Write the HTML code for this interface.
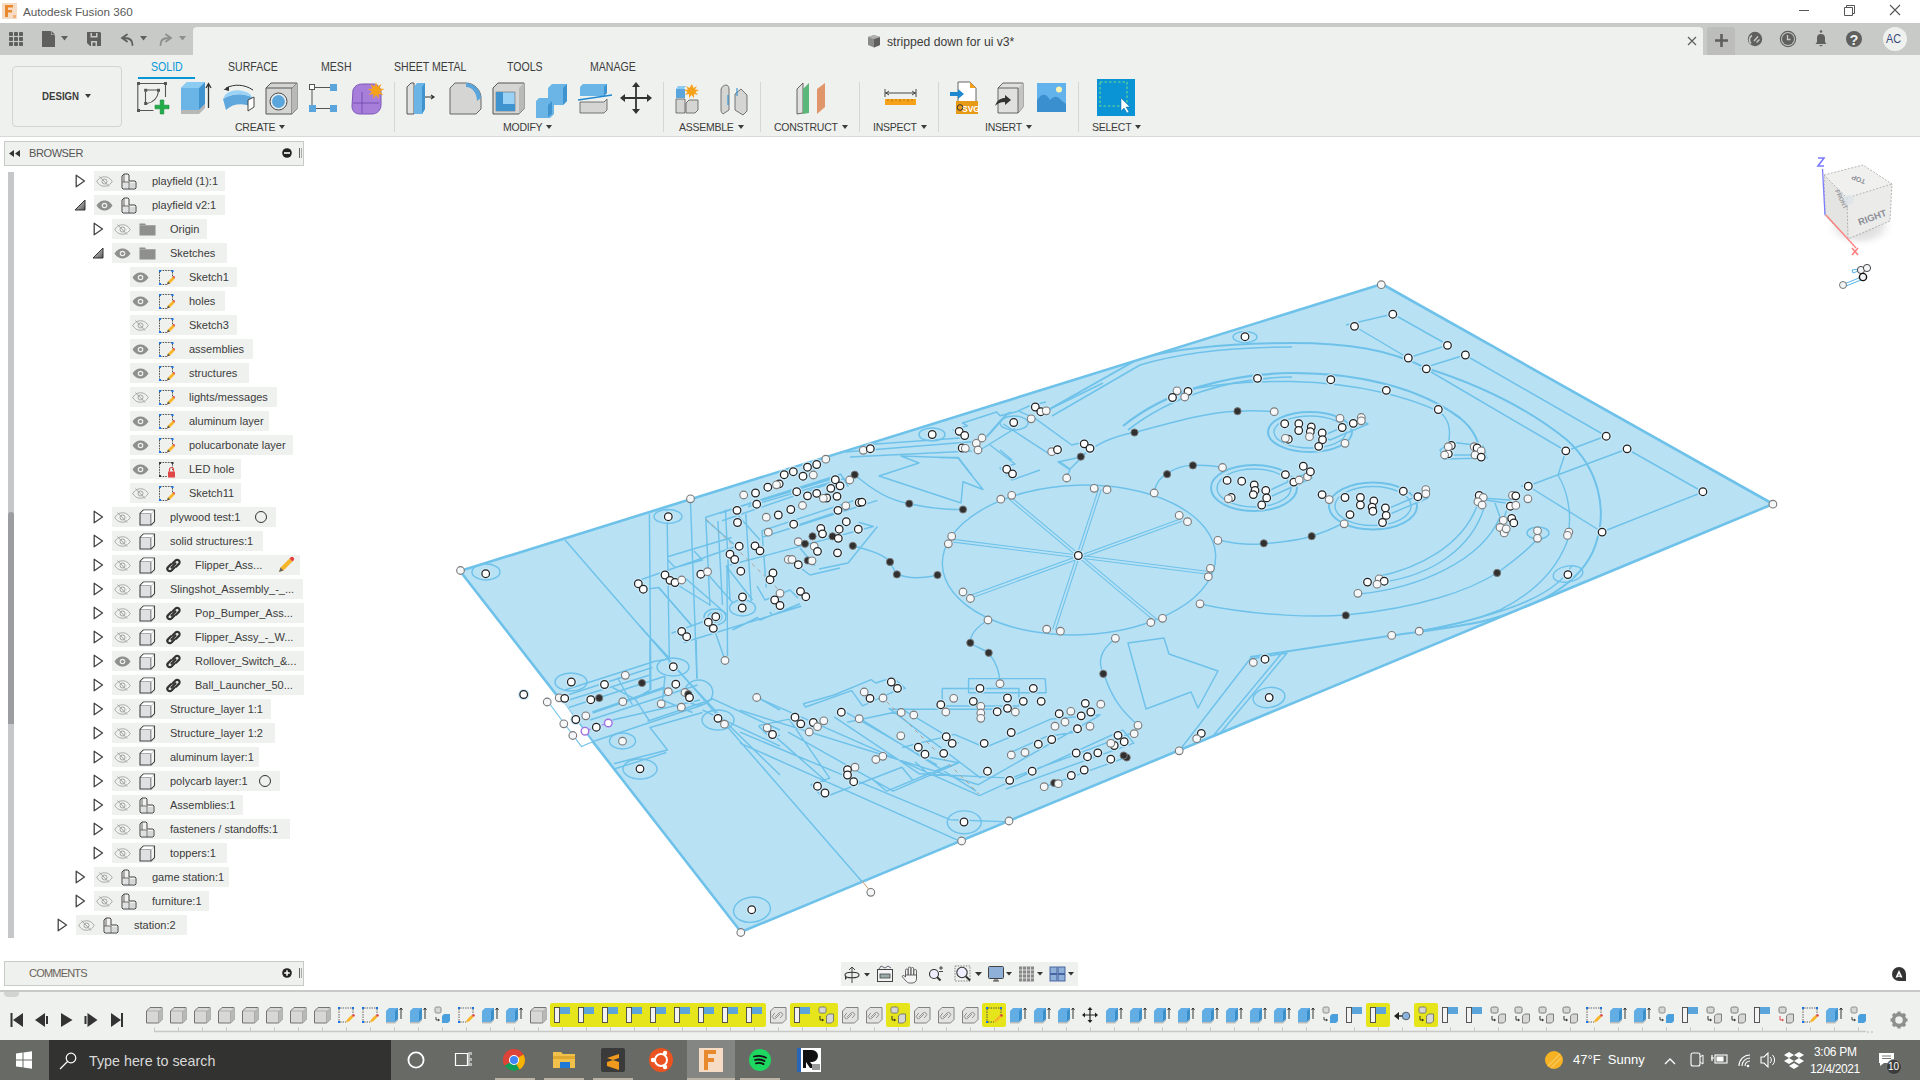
<!DOCTYPE html><html><head><meta charset="utf-8"><style>
*{box-sizing:border-box;margin:0;padding:0}
html,body{width:1920px;height:1080px;overflow:hidden;background:#fff;font-family:"Liberation Sans", sans-serif;}
.a{position:absolute}
.t{position:absolute;white-space:nowrap;line-height:1}
svg{position:absolute;overflow:visible}
</style></head><body>

<div class="a" style="left:0;top:0;width:1920px;height:23px;background:#fff"></div>
<svg style="left:2px;top:3px" width="15" height="16" viewBox="0 0 15 16">
<rect x="0" y="0" width="15" height="16" fill="#f6dcc4"/>
<path d="M3 2h8v2.5H6V7h4v2.5H6V14H3z" fill="#e8892d"/>
<path d="M11 12h3v3h-3z" fill="#f0b27a"/></svg>
<div class="t" style="left:23px;top:6px;font-size:11.7px;color:#5a5a5a">Autodesk Fusion 360</div>
<div class="a" style="left:1799px;top:10px;width:10px;height:1px;background:#555"></div>
<svg style="left:1844px;top:5px" width="11" height="11" viewBox="0 0 11 11"><path d="M0.5 2.5h8v8h-8z M2.5 2.5v-2h8v8h-2" fill="none" stroke="#555" stroke-width="1"/></svg>
<svg style="left:1890px;top:5px" width="11" height="11" viewBox="0 0 11 11"><path d="M0 0L10 10M10 0L0 10" stroke="#555" stroke-width="1.1"/></svg>
<div class="a" style="left:0;top:23px;width:1920px;height:32px;background:#c8cac7"></div>
<div class="a" style="left:193px;top:27px;width:1510px;height:28px;background:#eff1ee;border-top-left-radius:4px;border-top-right-radius:4px"></div>
<div class="a" style="left:1707px;top:27px;width:28px;height:28px;background:#bdbebc;border-top-left-radius:3px;border-top-right-radius:3px"></div>
<svg style="left:0;top:0" width="1" height="1"><rect x="9" y="32" width="4" height="4" rx="0.8" fill="#5f605e"/><rect x="14" y="32" width="4" height="4" rx="0.8" fill="#5f605e"/><rect x="19" y="32" width="4" height="4" rx="0.8" fill="#5f605e"/><rect x="9" y="37" width="4" height="4" rx="0.8" fill="#5f605e"/><rect x="14" y="37" width="4" height="4" rx="0.8" fill="#5f605e"/><rect x="19" y="37" width="4" height="4" rx="0.8" fill="#5f605e"/><rect x="9" y="42" width="4" height="4" rx="0.8" fill="#5f605e"/><rect x="14" y="42" width="4" height="4" rx="0.8" fill="#5f605e"/><rect x="19" y="42" width="4" height="4" rx="0.8" fill="#5f605e"/></svg>
<svg style="left:0;top:0" width="1" height="1"><path d="M42 31h8.5l4.5 4.5V47H42z" fill="#5f605e"/><path d="M51 31v4h4z" fill="#c8cac7"/><path d="M51.5 31l3.5 3.5h-3.5z" fill="#5f605e"/>
<path d="M61 36h7l-3.5 4.5z" fill="#5f605e"/>
<path d="M87 32h13l1 1v13H90l-3-3z" fill="#5f605e"/><rect x="90.5" y="33" width="7" height="4.5" fill="#c8cac7"/><rect x="92" y="33" width="4" height="3" fill="#5f605e"/><rect x="91" y="41" width="6" height="5" fill="#c8cac7"/><rect x="92.5" y="42.5" width="3" height="3.5" fill="#5f605e"/>
<path d="M132.5 45 C132.5 40 130 38 125 38 M127 34.5 L122 38 L127 41.5" fill="none" stroke="#5f605e" stroke-width="1.8" stroke-linecap="round"/>
<path d="M140 36h7l-3.5 4.5z" fill="#5f605e"/>
<path d="M160.5 45 C160.5 40 163 38 168 38 M166 34.5 L171 38 L166 41.5" fill="none" stroke="#8e8f8d" stroke-width="1.8" stroke-linecap="round"/>
<path d="M179 36h7l-3.5 4.5z" fill="#8e8f8d"/>
</svg>
<svg style="left:867px;top:34px" width="14" height="14" viewBox="0 0 14 14"><path d="M1 3l6-2 6 2v8l-6 2.5-6-2.5z" fill="#8a8b89"/><path d="M7 5l6-2v8l-6 2.5z" fill="#5f605e"/><path d="M1 3l6-2 6 2-6 2z" fill="#b0b1af"/></svg>
<div class="t" style="left:887px;top:36px;font-size:12.2px;color:#3c3c3c">stripped down for ui v3*</div>
<svg style="left:1688px;top:37px" width="9" height="9"><path d="M0 0L8 8M8 0L0 8" stroke="#5f605e" stroke-width="1.2"/></svg>
<svg style="left:1715px;top:34px" width="13" height="13"><path d="M6.5 0v13M0 6.5h13" stroke="#5f605e" stroke-width="2.6"/></svg>
<svg style="left:0;top:0" width="1" height="1">
<circle cx="1755" cy="39" r="7.2" fill="#5f605e"/><path d="M1751 43.5a5 5 0 0 1 1-8" stroke="#c8cac7" stroke-width="1.6" fill="none"/><path d="M1754 41l4-4.5M1756.5 42.5l3-3" stroke="#c8cac7" stroke-width="1.4"/>
<circle cx="1788" cy="39" r="7.6" fill="none" stroke="#5f605e" stroke-width="1.2"/><circle cx="1788" cy="39" r="6" fill="#5f605e"/><path d="M1787.5 35v4.5h3" stroke="#c8cac7" stroke-width="1.3" fill="none"/>
<path d="M1815.5 44 h11 l-1.5 -2 v-4 a4 4 0 0 0 -8 0 v4z" fill="#5f605e"/><circle cx="1821" cy="31.5" r="1.2" fill="#5f605e"/><path d="M1819 45h4l-2 1.5z" fill="#5f605e"/>
<circle cx="1854" cy="39" r="8" fill="#5f605e"/>
<circle cx="1895" cy="39" r="12" fill="#eff1ee"/>
</svg>
<svg style="left:0;top:0" width="1" height="1"><text x="1854" y="44.5" font-size="14.5" font-weight="bold" fill="#eff1ee" text-anchor="middle" font-family="Liberation Sans">?</text></svg>
<svg style="left:0;top:0" width="1" height="1"><text x="1893.5" y="43.5" font-size="12" fill="#3b4a7a" text-anchor="middle" font-family="Liberation Sans" transform="translate(1893.5 0) scale(0.9 1) translate(-1893.5 0)">AC</text></svg>
<div class="a" style="left:0;top:55px;width:1920px;height:82px;background:#eff1ee"></div>
<div class="a" style="left:0;top:136px;width:1920px;height:1px;background:#d8d9d7"></div>
<div class="a" style="left:12px;top:66px;width:110px;height:61px;border:1px solid #d3d4d2;border-radius:4px;background:#eff1ee"></div>
<div class="t" style="left:42px;top:91px;font-size:11px;font-weight:bold;color:#3c3c3c;transform:scaleX(0.88);transform-origin:0 0">DESIGN</div>
<svg style="left:85px;top:94px" width="7" height="4"><path d="M0 0h6l-3 4z" fill="#3c3c3c"/></svg>
<div class="t" style="left:151px;top:61px;font-size:12px;color:#0696d7;transform:scaleX(0.88);transform-origin:0 0">SOLID</div>
<div class="t" style="left:228px;top:61px;font-size:12px;color:#3c3c3c;transform:scaleX(0.88);transform-origin:0 0">SURFACE</div>
<div class="t" style="left:321px;top:61px;font-size:12px;color:#3c3c3c;transform:scaleX(0.88);transform-origin:0 0">MESH</div>
<div class="t" style="left:394px;top:61px;font-size:12px;color:#3c3c3c;transform:scaleX(0.88);transform-origin:0 0">SHEET METAL</div>
<div class="t" style="left:507px;top:61px;font-size:12px;color:#3c3c3c;transform:scaleX(0.88);transform-origin:0 0">TOOLS</div>
<div class="t" style="left:590px;top:61px;font-size:12px;color:#3c3c3c;transform:scaleX(0.88);transform-origin:0 0">MANAGE</div>
<div class="a" style="left:138px;top:77px;width:57px;height:2px;background:#0696d7"></div>
<div class="a" style="left:394px;top:82px;width:1px;height:50px;background:#d6d7d5"></div>
<div class="a" style="left:663px;top:82px;width:1px;height:50px;background:#d6d7d5"></div>
<div class="a" style="left:760px;top:82px;width:1px;height:50px;background:#d6d7d5"></div>
<div class="a" style="left:859px;top:82px;width:1px;height:50px;background:#d6d7d5"></div>
<div class="a" style="left:938px;top:82px;width:1px;height:50px;background:#d6d7d5"></div>
<div class="a" style="left:1078px;top:82px;width:1px;height:50px;background:#d6d7d5"></div>
<div class="t lab" style="left:235px;top:122px;font-size:10.5px;color:#3c3c3c;letter-spacing:-0.25px">CREATE<span style="display:inline-block;width:0;height:0;border-left:3.5px solid transparent;border-right:3.5px solid transparent;border-top:4px solid #3c3c3c;margin-left:4px;vertical-align:2px"></span></div>
<div class="t lab" style="left:503px;top:122px;font-size:10.5px;color:#3c3c3c;letter-spacing:-0.25px">MODIFY<span style="display:inline-block;width:0;height:0;border-left:3.5px solid transparent;border-right:3.5px solid transparent;border-top:4px solid #3c3c3c;margin-left:4px;vertical-align:2px"></span></div>
<div class="t lab" style="left:679px;top:122px;font-size:10.5px;color:#3c3c3c;letter-spacing:-0.25px">ASSEMBLE<span style="display:inline-block;width:0;height:0;border-left:3.5px solid transparent;border-right:3.5px solid transparent;border-top:4px solid #3c3c3c;margin-left:4px;vertical-align:2px"></span></div>
<div class="t lab" style="left:774px;top:122px;font-size:10.5px;color:#3c3c3c;letter-spacing:-0.25px">CONSTRUCT<span style="display:inline-block;width:0;height:0;border-left:3.5px solid transparent;border-right:3.5px solid transparent;border-top:4px solid #3c3c3c;margin-left:4px;vertical-align:2px"></span></div>
<div class="t lab" style="left:873px;top:122px;font-size:10.5px;color:#3c3c3c;letter-spacing:-0.25px">INSPECT<span style="display:inline-block;width:0;height:0;border-left:3.5px solid transparent;border-right:3.5px solid transparent;border-top:4px solid #3c3c3c;margin-left:4px;vertical-align:2px"></span></div>
<div class="t lab" style="left:985px;top:122px;font-size:10.5px;color:#3c3c3c;letter-spacing:-0.25px">INSERT<span style="display:inline-block;width:0;height:0;border-left:3.5px solid transparent;border-right:3.5px solid transparent;border-top:4px solid #3c3c3c;margin-left:4px;vertical-align:2px"></span></div>
<div class="t lab" style="left:1092px;top:122px;font-size:10.5px;color:#3c3c3c;letter-spacing:-0.25px">SELECT<span style="display:inline-block;width:0;height:0;border-left:3.5px solid transparent;border-right:3.5px solid transparent;border-top:4px solid #3c3c3c;margin-left:4px;vertical-align:2px"></span></div>
<svg style="left:0;top:0" width="1" height="1">
<!-- sketch -->
<g fill="none" stroke="#555" stroke-width="1.1"><path d="M139.5 83.5h25M137.8 85v24M139.5 110.5h14M165.5 85v12"/>
<path d="M147 90h10M145.5 92v11M147 103.5 q10-2 11.5-12"/></g>
<g fill="#555"><rect x="137" y="82" width="3" height="3"/><rect x="164" y="82" width="3" height="3"/><rect x="137" y="109" width="3" height="3"/>
<rect x="144.2" y="88.8" width="3" height="3"/><rect x="157" y="88.8" width="3" height="3"/><rect x="144.2" y="102" width="3" height="3"/></g>
<path d="M155 105.2h5.2v-5.2h3.6v5.2h5.2v3.6h-5.2v5.2h-3.6v-5.2h-5.2z" fill="#1fae48" stroke="#138a36" stroke-width="0.6"/>
<!-- extrude -->
<path d="M181 88l6-6h18v22l-6 6h-18z" fill="#6ab4e6"/><path d="M199 88l6-6v22l-6 6z" fill="#3f93cf"/><path d="M181 88l6-6h18l-6 6z" fill="#8ccbf2"/>
<path d="M181 110h18l6-6v4l-6 6h-18z" fill="#b7b8b6"/>
<path d="M208.5 108v-24M206 88l2.5-4.5 2.5 4.5" stroke="#333" stroke-width="1.3" fill="none"/>
<!-- revolve -->
<path d="M223 99c9-6 22-6 30-1l-1 9c-8-4-19-4-26 3z" fill="#5ea8dd"/><path d="M223 99c9-6 22-6 30-1l-3-4c-8-5-19-5-25 1z" fill="#9bd2f5"/>
<path d="M248 100l6-3v10l-6 4z" fill="#fff" stroke="#333" stroke-width="0.9"/>
<path d="M226 88c8-4 18-4 27 2" fill="none" stroke="#333" stroke-width="1"/><path d="M223.5 89.5l5.5-3v4.5z" fill="#333"/>
<!-- hole -->
<path d="M266 88l5-5h26v26l-5 5h-26z" fill="#d5d6d4" stroke="#555" stroke-width="1"/><path d="M266 88h26v26M292 88l5-5" fill="none" stroke="#555" stroke-width="1"/>
<path d="M292 88l5-5v26l-5 5z" fill="#b9bab8"/>
<circle cx="278.5" cy="101.5" r="8.5" fill="#eee" stroke="#444" stroke-width="1"/><circle cx="278.5" cy="101.5" r="6.5" fill="#5aa6dc"/><path d="M280 95 a6 6 0 0 1 4 8 a7 7 0 0 0 -4 -8z" fill="#e9eaea"/>
<!-- pattern -->
<rect x="309.5" y="84.5" width="5" height="5" fill="#fff" stroke="#555" stroke-width="1"/>
<rect x="330" y="84" width="7" height="7" fill="#5aa6dc"/><rect x="309" y="105" width="7" height="7" fill="#5aa6dc"/><rect x="330" y="105" width="7" height="7" fill="#5aa6dc"/>
<path d="M315 87.5h15M312 90v15M316 108.5h14" stroke="#555" stroke-width="1"/>
<!-- form -->
<path d="M353 90c2-5 6-6 10-6h10c5 0 8 4 8 9v12c0 5-4 9-9 9h-12c-5 0-8-3-8-8z" fill="#a77fdb" stroke="#7d55b8" stroke-width="1"/>
<path d="M362 92v21M353 103h26" stroke="#6b46a8" stroke-width="0.8"/>
<path d="M376 82l1.5 4.5 4-2.5-2 4.5 5 .5-4.5 2.5 3.5 3.5-5-1 .5 5-3-4-3 4 .5-5-5 1 3.5-3.5-4.5-2.5 5-.5-2-4.5 4 2.5z" fill="#f7a21b"/>
<!-- press pull -->
<path d="M407 87l4-4h3v31h-7z" fill="#e0e1df" stroke="#555" stroke-width="1"/>
<path d="M414 87l3-4h8v26l-3 5h-8z" fill="#6ab4e6"/><path d="M422 87l3-4v26l-3 5z" fill="#3f93cf"/>
<path d="M425 97h8M431 95l3 2-3 2" stroke="#333" stroke-width="1.2" fill="none"/>
<!-- fillet -->
<path d="M450 88l5-5h11c8 0 15 7 15 15v11l-5 5h-26z" fill="#d5d6d4" stroke="#666" stroke-width="1"/>
<path d="M466 83c8 0 15 7 15 15l-4 3c0-8-5-14-11-14z" fill="#5aa6dc"/>
<!-- shell -->
<path d="M493 88l5-5h26v26l-5 5h-26z" fill="#d5d6d4" stroke="#555" stroke-width="1"/><path d="M519 88l5-5v26l-5 5z" fill="#b9bab8"/>
<rect x="496" y="92" width="19" height="19" fill="#9ad2f5" stroke="#666" stroke-width="0.6"/><path d="M496 92h7v12h12v7h-19z" fill="#3f93cf"/>
<!-- combine -->
<path d="M536 101l3-3h9v-10l4-4h15v17l-4 4h-9v9l-4 4h-14z" fill="#6ab4e6"/><path d="M563 88l4-4v17l-4 4z M548 105l4-4v13l-4 3z" fill="#3f93cf"/>
<!-- split -->
<path d="M580 87l3-3h24v9l-3 3h-24z" fill="#6ab4e6"/><path d="M604 87l3-3v9l-3 3z" fill="#3f93cf"/>
<path d="M578 100l34-5" stroke="#1e88d0" stroke-width="1.3"/>
<path d="M580 102h24l3-3v11l-3 3h-24z" fill="#d5d6d4" stroke="#666" stroke-width="0.9"/>
<!-- move -->
<path d="M636 84v28M622 98h28" stroke="#333" stroke-width="1.8"/>
<path d="M636 82l-4 5h8z M636 114l-4-5h8z M620 98l5-4v8z M652 98l-5-4v8z" fill="#333"/>
<!-- new component -->
<path d="M676 89l2-3h8l-2 3z" fill="#8ccbf2"/><rect x="676" y="89" width="9" height="9" fill="#5aa6dc"/>
<path d="M676 99h9v14h-9z M686 103l3-3h9v10l-3 3h-9z" fill="#d5d6d4" stroke="#666" stroke-width="0.9"/>
<path d="M692 84l1.5 4 3.5-2-2 3.5 4 .5-3.5 2 2.5 3-4-1 0 4-2.5-3-2.5 3 0-4-4 1 2.5-3-3.5-2 4-.5-2-3.5 3.5 2z" fill="#f7a21b"/>
<!-- joint -->
<path d="M721 90c0-3 3-5 5-5s3 2 3 4v21l-6 4c-1-1-2-2-2-4z" fill="#d5d6d4" stroke="#666" stroke-width="0.9"/>
<path d="M735 94l6-5 6 6v16l-4 4-8-5z" fill="#d5d6d4" stroke="#666" stroke-width="0.9"/>
<path d="M728 95v10M737 88v8" stroke="#1e88d0" stroke-width="1"/>
<!-- offset plane -->
<path d="M797 89l6-6v30l-6 1z" fill="#e0e1df" stroke="#555" stroke-width="0.9"/><path d="M803 89l6-6v30l-6 1z" fill="#5cb87a"/>
<path d="M817 89l8-6v24l-8 7z" fill="#e0956a"/>
<g transform="translate(4 0)"><!-- measure -->
<path d="M881 93h31M881 89v8M912 89v8M885 91l-3 2 3 2M908 91l3 2-3 2" stroke="#333" stroke-width="0.9" fill="none"/>
<rect x="881" y="99" width="31" height="6" fill="#f7a21b"/><path d="M884 99v2M888 99v3M892 99v2M896 99v3M900 99v2M904 99v3M908 99v2" stroke="#a86a00" stroke-width="0.7"/>
</g>
<!-- insert svg -->
<path d="M958 82h12l6 6v25h-18z" fill="#fff" stroke="#555" stroke-width="0.9"/><path d="M970 82l6 6h-6z" fill="#f7a21b"/>
<path d="M950 92h8v-3l6 5-6 5v-3h-8z" fill="#1e88d0"/>
<rect x="956" y="101" width="22" height="13" fill="#e79a16"/><text x="962" y="111.5" font-size="8.5" font-weight="bold" fill="#fff" font-family="Liberation Sans">SVG</text><circle cx="960" cy="107.5" r="2.8" fill="none" stroke="#333" stroke-width="1"/>
<!-- insert mesh -->
<path d="M998 88l5-5h20v24l-5 6h-20z" fill="#e0e1df" stroke="#555" stroke-width="0.9"/><path d="M1018 88l5-5v24l-5 6z" fill="#c4c5c3"/><path d="M998 88h20v25" fill="none" stroke="#555" stroke-width="0.9"/>
<path d="M995 106c2-6 6-8 10-8v-3l6 5-6 5v-3c-5 0-8 2-10 4z" fill="#333"/>
<!-- image -->
<rect x="1037" y="83" width="29" height="29" fill="#62b3ec"/><path d="M1037 112v-12c5-7 9-7 13 0 4-4 7-4 10-1 3 3 5 4 6 5v8z" fill="#3a8fcf"/><circle cx="1059" cy="89.5" r="3" fill="#fff3b0"/>
<!-- select -->
<rect x="1097" y="79" width="38" height="37" fill="#0a94d6"/>
<rect x="1100" y="82" width="27" height="24" fill="none" stroke="#6fdc88" stroke-width="1.1" stroke-dasharray="2.5 2"/>
<path d="M1121 98l0 13 3-3 3 5 2-1-3-5h4z" fill="#fff" stroke="#0a6aa0" stroke-width="0.5"/>
</svg>
<div class="a" style="left:4px;top:141px;width:300px;height:25px;border:1px solid #c8cac7;background:#eff1ee"></div>
<svg style="left:9px;top:150px" width="12" height="7"><path d="M5 0v7L0 3.5z M11 0v7L6 3.5z" fill="#333"/></svg>
<div class="t" style="left:29px;top:148px;font-size:11px;color:#555;letter-spacing:-0.4px">BROWSER</div>
<svg style="left:282px;top:148px" width="11" height="11"><circle cx="5" cy="5" r="4.8" fill="#222"/><rect x="2" y="4.2" width="6" height="1.6" fill="#fff"/></svg>
<div class="a" style="left:299px;top:148px;width:1px;height:10px;background:#666"></div><div class="a" style="left:301px;top:148px;width:1px;height:10px;background:#aaa"></div>
<div class="a" style="left:8px;top:172px;width:6px;height:766px;background:#c5c7c9"></div>
<div class="a" style="left:8px;top:512px;width:6px;height:212px;background:#9c9da0;border-radius:3px 3px 0 0"></div>
<div class="a" style="left:94px;top:171px;width:131px;height:20px;background:#eff1ee"></div>
<svg style="left:74.5px;top:174.0px" width="11" height="14" viewBox="0 0 11 14"><path d="M1.2 1.2L9.5 7L1.2 12.8z" fill="#fff" stroke="#444" stroke-width="1.3" stroke-linejoin="round"/></svg>
<svg style="left:95.5px;top:175.5px" width="17" height="11" viewBox="0 0 17 11"><path d="M0.8 5.5C3 1.8 6 0.8 8.5 0.8S14 1.8 16.2 5.5C14 9.2 11 10.2 8.5 10.2S3 9.2 0.8 5.5z" fill="none" stroke="#a3a4a2" stroke-width="1"/><circle cx="8.5" cy="5.5" r="2.5" fill="none" stroke="#a3a4a2" stroke-width="1"/><path d="M3.5 0.5L13 10.5" stroke="#a3a4a2" stroke-width="1"/></svg>
<svg style="left:120.5px;top:172.5px" width="17" height="17" viewBox="0 0 17 17"><path d="M1 3l2-2h4l1 1v6h6l1 1v6l-1 1H2l-1-1z" fill="#f2f3f1" stroke="#444" stroke-width="1"/><path d="M1.5 9h6.5v7M3 1v8" stroke="#444" stroke-width="0.8" fill="none"/><rect x="9" y="10" width="5" height="5" fill="#d6d7d8"/><rect x="2" y="10" width="5" height="5" fill="#dfe0e1"/></svg>
<div class="t" style="left:152px;top:176px;font-size:11px;color:#3c3c3c">playfield (1):1</div>
<div class="a" style="left:94px;top:195px;width:131px;height:20px;background:#eff1ee"></div>
<svg style="left:74.0px;top:199.0px" width="12" height="12" viewBox="0 0 12 12"><defs><linearGradient id="gd" x1="0" y1="0" x2="1" y2="1"><stop offset="0" stop-color="#e8e8e8"/><stop offset="1" stop-color="#555"/></linearGradient></defs><path d="M11 1V11H1z" fill="url(#gd)" stroke="#333" stroke-width="1" stroke-linejoin="round"/></svg>
<svg style="left:95.5px;top:199.5px" width="17" height="11" viewBox="0 0 17 11"><path d="M0.5 5.5C3 1.5 6 0.5 8.5 0.5S14 1.5 16.5 5.5C14 9.5 11 10.5 8.5 10.5S3 9.5 0.5 5.5z" fill="#8f908e"/><circle cx="8.5" cy="5.5" r="2.8" fill="#eff1ee"/><circle cx="8.5" cy="5.5" r="1.6" fill="#8f908e"/></svg>
<svg style="left:120.5px;top:196.5px" width="17" height="17" viewBox="0 0 17 17"><path d="M1 3l2-2h4l1 1v6h6l1 1v6l-1 1H2l-1-1z" fill="#f2f3f1" stroke="#444" stroke-width="1"/><path d="M1.5 9h6.5v7M3 1v8" stroke="#444" stroke-width="0.8" fill="none"/><rect x="9" y="10" width="5" height="5" fill="#d6d7d8"/><rect x="2" y="10" width="5" height="5" fill="#dfe0e1"/></svg>
<div class="t" style="left:152px;top:200px;font-size:11px;color:#3c3c3c">playfield v2:1</div>
<div class="a" style="left:112px;top:219px;width:95px;height:20px;background:#eff1ee"></div>
<svg style="left:92.5px;top:222.0px" width="11" height="14" viewBox="0 0 11 14"><path d="M1.2 1.2L9.5 7L1.2 12.8z" fill="#fff" stroke="#444" stroke-width="1.3" stroke-linejoin="round"/></svg>
<svg style="left:113.5px;top:223.5px" width="17" height="11" viewBox="0 0 17 11"><path d="M0.8 5.5C3 1.8 6 0.8 8.5 0.8S14 1.8 16.2 5.5C14 9.2 11 10.2 8.5 10.2S3 9.2 0.8 5.5z" fill="none" stroke="#a3a4a2" stroke-width="1"/><circle cx="8.5" cy="5.5" r="2.5" fill="none" stroke="#a3a4a2" stroke-width="1"/><path d="M3.5 0.5L13 10.5" stroke="#a3a4a2" stroke-width="1"/></svg>
<svg style="left:138.5px;top:222.0px" width="17" height="14" viewBox="0 0 17 14"><path d="M0.5 1.5H6L7 3H16.5V13.5H0.5z" fill="#8f908e"/><path d="M0.5 3.5H16.5" stroke="#b5b6b4" stroke-width="0.6"/></svg>
<div class="t" style="left:170px;top:224px;font-size:11px;color:#3c3c3c">Origin</div>
<div class="a" style="left:112px;top:243px;width:115px;height:20px;background:#eff1ee"></div>
<svg style="left:92.0px;top:247.0px" width="12" height="12" viewBox="0 0 12 12"><defs><linearGradient id="gd" x1="0" y1="0" x2="1" y2="1"><stop offset="0" stop-color="#e8e8e8"/><stop offset="1" stop-color="#555"/></linearGradient></defs><path d="M11 1V11H1z" fill="url(#gd)" stroke="#333" stroke-width="1" stroke-linejoin="round"/></svg>
<svg style="left:113.5px;top:247.5px" width="17" height="11" viewBox="0 0 17 11"><path d="M0.5 5.5C3 1.5 6 0.5 8.5 0.5S14 1.5 16.5 5.5C14 9.5 11 10.5 8.5 10.5S3 9.5 0.5 5.5z" fill="#8f908e"/><circle cx="8.5" cy="5.5" r="2.8" fill="#eff1ee"/><circle cx="8.5" cy="5.5" r="1.6" fill="#8f908e"/></svg>
<svg style="left:138.5px;top:246.0px" width="17" height="14" viewBox="0 0 17 14"><path d="M0.5 1.5H6L7 3H16.5V13.5H0.5z" fill="#8f908e"/><path d="M0.5 3.5H16.5" stroke="#b5b6b4" stroke-width="0.6"/></svg>
<div class="t" style="left:170px;top:248px;font-size:11px;color:#3c3c3c">Sketches</div>
<div class="a" style="left:130px;top:267px;width:107px;height:20px;background:#eff1ee"></div>
<svg style="left:131.5px;top:271.5px" width="17" height="11" viewBox="0 0 17 11"><path d="M0.5 5.5C3 1.5 6 0.5 8.5 0.5S14 1.5 16.5 5.5C14 9.5 11 10.5 8.5 10.5S3 9.5 0.5 5.5z" fill="#8f908e"/><circle cx="8.5" cy="5.5" r="2.8" fill="#eff1ee"/><circle cx="8.5" cy="5.5" r="1.6" fill="#8f908e"/></svg>
<svg style="left:157.5px;top:268.5px" width="17" height="17" viewBox="0 0 17 17"><path d="M2 1.5h12M1.5 3v11M2 15.5h7M14.5 3v6" stroke="#444" stroke-width="0.9" stroke-dasharray="1.6 1" fill="none"/><rect x="1" y="1" width="2" height="2" fill="#1a73e8"/><rect x="13.5" y="1" width="2" height="2" fill="#1a73e8"/><rect x="1" y="14" width="2" height="2" fill="#1a73e8"/><path d="M9 15.5l1-3 5-5 2 2-5 5z" fill="#f7b52b"/><path d="M14.5 7.5l2 2 .5-1.5-1-1z" fill="#e23c3c"/><path d="M9 15.5l1-3 2 2z" fill="#555"/></svg>
<div class="t" style="left:189px;top:272px;font-size:11px;color:#3c3c3c">Sketch1</div>
<div class="a" style="left:130px;top:291px;width:95px;height:20px;background:#eff1ee"></div>
<svg style="left:131.5px;top:295.5px" width="17" height="11" viewBox="0 0 17 11"><path d="M0.5 5.5C3 1.5 6 0.5 8.5 0.5S14 1.5 16.5 5.5C14 9.5 11 10.5 8.5 10.5S3 9.5 0.5 5.5z" fill="#8f908e"/><circle cx="8.5" cy="5.5" r="2.8" fill="#eff1ee"/><circle cx="8.5" cy="5.5" r="1.6" fill="#8f908e"/></svg>
<svg style="left:157.5px;top:292.5px" width="17" height="17" viewBox="0 0 17 17"><path d="M2 1.5h12M1.5 3v11M2 15.5h7M14.5 3v6" stroke="#444" stroke-width="0.9" stroke-dasharray="1.6 1" fill="none"/><rect x="1" y="1" width="2" height="2" fill="#1a73e8"/><rect x="13.5" y="1" width="2" height="2" fill="#1a73e8"/><rect x="1" y="14" width="2" height="2" fill="#1a73e8"/><path d="M9 15.5l1-3 5-5 2 2-5 5z" fill="#f7b52b"/><path d="M14.5 7.5l2 2 .5-1.5-1-1z" fill="#e23c3c"/><path d="M9 15.5l1-3 2 2z" fill="#555"/></svg>
<div class="t" style="left:189px;top:296px;font-size:11px;color:#3c3c3c">holes</div>
<div class="a" style="left:130px;top:315px;width:107px;height:20px;background:#eff1ee"></div>
<svg style="left:131.5px;top:319.5px" width="17" height="11" viewBox="0 0 17 11"><path d="M0.8 5.5C3 1.8 6 0.8 8.5 0.8S14 1.8 16.2 5.5C14 9.2 11 10.2 8.5 10.2S3 9.2 0.8 5.5z" fill="none" stroke="#a3a4a2" stroke-width="1"/><circle cx="8.5" cy="5.5" r="2.5" fill="none" stroke="#a3a4a2" stroke-width="1"/><path d="M3.5 0.5L13 10.5" stroke="#a3a4a2" stroke-width="1"/></svg>
<svg style="left:157.5px;top:316.5px" width="17" height="17" viewBox="0 0 17 17"><path d="M2 1.5h12M1.5 3v11M2 15.5h7M14.5 3v6" stroke="#444" stroke-width="0.9" stroke-dasharray="1.6 1" fill="none"/><rect x="1" y="1" width="2" height="2" fill="#1a73e8"/><rect x="13.5" y="1" width="2" height="2" fill="#1a73e8"/><rect x="1" y="14" width="2" height="2" fill="#1a73e8"/><path d="M9 15.5l1-3 5-5 2 2-5 5z" fill="#f7b52b"/><path d="M14.5 7.5l2 2 .5-1.5-1-1z" fill="#e23c3c"/><path d="M9 15.5l1-3 2 2z" fill="#555"/></svg>
<div class="t" style="left:189px;top:320px;font-size:11px;color:#3c3c3c">Sketch3</div>
<div class="a" style="left:130px;top:339px;width:123px;height:20px;background:#eff1ee"></div>
<svg style="left:131.5px;top:343.5px" width="17" height="11" viewBox="0 0 17 11"><path d="M0.5 5.5C3 1.5 6 0.5 8.5 0.5S14 1.5 16.5 5.5C14 9.5 11 10.5 8.5 10.5S3 9.5 0.5 5.5z" fill="#8f908e"/><circle cx="8.5" cy="5.5" r="2.8" fill="#eff1ee"/><circle cx="8.5" cy="5.5" r="1.6" fill="#8f908e"/></svg>
<svg style="left:157.5px;top:340.5px" width="17" height="17" viewBox="0 0 17 17"><path d="M2 1.5h12M1.5 3v11M2 15.5h7M14.5 3v6" stroke="#444" stroke-width="0.9" stroke-dasharray="1.6 1" fill="none"/><rect x="1" y="1" width="2" height="2" fill="#1a73e8"/><rect x="13.5" y="1" width="2" height="2" fill="#1a73e8"/><rect x="1" y="14" width="2" height="2" fill="#1a73e8"/><path d="M9 15.5l1-3 5-5 2 2-5 5z" fill="#f7b52b"/><path d="M14.5 7.5l2 2 .5-1.5-1-1z" fill="#e23c3c"/><path d="M9 15.5l1-3 2 2z" fill="#555"/></svg>
<div class="t" style="left:189px;top:344px;font-size:11px;color:#3c3c3c">assemblies</div>
<div class="a" style="left:130px;top:363px;width:119px;height:20px;background:#eff1ee"></div>
<svg style="left:131.5px;top:367.5px" width="17" height="11" viewBox="0 0 17 11"><path d="M0.5 5.5C3 1.5 6 0.5 8.5 0.5S14 1.5 16.5 5.5C14 9.5 11 10.5 8.5 10.5S3 9.5 0.5 5.5z" fill="#8f908e"/><circle cx="8.5" cy="5.5" r="2.8" fill="#eff1ee"/><circle cx="8.5" cy="5.5" r="1.6" fill="#8f908e"/></svg>
<svg style="left:157.5px;top:364.5px" width="17" height="17" viewBox="0 0 17 17"><path d="M2 1.5h12M1.5 3v11M2 15.5h7M14.5 3v6" stroke="#444" stroke-width="0.9" stroke-dasharray="1.6 1" fill="none"/><rect x="1" y="1" width="2" height="2" fill="#1a73e8"/><rect x="13.5" y="1" width="2" height="2" fill="#1a73e8"/><rect x="1" y="14" width="2" height="2" fill="#1a73e8"/><path d="M9 15.5l1-3 5-5 2 2-5 5z" fill="#f7b52b"/><path d="M14.5 7.5l2 2 .5-1.5-1-1z" fill="#e23c3c"/><path d="M9 15.5l1-3 2 2z" fill="#555"/></svg>
<div class="t" style="left:189px;top:368px;font-size:11px;color:#3c3c3c">structures</div>
<div class="a" style="left:130px;top:387px;width:147px;height:20px;background:#eff1ee"></div>
<svg style="left:131.5px;top:391.5px" width="17" height="11" viewBox="0 0 17 11"><path d="M0.8 5.5C3 1.8 6 0.8 8.5 0.8S14 1.8 16.2 5.5C14 9.2 11 10.2 8.5 10.2S3 9.2 0.8 5.5z" fill="none" stroke="#a3a4a2" stroke-width="1"/><circle cx="8.5" cy="5.5" r="2.5" fill="none" stroke="#a3a4a2" stroke-width="1"/><path d="M3.5 0.5L13 10.5" stroke="#a3a4a2" stroke-width="1"/></svg>
<svg style="left:157.5px;top:388.5px" width="17" height="17" viewBox="0 0 17 17"><path d="M2 1.5h12M1.5 3v11M2 15.5h7M14.5 3v6" stroke="#444" stroke-width="0.9" stroke-dasharray="1.6 1" fill="none"/><rect x="1" y="1" width="2" height="2" fill="#1a73e8"/><rect x="13.5" y="1" width="2" height="2" fill="#1a73e8"/><rect x="1" y="14" width="2" height="2" fill="#1a73e8"/><path d="M9 15.5l1-3 5-5 2 2-5 5z" fill="#f7b52b"/><path d="M14.5 7.5l2 2 .5-1.5-1-1z" fill="#e23c3c"/><path d="M9 15.5l1-3 2 2z" fill="#555"/></svg>
<div class="t" style="left:189px;top:392px;font-size:11px;color:#3c3c3c">lights/messages</div>
<div class="a" style="left:130px;top:411px;width:139px;height:20px;background:#eff1ee"></div>
<svg style="left:131.5px;top:415.5px" width="17" height="11" viewBox="0 0 17 11"><path d="M0.5 5.5C3 1.5 6 0.5 8.5 0.5S14 1.5 16.5 5.5C14 9.5 11 10.5 8.5 10.5S3 9.5 0.5 5.5z" fill="#8f908e"/><circle cx="8.5" cy="5.5" r="2.8" fill="#eff1ee"/><circle cx="8.5" cy="5.5" r="1.6" fill="#8f908e"/></svg>
<svg style="left:157.5px;top:412.5px" width="17" height="17" viewBox="0 0 17 17"><path d="M2 1.5h12M1.5 3v11M2 15.5h7M14.5 3v6" stroke="#444" stroke-width="0.9" stroke-dasharray="1.6 1" fill="none"/><rect x="1" y="1" width="2" height="2" fill="#1a73e8"/><rect x="13.5" y="1" width="2" height="2" fill="#1a73e8"/><rect x="1" y="14" width="2" height="2" fill="#1a73e8"/><path d="M9 15.5l1-3 5-5 2 2-5 5z" fill="#f7b52b"/><path d="M14.5 7.5l2 2 .5-1.5-1-1z" fill="#e23c3c"/><path d="M9 15.5l1-3 2 2z" fill="#555"/></svg>
<div class="t" style="left:189px;top:416px;font-size:11px;color:#3c3c3c">aluminum layer</div>
<div class="a" style="left:130px;top:435px;width:163px;height:20px;background:#eff1ee"></div>
<svg style="left:131.5px;top:439.5px" width="17" height="11" viewBox="0 0 17 11"><path d="M0.5 5.5C3 1.5 6 0.5 8.5 0.5S14 1.5 16.5 5.5C14 9.5 11 10.5 8.5 10.5S3 9.5 0.5 5.5z" fill="#8f908e"/><circle cx="8.5" cy="5.5" r="2.8" fill="#eff1ee"/><circle cx="8.5" cy="5.5" r="1.6" fill="#8f908e"/></svg>
<svg style="left:157.5px;top:436.5px" width="17" height="17" viewBox="0 0 17 17"><path d="M2 1.5h12M1.5 3v11M2 15.5h7M14.5 3v6" stroke="#444" stroke-width="0.9" stroke-dasharray="1.6 1" fill="none"/><rect x="1" y="1" width="2" height="2" fill="#1a73e8"/><rect x="13.5" y="1" width="2" height="2" fill="#1a73e8"/><rect x="1" y="14" width="2" height="2" fill="#1a73e8"/><path d="M9 15.5l1-3 5-5 2 2-5 5z" fill="#f7b52b"/><path d="M14.5 7.5l2 2 .5-1.5-1-1z" fill="#e23c3c"/><path d="M9 15.5l1-3 2 2z" fill="#555"/></svg>
<div class="t" style="left:189px;top:440px;font-size:11px;color:#3c3c3c">polucarbonate layer</div>
<div class="a" style="left:130px;top:459px;width:111px;height:20px;background:#eff1ee"></div>
<svg style="left:131.5px;top:463.5px" width="17" height="11" viewBox="0 0 17 11"><path d="M0.5 5.5C3 1.5 6 0.5 8.5 0.5S14 1.5 16.5 5.5C14 9.5 11 10.5 8.5 10.5S3 9.5 0.5 5.5z" fill="#8f908e"/><circle cx="8.5" cy="5.5" r="2.8" fill="#eff1ee"/><circle cx="8.5" cy="5.5" r="1.6" fill="#8f908e"/></svg>
<svg style="left:157.5px;top:460.5px" width="17" height="17" viewBox="0 0 17 17"><path d="M2 1.5h12M1.5 3v11M2 15.5h7M14.5 3v6" stroke="#444" stroke-width="0.9" stroke-dasharray="1.6 1" fill="none"/><rect x="1" y="1" width="2" height="2" fill="#333"/><rect x="13.5" y="1" width="2" height="2" fill="#333"/><rect x="1" y="14" width="2" height="2" fill="#333"/><rect x="10" y="10.5" width="7" height="6" fill="#e04848"/><path d="M11.5 10.5v-2a2 2 0 0 1 4 0v2" stroke="#e04848" stroke-width="1.2" fill="none"/></svg>
<div class="t" style="left:189px;top:464px;font-size:11px;color:#3c3c3c">LED hole</div>
<div class="a" style="left:130px;top:483px;width:111px;height:20px;background:#eff1ee"></div>
<svg style="left:131.5px;top:487.5px" width="17" height="11" viewBox="0 0 17 11"><path d="M0.8 5.5C3 1.8 6 0.8 8.5 0.8S14 1.8 16.2 5.5C14 9.2 11 10.2 8.5 10.2S3 9.2 0.8 5.5z" fill="none" stroke="#a3a4a2" stroke-width="1"/><circle cx="8.5" cy="5.5" r="2.5" fill="none" stroke="#a3a4a2" stroke-width="1"/><path d="M3.5 0.5L13 10.5" stroke="#a3a4a2" stroke-width="1"/></svg>
<svg style="left:157.5px;top:484.5px" width="17" height="17" viewBox="0 0 17 17"><path d="M2 1.5h12M1.5 3v11M2 15.5h7M14.5 3v6" stroke="#444" stroke-width="0.9" stroke-dasharray="1.6 1" fill="none"/><rect x="1" y="1" width="2" height="2" fill="#1a73e8"/><rect x="13.5" y="1" width="2" height="2" fill="#1a73e8"/><rect x="1" y="14" width="2" height="2" fill="#1a73e8"/><path d="M9 15.5l1-3 5-5 2 2-5 5z" fill="#f7b52b"/><path d="M14.5 7.5l2 2 .5-1.5-1-1z" fill="#e23c3c"/><path d="M9 15.5l1-3 2 2z" fill="#555"/></svg>
<div class="t" style="left:189px;top:488px;font-size:11px;color:#3c3c3c">Sketch11</div>
<div class="a" style="left:112px;top:507px;width:164px;height:20px;background:#eff1ee"></div>
<svg style="left:92.5px;top:510.0px" width="11" height="14" viewBox="0 0 11 14"><path d="M1.2 1.2L9.5 7L1.2 12.8z" fill="#fff" stroke="#444" stroke-width="1.3" stroke-linejoin="round"/></svg>
<svg style="left:113.5px;top:511.5px" width="17" height="11" viewBox="0 0 17 11"><path d="M0.8 5.5C3 1.8 6 0.8 8.5 0.8S14 1.8 16.2 5.5C14 9.2 11 10.2 8.5 10.2S3 9.2 0.8 5.5z" fill="none" stroke="#a3a4a2" stroke-width="1"/><circle cx="8.5" cy="5.5" r="2.5" fill="none" stroke="#a3a4a2" stroke-width="1"/><path d="M3.5 0.5L13 10.5" stroke="#a3a4a2" stroke-width="1"/></svg>
<svg style="left:138.5px;top:508.5px" width="17" height="17" viewBox="0 0 17 17"><path d="M1 4.5L4.5 1H15.5V12.5L12 16H1z" fill="#dfe0e2" stroke="#444" stroke-width="1.1" stroke-linejoin="round"/><path d="M1 4.5H12V16M12 4.5L15.5 1" fill="none" stroke="#444" stroke-width="0.9"/><path d="M1.5 4.5L4.5 1.5H15L12 4.5z" fill="#fff"/><path d="M12.5 4.5L15 2V12L12.5 15z" fill="#f5f5f5"/></svg>
<div class="t" style="left:170px;top:512px;font-size:11px;color:#3c3c3c">plywood test:1</div>
<svg style="left:255px;top:511px" width="12" height="12"><circle cx="6" cy="6" r="5.5" fill="none" stroke="#333" stroke-width="1"/></svg>
<div class="a" style="left:112px;top:531px;width:151px;height:20px;background:#eff1ee"></div>
<svg style="left:92.5px;top:534.0px" width="11" height="14" viewBox="0 0 11 14"><path d="M1.2 1.2L9.5 7L1.2 12.8z" fill="#fff" stroke="#444" stroke-width="1.3" stroke-linejoin="round"/></svg>
<svg style="left:113.5px;top:535.5px" width="17" height="11" viewBox="0 0 17 11"><path d="M0.8 5.5C3 1.8 6 0.8 8.5 0.8S14 1.8 16.2 5.5C14 9.2 11 10.2 8.5 10.2S3 9.2 0.8 5.5z" fill="none" stroke="#a3a4a2" stroke-width="1"/><circle cx="8.5" cy="5.5" r="2.5" fill="none" stroke="#a3a4a2" stroke-width="1"/><path d="M3.5 0.5L13 10.5" stroke="#a3a4a2" stroke-width="1"/></svg>
<svg style="left:138.5px;top:532.5px" width="17" height="17" viewBox="0 0 17 17"><path d="M1 4.5L4.5 1H15.5V12.5L12 16H1z" fill="#dfe0e2" stroke="#444" stroke-width="1.1" stroke-linejoin="round"/><path d="M1 4.5H12V16M12 4.5L15.5 1" fill="none" stroke="#444" stroke-width="0.9"/><path d="M1.5 4.5L4.5 1.5H15L12 4.5z" fill="#fff"/><path d="M12.5 4.5L15 2V12L12.5 15z" fill="#f5f5f5"/></svg>
<div class="t" style="left:170px;top:536px;font-size:11px;color:#3c3c3c">solid structures:1</div>
<div class="a" style="left:112px;top:555px;width:188px;height:20px;background:#eff1ee"></div>
<svg style="left:92.5px;top:558.0px" width="11" height="14" viewBox="0 0 11 14"><path d="M1.2 1.2L9.5 7L1.2 12.8z" fill="#fff" stroke="#444" stroke-width="1.3" stroke-linejoin="round"/></svg>
<svg style="left:113.5px;top:559.5px" width="17" height="11" viewBox="0 0 17 11"><path d="M0.8 5.5C3 1.8 6 0.8 8.5 0.8S14 1.8 16.2 5.5C14 9.2 11 10.2 8.5 10.2S3 9.2 0.8 5.5z" fill="none" stroke="#a3a4a2" stroke-width="1"/><circle cx="8.5" cy="5.5" r="2.5" fill="none" stroke="#a3a4a2" stroke-width="1"/><path d="M3.5 0.5L13 10.5" stroke="#a3a4a2" stroke-width="1"/></svg>
<svg style="left:138.5px;top:556.5px" width="17" height="17" viewBox="0 0 17 17"><path d="M1 4.5L4.5 1H15.5V12.5L12 16H1z" fill="#dfe0e2" stroke="#444" stroke-width="1.1" stroke-linejoin="round"/><path d="M1 4.5H12V16M12 4.5L15.5 1" fill="none" stroke="#444" stroke-width="0.9"/><path d="M1.5 4.5L4.5 1.5H15L12 4.5z" fill="#fff"/><path d="M12.5 4.5L15 2V12L12.5 15z" fill="#f5f5f5"/></svg>
<svg style="left:164.5px;top:556.5px" width="17" height="17" viewBox="0 0 17 17"><g fill="none" stroke="#333" stroke-width="2.2" stroke-linecap="round"><path d="M7.5 6.5L10.5 3.5a2.4 2.4 0 0 1 3.4 3.4L11 9.8"/><path d="M9.5 10.5L6.5 13.5a2.4 2.4 0 0 1 -3.4 -3.4L6 7.2"/><path d="M6.5 10.5L10.5 6.5"/></g></svg>
<div class="t" style="left:195px;top:560px;font-size:11px;color:#3c3c3c">Flipper_Ass...</div>
<svg style="left:278px;top:557px" width="16" height="16" viewBox="0 0 16 16"><path d="M1 15l1.5-4.5 9-9 3 3-9 9z" fill="#f7b52b"/><path d="M11.5 1.5l3 3 1-1a1.5 1.5 0 0 0 -3 -3z" fill="#e23c3c"/><path d="M1 15l1.5-4.5 3 3z" fill="#666"/></svg>
<div class="a" style="left:112px;top:579px;width:191px;height:20px;background:#eff1ee"></div>
<svg style="left:92.5px;top:582.0px" width="11" height="14" viewBox="0 0 11 14"><path d="M1.2 1.2L9.5 7L1.2 12.8z" fill="#fff" stroke="#444" stroke-width="1.3" stroke-linejoin="round"/></svg>
<svg style="left:113.5px;top:583.5px" width="17" height="11" viewBox="0 0 17 11"><path d="M0.8 5.5C3 1.8 6 0.8 8.5 0.8S14 1.8 16.2 5.5C14 9.2 11 10.2 8.5 10.2S3 9.2 0.8 5.5z" fill="none" stroke="#a3a4a2" stroke-width="1"/><circle cx="8.5" cy="5.5" r="2.5" fill="none" stroke="#a3a4a2" stroke-width="1"/><path d="M3.5 0.5L13 10.5" stroke="#a3a4a2" stroke-width="1"/></svg>
<svg style="left:138.5px;top:580.5px" width="17" height="17" viewBox="0 0 17 17"><path d="M1 4.5L4.5 1H15.5V12.5L12 16H1z" fill="#dfe0e2" stroke="#444" stroke-width="1.1" stroke-linejoin="round"/><path d="M1 4.5H12V16M12 4.5L15.5 1" fill="none" stroke="#444" stroke-width="0.9"/><path d="M1.5 4.5L4.5 1.5H15L12 4.5z" fill="#fff"/><path d="M12.5 4.5L15 2V12L12.5 15z" fill="#f5f5f5"/></svg>
<div class="t" style="left:170px;top:584px;font-size:11px;color:#3c3c3c">Slingshot_Assembly_-_...</div>
<div class="a" style="left:112px;top:603px;width:192px;height:20px;background:#eff1ee"></div>
<svg style="left:92.5px;top:606.0px" width="11" height="14" viewBox="0 0 11 14"><path d="M1.2 1.2L9.5 7L1.2 12.8z" fill="#fff" stroke="#444" stroke-width="1.3" stroke-linejoin="round"/></svg>
<svg style="left:113.5px;top:607.5px" width="17" height="11" viewBox="0 0 17 11"><path d="M0.8 5.5C3 1.8 6 0.8 8.5 0.8S14 1.8 16.2 5.5C14 9.2 11 10.2 8.5 10.2S3 9.2 0.8 5.5z" fill="none" stroke="#a3a4a2" stroke-width="1"/><circle cx="8.5" cy="5.5" r="2.5" fill="none" stroke="#a3a4a2" stroke-width="1"/><path d="M3.5 0.5L13 10.5" stroke="#a3a4a2" stroke-width="1"/></svg>
<svg style="left:138.5px;top:604.5px" width="17" height="17" viewBox="0 0 17 17"><path d="M1 4.5L4.5 1H15.5V12.5L12 16H1z" fill="#dfe0e2" stroke="#444" stroke-width="1.1" stroke-linejoin="round"/><path d="M1 4.5H12V16M12 4.5L15.5 1" fill="none" stroke="#444" stroke-width="0.9"/><path d="M1.5 4.5L4.5 1.5H15L12 4.5z" fill="#fff"/><path d="M12.5 4.5L15 2V12L12.5 15z" fill="#f5f5f5"/></svg>
<svg style="left:164.5px;top:604.5px" width="17" height="17" viewBox="0 0 17 17"><g fill="none" stroke="#333" stroke-width="2.2" stroke-linecap="round"><path d="M7.5 6.5L10.5 3.5a2.4 2.4 0 0 1 3.4 3.4L11 9.8"/><path d="M9.5 10.5L6.5 13.5a2.4 2.4 0 0 1 -3.4 -3.4L6 7.2"/><path d="M6.5 10.5L10.5 6.5"/></g></svg>
<div class="t" style="left:195px;top:608px;font-size:11px;color:#3c3c3c">Pop_Bumper_Ass...</div>
<div class="a" style="left:112px;top:627px;width:192px;height:20px;background:#eff1ee"></div>
<svg style="left:92.5px;top:630.0px" width="11" height="14" viewBox="0 0 11 14"><path d="M1.2 1.2L9.5 7L1.2 12.8z" fill="#fff" stroke="#444" stroke-width="1.3" stroke-linejoin="round"/></svg>
<svg style="left:113.5px;top:631.5px" width="17" height="11" viewBox="0 0 17 11"><path d="M0.8 5.5C3 1.8 6 0.8 8.5 0.8S14 1.8 16.2 5.5C14 9.2 11 10.2 8.5 10.2S3 9.2 0.8 5.5z" fill="none" stroke="#a3a4a2" stroke-width="1"/><circle cx="8.5" cy="5.5" r="2.5" fill="none" stroke="#a3a4a2" stroke-width="1"/><path d="M3.5 0.5L13 10.5" stroke="#a3a4a2" stroke-width="1"/></svg>
<svg style="left:138.5px;top:628.5px" width="17" height="17" viewBox="0 0 17 17"><path d="M1 4.5L4.5 1H15.5V12.5L12 16H1z" fill="#dfe0e2" stroke="#444" stroke-width="1.1" stroke-linejoin="round"/><path d="M1 4.5H12V16M12 4.5L15.5 1" fill="none" stroke="#444" stroke-width="0.9"/><path d="M1.5 4.5L4.5 1.5H15L12 4.5z" fill="#fff"/><path d="M12.5 4.5L15 2V12L12.5 15z" fill="#f5f5f5"/></svg>
<svg style="left:164.5px;top:628.5px" width="17" height="17" viewBox="0 0 17 17"><g fill="none" stroke="#333" stroke-width="2.2" stroke-linecap="round"><path d="M7.5 6.5L10.5 3.5a2.4 2.4 0 0 1 3.4 3.4L11 9.8"/><path d="M9.5 10.5L6.5 13.5a2.4 2.4 0 0 1 -3.4 -3.4L6 7.2"/><path d="M6.5 10.5L10.5 6.5"/></g></svg>
<div class="t" style="left:195px;top:632px;font-size:11px;color:#3c3c3c">Flipper_Assy_-_W...</div>
<div class="a" style="left:112px;top:651px;width:192px;height:20px;background:#eff1ee"></div>
<svg style="left:92.5px;top:654.0px" width="11" height="14" viewBox="0 0 11 14"><path d="M1.2 1.2L9.5 7L1.2 12.8z" fill="#fff" stroke="#444" stroke-width="1.3" stroke-linejoin="round"/></svg>
<svg style="left:113.5px;top:655.5px" width="17" height="11" viewBox="0 0 17 11"><path d="M0.5 5.5C3 1.5 6 0.5 8.5 0.5S14 1.5 16.5 5.5C14 9.5 11 10.5 8.5 10.5S3 9.5 0.5 5.5z" fill="#8f908e"/><circle cx="8.5" cy="5.5" r="2.8" fill="#eff1ee"/><circle cx="8.5" cy="5.5" r="1.6" fill="#8f908e"/></svg>
<svg style="left:138.5px;top:652.5px" width="17" height="17" viewBox="0 0 17 17"><path d="M1 4.5L4.5 1H15.5V12.5L12 16H1z" fill="#dfe0e2" stroke="#444" stroke-width="1.1" stroke-linejoin="round"/><path d="M1 4.5H12V16M12 4.5L15.5 1" fill="none" stroke="#444" stroke-width="0.9"/><path d="M1.5 4.5L4.5 1.5H15L12 4.5z" fill="#fff"/><path d="M12.5 4.5L15 2V12L12.5 15z" fill="#f5f5f5"/></svg>
<svg style="left:164.5px;top:652.5px" width="17" height="17" viewBox="0 0 17 17"><g fill="none" stroke="#333" stroke-width="2.2" stroke-linecap="round"><path d="M7.5 6.5L10.5 3.5a2.4 2.4 0 0 1 3.4 3.4L11 9.8"/><path d="M9.5 10.5L6.5 13.5a2.4 2.4 0 0 1 -3.4 -3.4L6 7.2"/><path d="M6.5 10.5L10.5 6.5"/></g></svg>
<div class="t" style="left:195px;top:656px;font-size:11px;color:#3c3c3c">Rollover_Switch_&...</div>
<div class="a" style="left:112px;top:675px;width:192px;height:20px;background:#eff1ee"></div>
<svg style="left:92.5px;top:678.0px" width="11" height="14" viewBox="0 0 11 14"><path d="M1.2 1.2L9.5 7L1.2 12.8z" fill="#fff" stroke="#444" stroke-width="1.3" stroke-linejoin="round"/></svg>
<svg style="left:113.5px;top:679.5px" width="17" height="11" viewBox="0 0 17 11"><path d="M0.8 5.5C3 1.8 6 0.8 8.5 0.8S14 1.8 16.2 5.5C14 9.2 11 10.2 8.5 10.2S3 9.2 0.8 5.5z" fill="none" stroke="#a3a4a2" stroke-width="1"/><circle cx="8.5" cy="5.5" r="2.5" fill="none" stroke="#a3a4a2" stroke-width="1"/><path d="M3.5 0.5L13 10.5" stroke="#a3a4a2" stroke-width="1"/></svg>
<svg style="left:138.5px;top:676.5px" width="17" height="17" viewBox="0 0 17 17"><path d="M1 4.5L4.5 1H15.5V12.5L12 16H1z" fill="#dfe0e2" stroke="#444" stroke-width="1.1" stroke-linejoin="round"/><path d="M1 4.5H12V16M12 4.5L15.5 1" fill="none" stroke="#444" stroke-width="0.9"/><path d="M1.5 4.5L4.5 1.5H15L12 4.5z" fill="#fff"/><path d="M12.5 4.5L15 2V12L12.5 15z" fill="#f5f5f5"/></svg>
<svg style="left:164.5px;top:676.5px" width="17" height="17" viewBox="0 0 17 17"><g fill="none" stroke="#333" stroke-width="2.2" stroke-linecap="round"><path d="M7.5 6.5L10.5 3.5a2.4 2.4 0 0 1 3.4 3.4L11 9.8"/><path d="M9.5 10.5L6.5 13.5a2.4 2.4 0 0 1 -3.4 -3.4L6 7.2"/><path d="M6.5 10.5L10.5 6.5"/></g></svg>
<div class="t" style="left:195px;top:680px;font-size:11px;color:#3c3c3c">Ball_Launcher_50...</div>
<div class="a" style="left:112px;top:699px;width:159px;height:20px;background:#eff1ee"></div>
<svg style="left:92.5px;top:702.0px" width="11" height="14" viewBox="0 0 11 14"><path d="M1.2 1.2L9.5 7L1.2 12.8z" fill="#fff" stroke="#444" stroke-width="1.3" stroke-linejoin="round"/></svg>
<svg style="left:113.5px;top:703.5px" width="17" height="11" viewBox="0 0 17 11"><path d="M0.8 5.5C3 1.8 6 0.8 8.5 0.8S14 1.8 16.2 5.5C14 9.2 11 10.2 8.5 10.2S3 9.2 0.8 5.5z" fill="none" stroke="#a3a4a2" stroke-width="1"/><circle cx="8.5" cy="5.5" r="2.5" fill="none" stroke="#a3a4a2" stroke-width="1"/><path d="M3.5 0.5L13 10.5" stroke="#a3a4a2" stroke-width="1"/></svg>
<svg style="left:138.5px;top:700.5px" width="17" height="17" viewBox="0 0 17 17"><path d="M1 4.5L4.5 1H15.5V12.5L12 16H1z" fill="#dfe0e2" stroke="#444" stroke-width="1.1" stroke-linejoin="round"/><path d="M1 4.5H12V16M12 4.5L15.5 1" fill="none" stroke="#444" stroke-width="0.9"/><path d="M1.5 4.5L4.5 1.5H15L12 4.5z" fill="#fff"/><path d="M12.5 4.5L15 2V12L12.5 15z" fill="#f5f5f5"/></svg>
<div class="t" style="left:170px;top:704px;font-size:11px;color:#3c3c3c">Structure_layer 1:1</div>
<div class="a" style="left:112px;top:723px;width:163px;height:20px;background:#eff1ee"></div>
<svg style="left:92.5px;top:726.0px" width="11" height="14" viewBox="0 0 11 14"><path d="M1.2 1.2L9.5 7L1.2 12.8z" fill="#fff" stroke="#444" stroke-width="1.3" stroke-linejoin="round"/></svg>
<svg style="left:113.5px;top:727.5px" width="17" height="11" viewBox="0 0 17 11"><path d="M0.8 5.5C3 1.8 6 0.8 8.5 0.8S14 1.8 16.2 5.5C14 9.2 11 10.2 8.5 10.2S3 9.2 0.8 5.5z" fill="none" stroke="#a3a4a2" stroke-width="1"/><circle cx="8.5" cy="5.5" r="2.5" fill="none" stroke="#a3a4a2" stroke-width="1"/><path d="M3.5 0.5L13 10.5" stroke="#a3a4a2" stroke-width="1"/></svg>
<svg style="left:138.5px;top:724.5px" width="17" height="17" viewBox="0 0 17 17"><path d="M1 4.5L4.5 1H15.5V12.5L12 16H1z" fill="#dfe0e2" stroke="#444" stroke-width="1.1" stroke-linejoin="round"/><path d="M1 4.5H12V16M12 4.5L15.5 1" fill="none" stroke="#444" stroke-width="0.9"/><path d="M1.5 4.5L4.5 1.5H15L12 4.5z" fill="#fff"/><path d="M12.5 4.5L15 2V12L12.5 15z" fill="#f5f5f5"/></svg>
<div class="t" style="left:170px;top:728px;font-size:11px;color:#3c3c3c">Structure_layer 1:2</div>
<div class="a" style="left:112px;top:747px;width:147px;height:20px;background:#eff1ee"></div>
<svg style="left:92.5px;top:750.0px" width="11" height="14" viewBox="0 0 11 14"><path d="M1.2 1.2L9.5 7L1.2 12.8z" fill="#fff" stroke="#444" stroke-width="1.3" stroke-linejoin="round"/></svg>
<svg style="left:113.5px;top:751.5px" width="17" height="11" viewBox="0 0 17 11"><path d="M0.8 5.5C3 1.8 6 0.8 8.5 0.8S14 1.8 16.2 5.5C14 9.2 11 10.2 8.5 10.2S3 9.2 0.8 5.5z" fill="none" stroke="#a3a4a2" stroke-width="1"/><circle cx="8.5" cy="5.5" r="2.5" fill="none" stroke="#a3a4a2" stroke-width="1"/><path d="M3.5 0.5L13 10.5" stroke="#a3a4a2" stroke-width="1"/></svg>
<svg style="left:138.5px;top:748.5px" width="17" height="17" viewBox="0 0 17 17"><path d="M1 4.5L4.5 1H15.5V12.5L12 16H1z" fill="#dfe0e2" stroke="#444" stroke-width="1.1" stroke-linejoin="round"/><path d="M1 4.5H12V16M12 4.5L15.5 1" fill="none" stroke="#444" stroke-width="0.9"/><path d="M1.5 4.5L4.5 1.5H15L12 4.5z" fill="#fff"/><path d="M12.5 4.5L15 2V12L12.5 15z" fill="#f5f5f5"/></svg>
<div class="t" style="left:170px;top:752px;font-size:11px;color:#3c3c3c">aluminum layer:1</div>
<div class="a" style="left:112px;top:771px;width:168px;height:20px;background:#eff1ee"></div>
<svg style="left:92.5px;top:774.0px" width="11" height="14" viewBox="0 0 11 14"><path d="M1.2 1.2L9.5 7L1.2 12.8z" fill="#fff" stroke="#444" stroke-width="1.3" stroke-linejoin="round"/></svg>
<svg style="left:113.5px;top:775.5px" width="17" height="11" viewBox="0 0 17 11"><path d="M0.8 5.5C3 1.8 6 0.8 8.5 0.8S14 1.8 16.2 5.5C14 9.2 11 10.2 8.5 10.2S3 9.2 0.8 5.5z" fill="none" stroke="#a3a4a2" stroke-width="1"/><circle cx="8.5" cy="5.5" r="2.5" fill="none" stroke="#a3a4a2" stroke-width="1"/><path d="M3.5 0.5L13 10.5" stroke="#a3a4a2" stroke-width="1"/></svg>
<svg style="left:138.5px;top:772.5px" width="17" height="17" viewBox="0 0 17 17"><path d="M1 4.5L4.5 1H15.5V12.5L12 16H1z" fill="#dfe0e2" stroke="#444" stroke-width="1.1" stroke-linejoin="round"/><path d="M1 4.5H12V16M12 4.5L15.5 1" fill="none" stroke="#444" stroke-width="0.9"/><path d="M1.5 4.5L4.5 1.5H15L12 4.5z" fill="#fff"/><path d="M12.5 4.5L15 2V12L12.5 15z" fill="#f5f5f5"/></svg>
<div class="t" style="left:170px;top:776px;font-size:11px;color:#3c3c3c">polycarb layer:1</div>
<svg style="left:259px;top:775px" width="12" height="12"><circle cx="6" cy="6" r="5.5" fill="none" stroke="#333" stroke-width="1"/></svg>
<div class="a" style="left:112px;top:795px;width:131px;height:20px;background:#eff1ee"></div>
<svg style="left:92.5px;top:798.0px" width="11" height="14" viewBox="0 0 11 14"><path d="M1.2 1.2L9.5 7L1.2 12.8z" fill="#fff" stroke="#444" stroke-width="1.3" stroke-linejoin="round"/></svg>
<svg style="left:113.5px;top:799.5px" width="17" height="11" viewBox="0 0 17 11"><path d="M0.8 5.5C3 1.8 6 0.8 8.5 0.8S14 1.8 16.2 5.5C14 9.2 11 10.2 8.5 10.2S3 9.2 0.8 5.5z" fill="none" stroke="#a3a4a2" stroke-width="1"/><circle cx="8.5" cy="5.5" r="2.5" fill="none" stroke="#a3a4a2" stroke-width="1"/><path d="M3.5 0.5L13 10.5" stroke="#a3a4a2" stroke-width="1"/></svg>
<svg style="left:138.5px;top:796.5px" width="17" height="17" viewBox="0 0 17 17"><path d="M1 3l2-2h4l1 1v6h6l1 1v6l-1 1H2l-1-1z" fill="#f2f3f1" stroke="#444" stroke-width="1"/><path d="M1.5 9h6.5v7M3 1v8" stroke="#444" stroke-width="0.8" fill="none"/><rect x="9" y="10" width="5" height="5" fill="#d6d7d8"/><rect x="2" y="10" width="5" height="5" fill="#dfe0e1"/></svg>
<div class="t" style="left:170px;top:800px;font-size:11px;color:#3c3c3c">Assemblies:1</div>
<div class="a" style="left:112px;top:819px;width:178px;height:20px;background:#eff1ee"></div>
<svg style="left:92.5px;top:822.0px" width="11" height="14" viewBox="0 0 11 14"><path d="M1.2 1.2L9.5 7L1.2 12.8z" fill="#fff" stroke="#444" stroke-width="1.3" stroke-linejoin="round"/></svg>
<svg style="left:113.5px;top:823.5px" width="17" height="11" viewBox="0 0 17 11"><path d="M0.8 5.5C3 1.8 6 0.8 8.5 0.8S14 1.8 16.2 5.5C14 9.2 11 10.2 8.5 10.2S3 9.2 0.8 5.5z" fill="none" stroke="#a3a4a2" stroke-width="1"/><circle cx="8.5" cy="5.5" r="2.5" fill="none" stroke="#a3a4a2" stroke-width="1"/><path d="M3.5 0.5L13 10.5" stroke="#a3a4a2" stroke-width="1"/></svg>
<svg style="left:138.5px;top:820.5px" width="17" height="17" viewBox="0 0 17 17"><path d="M1 3l2-2h4l1 1v6h6l1 1v6l-1 1H2l-1-1z" fill="#f2f3f1" stroke="#444" stroke-width="1"/><path d="M1.5 9h6.5v7M3 1v8" stroke="#444" stroke-width="0.8" fill="none"/><rect x="9" y="10" width="5" height="5" fill="#d6d7d8"/><rect x="2" y="10" width="5" height="5" fill="#dfe0e1"/></svg>
<div class="t" style="left:170px;top:824px;font-size:11px;color:#3c3c3c">fasteners / standoffs:1</div>
<div class="a" style="left:112px;top:843px;width:115px;height:20px;background:#eff1ee"></div>
<svg style="left:92.5px;top:846.0px" width="11" height="14" viewBox="0 0 11 14"><path d="M1.2 1.2L9.5 7L1.2 12.8z" fill="#fff" stroke="#444" stroke-width="1.3" stroke-linejoin="round"/></svg>
<svg style="left:113.5px;top:847.5px" width="17" height="11" viewBox="0 0 17 11"><path d="M0.8 5.5C3 1.8 6 0.8 8.5 0.8S14 1.8 16.2 5.5C14 9.2 11 10.2 8.5 10.2S3 9.2 0.8 5.5z" fill="none" stroke="#a3a4a2" stroke-width="1"/><circle cx="8.5" cy="5.5" r="2.5" fill="none" stroke="#a3a4a2" stroke-width="1"/><path d="M3.5 0.5L13 10.5" stroke="#a3a4a2" stroke-width="1"/></svg>
<svg style="left:138.5px;top:844.5px" width="17" height="17" viewBox="0 0 17 17"><path d="M1 4.5L4.5 1H15.5V12.5L12 16H1z" fill="#dfe0e2" stroke="#444" stroke-width="1.1" stroke-linejoin="round"/><path d="M1 4.5H12V16M12 4.5L15.5 1" fill="none" stroke="#444" stroke-width="0.9"/><path d="M1.5 4.5L4.5 1.5H15L12 4.5z" fill="#fff"/><path d="M12.5 4.5L15 2V12L12.5 15z" fill="#f5f5f5"/></svg>
<div class="t" style="left:170px;top:848px;font-size:11px;color:#3c3c3c">toppers:1</div>
<div class="a" style="left:94px;top:867px;width:135px;height:20px;background:#eff1ee"></div>
<svg style="left:74.5px;top:870.0px" width="11" height="14" viewBox="0 0 11 14"><path d="M1.2 1.2L9.5 7L1.2 12.8z" fill="#fff" stroke="#444" stroke-width="1.3" stroke-linejoin="round"/></svg>
<svg style="left:95.5px;top:871.5px" width="17" height="11" viewBox="0 0 17 11"><path d="M0.8 5.5C3 1.8 6 0.8 8.5 0.8S14 1.8 16.2 5.5C14 9.2 11 10.2 8.5 10.2S3 9.2 0.8 5.5z" fill="none" stroke="#a3a4a2" stroke-width="1"/><circle cx="8.5" cy="5.5" r="2.5" fill="none" stroke="#a3a4a2" stroke-width="1"/><path d="M3.5 0.5L13 10.5" stroke="#a3a4a2" stroke-width="1"/></svg>
<svg style="left:120.5px;top:868.5px" width="17" height="17" viewBox="0 0 17 17"><path d="M1 3l2-2h4l1 1v6h6l1 1v6l-1 1H2l-1-1z" fill="#f2f3f1" stroke="#444" stroke-width="1"/><path d="M1.5 9h6.5v7M3 1v8" stroke="#444" stroke-width="0.8" fill="none"/><rect x="9" y="10" width="5" height="5" fill="#d6d7d8"/><rect x="2" y="10" width="5" height="5" fill="#dfe0e1"/></svg>
<div class="t" style="left:152px;top:872px;font-size:11px;color:#3c3c3c">game station:1</div>
<div class="a" style="left:94px;top:891px;width:115px;height:20px;background:#eff1ee"></div>
<svg style="left:74.5px;top:894.0px" width="11" height="14" viewBox="0 0 11 14"><path d="M1.2 1.2L9.5 7L1.2 12.8z" fill="#fff" stroke="#444" stroke-width="1.3" stroke-linejoin="round"/></svg>
<svg style="left:95.5px;top:895.5px" width="17" height="11" viewBox="0 0 17 11"><path d="M0.8 5.5C3 1.8 6 0.8 8.5 0.8S14 1.8 16.2 5.5C14 9.2 11 10.2 8.5 10.2S3 9.2 0.8 5.5z" fill="none" stroke="#a3a4a2" stroke-width="1"/><circle cx="8.5" cy="5.5" r="2.5" fill="none" stroke="#a3a4a2" stroke-width="1"/><path d="M3.5 0.5L13 10.5" stroke="#a3a4a2" stroke-width="1"/></svg>
<svg style="left:120.5px;top:892.5px" width="17" height="17" viewBox="0 0 17 17"><path d="M1 3l2-2h4l1 1v6h6l1 1v6l-1 1H2l-1-1z" fill="#f2f3f1" stroke="#444" stroke-width="1"/><path d="M1.5 9h6.5v7M3 1v8" stroke="#444" stroke-width="0.8" fill="none"/><rect x="9" y="10" width="5" height="5" fill="#d6d7d8"/><rect x="2" y="10" width="5" height="5" fill="#dfe0e1"/></svg>
<div class="t" style="left:152px;top:896px;font-size:11px;color:#3c3c3c">furniture:1</div>
<div class="a" style="left:76px;top:915px;width:111px;height:20px;background:#eff1ee"></div>
<svg style="left:56.5px;top:918.0px" width="11" height="14" viewBox="0 0 11 14"><path d="M1.2 1.2L9.5 7L1.2 12.8z" fill="#fff" stroke="#444" stroke-width="1.3" stroke-linejoin="round"/></svg>
<svg style="left:77.5px;top:919.5px" width="17" height="11" viewBox="0 0 17 11"><path d="M0.8 5.5C3 1.8 6 0.8 8.5 0.8S14 1.8 16.2 5.5C14 9.2 11 10.2 8.5 10.2S3 9.2 0.8 5.5z" fill="none" stroke="#a3a4a2" stroke-width="1"/><circle cx="8.5" cy="5.5" r="2.5" fill="none" stroke="#a3a4a2" stroke-width="1"/><path d="M3.5 0.5L13 10.5" stroke="#a3a4a2" stroke-width="1"/></svg>
<svg style="left:102.5px;top:916.5px" width="17" height="17" viewBox="0 0 17 17"><path d="M1 3l2-2h4l1 1v6h6l1 1v6l-1 1H2l-1-1z" fill="#f2f3f1" stroke="#444" stroke-width="1"/><path d="M1.5 9h6.5v7M3 1v8" stroke="#444" stroke-width="0.8" fill="none"/><rect x="9" y="10" width="5" height="5" fill="#d6d7d8"/><rect x="2" y="10" width="5" height="5" fill="#dfe0e1"/></svg>
<div class="t" style="left:134px;top:920px;font-size:11px;color:#3c3c3c">station:2</div>
<div class="a" style="left:4px;top:961px;width:300px;height:25px;border:1px solid #c8cac7;background:#eff1ee"></div>
<div class="t" style="left:29px;top:968px;font-size:11px;color:#6b635b;letter-spacing:-0.8px">COMMENTS</div>
<svg style="left:282px;top:968px" width="11" height="11"><circle cx="5" cy="5" r="4.8" fill="#222"/><path d="M2.2 5h5.6M5 2.2v5.6" stroke="#fff" stroke-width="1.5"/></svg>
<div class="a" style="left:299px;top:968px;width:1px;height:10px;background:#666"></div><div class="a" style="left:301px;top:968px;width:1px;height:10px;background:#aaa"></div>
<div class="a" style="left:0;top:990px;width:1920px;height:2px;background:#c8cac7"></div>
<div class="a" style="left:0;top:992px;width:1920px;height:48px;background:#eff1ee"></div>
<div class="a" style="left:4px;top:992px;width:15px;height:5px;background:#d3d4d2;border-radius:0 0 4px 4px"></div>
<svg style="left:0;top:0" width="1" height="1">
<rect x="10.5" y="1013" width="2" height="14" fill="#333"/><path d="M23 1013v14l-10-7z" fill="#333"/>
<path d="M45 1013v14l-10-7z" fill="#333"/><rect x="46" y="1016" width="2" height="8" fill="#333"/>
<path d="M61 1013v14l11.5-7z" fill="#333"/>
<rect x="84.5" y="1016" width="2" height="8" fill="#333"/><path d="M87.5 1013v14l10-7z" fill="#333"/>
<path d="M111 1013v14l10-7z" fill="#333"/><rect x="121" y="1013" width="2" height="14" fill="#333"/>
</svg>
<svg style="left:0;top:0" width="1" height="1"><rect x="550" y="1003" width="216" height="24" rx="2" fill="#e6e51c"/><rect x="790" y="1003" width="48" height="24" rx="2" fill="#e6e51c"/><rect x="886" y="1003" width="24" height="24" rx="2" fill="#e6e51c"/><rect x="982" y="1003" width="24" height="24" rx="2" fill="#e6e51c"/><rect x="1366" y="1003" width="24" height="24" rx="2" fill="#e6e51c"/><rect x="1414" y="1003" width="24" height="24" rx="2" fill="#e6e51c"/><path d="M146.5 1011l3.5-3.5h12v12l-3.5 3.5h-12z" fill="#d7d8d6" stroke="#666" stroke-width="0.9"/><path d="M158.5 1011l3.5-3.5v12l-3.5 3.5z" fill="#b8b9b7"/><path d="M146.5 1011h12v12" fill="none" stroke="#999" stroke-width="0.6"/><path d="M170.5 1011l3.5-3.5h12v12l-3.5 3.5h-12z" fill="#d7d8d6" stroke="#666" stroke-width="0.9"/><path d="M182.5 1011l3.5-3.5v12l-3.5 3.5z" fill="#b8b9b7"/><path d="M170.5 1011h12v12" fill="none" stroke="#999" stroke-width="0.6"/><path d="M194.5 1011l3.5-3.5h12v12l-3.5 3.5h-12z" fill="#d7d8d6" stroke="#666" stroke-width="0.9"/><path d="M206.5 1011l3.5-3.5v12l-3.5 3.5z" fill="#b8b9b7"/><path d="M194.5 1011h12v12" fill="none" stroke="#999" stroke-width="0.6"/><path d="M218.5 1011l3.5-3.5h12v12l-3.5 3.5h-12z" fill="#d7d8d6" stroke="#666" stroke-width="0.9"/><path d="M230.5 1011l3.5-3.5v12l-3.5 3.5z" fill="#b8b9b7"/><path d="M218.5 1011h12v12" fill="none" stroke="#999" stroke-width="0.6"/><path d="M242.5 1011l3.5-3.5h12v12l-3.5 3.5h-12z" fill="#d7d8d6" stroke="#666" stroke-width="0.9"/><path d="M254.5 1011l3.5-3.5v12l-3.5 3.5z" fill="#b8b9b7"/><path d="M242.5 1011h12v12" fill="none" stroke="#999" stroke-width="0.6"/><path d="M266.5 1011l3.5-3.5h12v12l-3.5 3.5h-12z" fill="#d7d8d6" stroke="#666" stroke-width="0.9"/><path d="M278.5 1011l3.5-3.5v12l-3.5 3.5z" fill="#b8b9b7"/><path d="M266.5 1011h12v12" fill="none" stroke="#999" stroke-width="0.6"/><path d="M290.5 1011l3.5-3.5h12v12l-3.5 3.5h-12z" fill="#d7d8d6" stroke="#666" stroke-width="0.9"/><path d="M302.5 1011l3.5-3.5v12l-3.5 3.5z" fill="#b8b9b7"/><path d="M290.5 1011h12v12" fill="none" stroke="#999" stroke-width="0.6"/><path d="M314.5 1011l3.5-3.5h12v12l-3.5 3.5h-12z" fill="#d7d8d6" stroke="#666" stroke-width="0.9"/><path d="M326.5 1011l3.5-3.5v12l-3.5 3.5z" fill="#b8b9b7"/><path d="M314.5 1011h12v12" fill="none" stroke="#999" stroke-width="0.6"/><path d="M340 1008h12M339 1009v12M340 1022h6M353 1009v6" stroke="#444" stroke-width="0.8" stroke-dasharray="1.5 1" fill="none"/><rect x="338" y="1007" width="2" height="2" fill="#1a73e8"/><rect x="352" y="1007" width="2" height="2" fill="#1a73e8"/><rect x="338" y="1021" width="2" height="2" fill="#1a73e8"/><path d="M346 1022.5l1-3 4.5-4.5 2 2-4.5 4.5z" fill="#f7b52b"/><circle cx="353.5" cy="1015.5" r="1.2" fill="#e23c3c"/><path d="M364 1008h12M363 1009v12M364 1022h6M377 1009v6" stroke="#444" stroke-width="0.8" stroke-dasharray="1.5 1" fill="none"/><rect x="362" y="1007" width="2" height="2" fill="#1a73e8"/><rect x="376" y="1007" width="2" height="2" fill="#1a73e8"/><rect x="362" y="1021" width="2" height="2" fill="#1a73e8"/><path d="M370 1022.5l1-3 4.5-4.5 2 2-4.5 4.5z" fill="#f7b52b"/><circle cx="377.5" cy="1015.5" r="1.2" fill="#e23c3c"/><path d="M386 1011l3-3h9v11l-3 3h-9z" fill="#62aee4"/><path d="M395 1011l3-3v11l-3 3z" fill="#3b8fcb"/><path d="M386 1022h9l3-3v1.5l-3 3h-9z" fill="#bdbebc"/><path d="M401 1019v-11M399.5 1010l1.5-2 1.5 2" stroke="#222" stroke-width="0.9" fill="none"/><path d="M410 1011l3-3h9v11l-3 3h-9z" fill="#62aee4"/><path d="M419 1011l3-3v11l-3 3z" fill="#3b8fcb"/><path d="M410 1022h9l3-3v1.5l-3 3h-9z" fill="#bdbebc"/><path d="M425 1019v-11M423.5 1010l1.5-2 1.5 2" stroke="#222" stroke-width="0.9" fill="none"/><rect x="435" y="1007" width="6" height="6" rx="1.5" fill="#d7d8d6" stroke="#777" stroke-width="0.8"/><path d="M436 1017v3h3M438 1019l1.5 1-1.5 1" stroke="#222" stroke-width="0.8" fill="none"/><path d="M442 1016l2-2h6v7l-2 2h-6z" fill="#4aa0dc"/><path d="M460 1008h12M459 1009v12M460 1022h6M473 1009v6" stroke="#444" stroke-width="0.8" stroke-dasharray="1.5 1" fill="none"/><rect x="458" y="1007" width="2" height="2" fill="#1a73e8"/><rect x="472" y="1007" width="2" height="2" fill="#1a73e8"/><rect x="458" y="1021" width="2" height="2" fill="#1a73e8"/><path d="M466 1022.5l1-3 4.5-4.5 2 2-4.5 4.5z" fill="#f7b52b"/><circle cx="473.5" cy="1015.5" r="1.2" fill="#e23c3c"/><path d="M482 1011l3-3h9v11l-3 3h-9z" fill="#62aee4"/><path d="M491 1011l3-3v11l-3 3z" fill="#3b8fcb"/><path d="M482 1022h9l3-3v1.5l-3 3h-9z" fill="#bdbebc"/><path d="M497 1019v-11M495.5 1010l1.5-2 1.5 2" stroke="#222" stroke-width="0.9" fill="none"/><path d="M506 1011l3-3h9v11l-3 3h-9z" fill="#62aee4"/><path d="M515 1011l3-3v11l-3 3z" fill="#3b8fcb"/><path d="M506 1022h9l3-3v1.5l-3 3h-9z" fill="#bdbebc"/><path d="M521 1019v-11M519.5 1010l1.5-2 1.5 2" stroke="#222" stroke-width="0.9" fill="none"/><path d="M530.5 1011l3.5-3.5h12v12l-3.5 3.5h-12z" fill="#d7d8d6" stroke="#666" stroke-width="0.9"/><path d="M542.5 1011l3.5-3.5v12l-3.5 3.5z" fill="#b8b9b7"/><path d="M530.5 1011h12v12" fill="none" stroke="#999" stroke-width="0.6"/><rect x="554.5" y="1007.5" width="5" height="15" fill="#f4f4f4" stroke="#444" stroke-width="0.9"/><rect x="560" y="1007" width="10" height="7" fill="#5aa6dc"/><rect x="578.5" y="1007.5" width="5" height="15" fill="#f4f4f4" stroke="#444" stroke-width="0.9"/><rect x="584" y="1007" width="10" height="7" fill="#5aa6dc"/><rect x="602.5" y="1007.5" width="5" height="15" fill="#f4f4f4" stroke="#444" stroke-width="0.9"/><rect x="608" y="1007" width="10" height="7" fill="#5aa6dc"/><rect x="626.5" y="1007.5" width="5" height="15" fill="#f4f4f4" stroke="#444" stroke-width="0.9"/><rect x="632" y="1007" width="10" height="7" fill="#5aa6dc"/><rect x="650.5" y="1007.5" width="5" height="15" fill="#f4f4f4" stroke="#444" stroke-width="0.9"/><rect x="656" y="1007" width="10" height="7" fill="#5aa6dc"/><rect x="674.5" y="1007.5" width="5" height="15" fill="#f4f4f4" stroke="#444" stroke-width="0.9"/><rect x="680" y="1007" width="10" height="7" fill="#5aa6dc"/><rect x="698.5" y="1007.5" width="5" height="15" fill="#f4f4f4" stroke="#444" stroke-width="0.9"/><rect x="704" y="1007" width="10" height="7" fill="#5aa6dc"/><rect x="722.5" y="1007.5" width="5" height="15" fill="#f4f4f4" stroke="#444" stroke-width="0.9"/><rect x="728" y="1007" width="10" height="7" fill="#5aa6dc"/><rect x="746.5" y="1007.5" width="5" height="15" fill="#f4f4f4" stroke="#444" stroke-width="0.9"/><rect x="752" y="1007" width="10" height="7" fill="#5aa6dc"/><path d="M770.5 1011l3.5-3.5h12v12l-3.5 3.5h-12z" fill="#e3e4e2" stroke="#777" stroke-width="0.9"/><path d="M775 1017l4-4 a2 2 0 0 1 3 3l-2 2 M780 1014l-4 4a2 2 0 0 1 -3 -3l2-2" stroke="#888" stroke-width="0.9" fill="none"/><rect x="794.5" y="1007.5" width="5" height="15" fill="#f4f4f4" stroke="#444" stroke-width="0.9"/><rect x="800" y="1007" width="10" height="7" fill="#5aa6dc"/><rect x="819" y="1007" width="7" height="6" rx="1.5" fill="#d7d8d6" stroke="#666" stroke-width="0.8"/><path d="M820 1016v4h3M822 1019l1.5 1-1.5 1" stroke="#222" stroke-width="0.9" fill="none"/><path d="M826.5 1016l2-2h5v7l-2 2h-5z" fill="#d7d8d6" stroke="#666" stroke-width="0.8"/><path d="M842.5 1011l3.5-3.5h12v12l-3.5 3.5h-12z" fill="#e3e4e2" stroke="#777" stroke-width="0.9"/><path d="M847 1017l4-4 a2 2 0 0 1 3 3l-2 2 M852 1014l-4 4a2 2 0 0 1 -3 -3l2-2" stroke="#888" stroke-width="0.9" fill="none"/><path d="M866.5 1011l3.5-3.5h12v12l-3.5 3.5h-12z" fill="#e3e4e2" stroke="#777" stroke-width="0.9"/><path d="M871 1017l4-4 a2 2 0 0 1 3 3l-2 2 M876 1014l-4 4a2 2 0 0 1 -3 -3l2-2" stroke="#888" stroke-width="0.9" fill="none"/><rect x="891" y="1007" width="7" height="6" rx="1.5" fill="#d7d8d6" stroke="#666" stroke-width="0.8"/><path d="M892 1016v4h3M894 1019l1.5 1-1.5 1" stroke="#222" stroke-width="0.9" fill="none"/><path d="M898.5 1016l2-2h5v7l-2 2h-5z" fill="#d7d8d6" stroke="#666" stroke-width="0.8"/><path d="M914.5 1011l3.5-3.5h12v12l-3.5 3.5h-12z" fill="#e3e4e2" stroke="#777" stroke-width="0.9"/><path d="M919 1017l4-4 a2 2 0 0 1 3 3l-2 2 M924 1014l-4 4a2 2 0 0 1 -3 -3l2-2" stroke="#888" stroke-width="0.9" fill="none"/><path d="M938.5 1011l3.5-3.5h12v12l-3.5 3.5h-12z" fill="#e3e4e2" stroke="#777" stroke-width="0.9"/><path d="M943 1017l4-4 a2 2 0 0 1 3 3l-2 2 M948 1014l-4 4a2 2 0 0 1 -3 -3l2-2" stroke="#888" stroke-width="0.9" fill="none"/><path d="M962.5 1011l3.5-3.5h12v12l-3.5 3.5h-12z" fill="#e3e4e2" stroke="#777" stroke-width="0.9"/><path d="M967 1017l4-4 a2 2 0 0 1 3 3l-2 2 M972 1014l-4 4a2 2 0 0 1 -3 -3l2-2" stroke="#888" stroke-width="0.9" fill="none"/><path d="M988 1008h12M987 1009v12M988 1022h6M1001 1009v6" stroke="#444" stroke-width="0.9" stroke-dasharray="1.5 1" fill="none"/><rect x="986" y="1007" width="2" height="2" fill="#1a73e8"/><rect x="1000" y="1007" width="2" height="2" fill="#1a73e8"/><rect x="986" y="1021" width="2" height="2" fill="#1a73e8"/><path d="M994 1022.5l1-3 4.5-4.5 2 2-4.5 4.5z" fill="#f7b52b"/><circle cx="1001.5" cy="1015.5" r="1.2" fill="#e23c3c"/><path d="M1010 1011l3-3h9v11l-3 3h-9z" fill="#62aee4"/><path d="M1019 1011l3-3v11l-3 3z" fill="#3b8fcb"/><path d="M1010 1022h9l3-3v1.5l-3 3h-9z" fill="#bdbebc"/><path d="M1025 1019v-11M1023.5 1010l1.5-2 1.5 2" stroke="#222" stroke-width="0.9" fill="none"/><path d="M1034 1011l3-3h9v11l-3 3h-9z" fill="#62aee4"/><path d="M1043 1011l3-3v11l-3 3z" fill="#3b8fcb"/><path d="M1034 1022h9l3-3v1.5l-3 3h-9z" fill="#bdbebc"/><path d="M1049 1019v-11M1047.5 1010l1.5-2 1.5 2" stroke="#222" stroke-width="0.9" fill="none"/><path d="M1058 1011l3-3h9v11l-3 3h-9z" fill="#62aee4"/><path d="M1067 1011l3-3v11l-3 3z" fill="#3b8fcb"/><path d="M1058 1022h9l3-3v1.5l-3 3h-9z" fill="#bdbebc"/><path d="M1073 1019v-11M1071.5 1010l1.5-2 1.5 2" stroke="#222" stroke-width="0.9" fill="none"/><path d="M1090 1008v14M1083 1015h14" stroke="#222" stroke-width="1.2"/><path d="M1090 1007l-2.5 3h5z M1090 1023l-2.5-3h5z M1082 1015l3-2.5v5z M1098 1015l-3-2.5v5z" fill="#222"/><path d="M1106 1011l3-3h9v11l-3 3h-9z" fill="#62aee4"/><path d="M1115 1011l3-3v11l-3 3z" fill="#3b8fcb"/><path d="M1106 1022h9l3-3v1.5l-3 3h-9z" fill="#bdbebc"/><path d="M1121 1019v-11M1119.5 1010l1.5-2 1.5 2" stroke="#222" stroke-width="0.9" fill="none"/><path d="M1130 1011l3-3h9v11l-3 3h-9z" fill="#62aee4"/><path d="M1139 1011l3-3v11l-3 3z" fill="#3b8fcb"/><path d="M1130 1022h9l3-3v1.5l-3 3h-9z" fill="#bdbebc"/><path d="M1145 1019v-11M1143.5 1010l1.5-2 1.5 2" stroke="#222" stroke-width="0.9" fill="none"/><path d="M1154 1011l3-3h9v11l-3 3h-9z" fill="#62aee4"/><path d="M1163 1011l3-3v11l-3 3z" fill="#3b8fcb"/><path d="M1154 1022h9l3-3v1.5l-3 3h-9z" fill="#bdbebc"/><path d="M1169 1019v-11M1167.5 1010l1.5-2 1.5 2" stroke="#222" stroke-width="0.9" fill="none"/><path d="M1178 1011l3-3h9v11l-3 3h-9z" fill="#62aee4"/><path d="M1187 1011l3-3v11l-3 3z" fill="#3b8fcb"/><path d="M1178 1022h9l3-3v1.5l-3 3h-9z" fill="#bdbebc"/><path d="M1193 1019v-11M1191.5 1010l1.5-2 1.5 2" stroke="#222" stroke-width="0.9" fill="none"/><path d="M1202 1011l3-3h9v11l-3 3h-9z" fill="#62aee4"/><path d="M1211 1011l3-3v11l-3 3z" fill="#3b8fcb"/><path d="M1202 1022h9l3-3v1.5l-3 3h-9z" fill="#bdbebc"/><path d="M1217 1019v-11M1215.5 1010l1.5-2 1.5 2" stroke="#222" stroke-width="0.9" fill="none"/><path d="M1226 1011l3-3h9v11l-3 3h-9z" fill="#62aee4"/><path d="M1235 1011l3-3v11l-3 3z" fill="#3b8fcb"/><path d="M1226 1022h9l3-3v1.5l-3 3h-9z" fill="#bdbebc"/><path d="M1241 1019v-11M1239.5 1010l1.5-2 1.5 2" stroke="#222" stroke-width="0.9" fill="none"/><path d="M1250 1011l3-3h9v11l-3 3h-9z" fill="#62aee4"/><path d="M1259 1011l3-3v11l-3 3z" fill="#3b8fcb"/><path d="M1250 1022h9l3-3v1.5l-3 3h-9z" fill="#bdbebc"/><path d="M1265 1019v-11M1263.5 1010l1.5-2 1.5 2" stroke="#222" stroke-width="0.9" fill="none"/><path d="M1274 1011l3-3h9v11l-3 3h-9z" fill="#62aee4"/><path d="M1283 1011l3-3v11l-3 3z" fill="#3b8fcb"/><path d="M1274 1022h9l3-3v1.5l-3 3h-9z" fill="#bdbebc"/><path d="M1289 1019v-11M1287.5 1010l1.5-2 1.5 2" stroke="#222" stroke-width="0.9" fill="none"/><path d="M1298 1011l3-3h9v11l-3 3h-9z" fill="#62aee4"/><path d="M1307 1011l3-3v11l-3 3z" fill="#3b8fcb"/><path d="M1298 1022h9l3-3v1.5l-3 3h-9z" fill="#bdbebc"/><path d="M1313 1019v-11M1311.5 1010l1.5-2 1.5 2" stroke="#222" stroke-width="0.9" fill="none"/><rect x="1323" y="1007" width="6" height="6" rx="1.5" fill="#d7d8d6" stroke="#777" stroke-width="0.8"/><path d="M1324 1017v3h3M1326 1019l1.5 1-1.5 1" stroke="#222" stroke-width="0.8" fill="none"/><path d="M1330 1016l2-2h6v7l-2 2h-6z" fill="#4aa0dc"/><rect x="1346.5" y="1007.5" width="5" height="15" fill="#f4f4f4" stroke="#444" stroke-width="0.9"/><rect x="1352" y="1007" width="10" height="7" fill="#5aa6dc"/><rect x="1370.5" y="1007.5" width="5" height="15" fill="#f4f4f4" stroke="#444" stroke-width="0.9"/><rect x="1376" y="1007" width="10" height="7" fill="#5aa6dc"/><path d="M1394 1016l5-4v8z" fill="#222"/><path d="M1398 1016h6" stroke="#222" stroke-width="1.4"/><circle cx="1406" cy="1016" r="3.8" fill="#8ab4e0" stroke="#444" stroke-width="0.8"/><rect x="1419" y="1007" width="7" height="6" rx="1.5" fill="#d7d8d6" stroke="#666" stroke-width="0.8"/><path d="M1420 1016v4h3M1422 1019l1.5 1-1.5 1" stroke="#222" stroke-width="0.9" fill="none"/><path d="M1426.5 1016l2-2h5v7l-2 2h-5z" fill="#d7d8d6" stroke="#666" stroke-width="0.8"/><rect x="1442.5" y="1007.5" width="5" height="15" fill="#f4f4f4" stroke="#444" stroke-width="0.9"/><rect x="1448" y="1007" width="10" height="7" fill="#5aa6dc"/><rect x="1466.5" y="1007.5" width="5" height="15" fill="#f4f4f4" stroke="#444" stroke-width="0.9"/><rect x="1472" y="1007" width="10" height="7" fill="#5aa6dc"/><rect x="1491" y="1007" width="7" height="6" rx="1.5" fill="#d7d8d6" stroke="#666" stroke-width="0.8"/><path d="M1492 1016v4h3M1494 1019l1.5 1-1.5 1" stroke="#222" stroke-width="0.9" fill="none"/><path d="M1498.5 1016l2-2h5v7l-2 2h-5z" fill="#d7d8d6" stroke="#666" stroke-width="0.8"/><rect x="1515" y="1007" width="7" height="6" rx="1.5" fill="#d7d8d6" stroke="#666" stroke-width="0.8"/><path d="M1516 1016v4h3M1518 1019l1.5 1-1.5 1" stroke="#222" stroke-width="0.9" fill="none"/><path d="M1522.5 1016l2-2h5v7l-2 2h-5z" fill="#d7d8d6" stroke="#666" stroke-width="0.8"/><rect x="1539" y="1007" width="7" height="6" rx="1.5" fill="#d7d8d6" stroke="#666" stroke-width="0.8"/><path d="M1540 1016v4h3M1542 1019l1.5 1-1.5 1" stroke="#222" stroke-width="0.9" fill="none"/><path d="M1546.5 1016l2-2h5v7l-2 2h-5z" fill="#d7d8d6" stroke="#666" stroke-width="0.8"/><rect x="1563" y="1007" width="7" height="6" rx="1.5" fill="#d7d8d6" stroke="#666" stroke-width="0.8"/><path d="M1564 1016v4h3M1566 1019l1.5 1-1.5 1" stroke="#222" stroke-width="0.9" fill="none"/><path d="M1570.5 1016l2-2h5v7l-2 2h-5z" fill="#d7d8d6" stroke="#666" stroke-width="0.8"/><path d="M1588 1008h12M1587 1009v12M1588 1022h6M1601 1009v6" stroke="#444" stroke-width="0.8" stroke-dasharray="1.5 1" fill="none"/><rect x="1586" y="1007" width="2" height="2" fill="#1a73e8"/><rect x="1600" y="1007" width="2" height="2" fill="#1a73e8"/><rect x="1586" y="1021" width="2" height="2" fill="#1a73e8"/><path d="M1594 1022.5l1-3 4.5-4.5 2 2-4.5 4.5z" fill="#f7b52b"/><circle cx="1601.5" cy="1015.5" r="1.2" fill="#e23c3c"/><path d="M1610 1011l3-3h9v11l-3 3h-9z" fill="#62aee4"/><path d="M1619 1011l3-3v11l-3 3z" fill="#3b8fcb"/><path d="M1610 1022h9l3-3v1.5l-3 3h-9z" fill="#bdbebc"/><path d="M1625 1019v-11M1623.5 1010l1.5-2 1.5 2" stroke="#222" stroke-width="0.9" fill="none"/><path d="M1634 1011l3-3h9v11l-3 3h-9z" fill="#62aee4"/><path d="M1643 1011l3-3v11l-3 3z" fill="#3b8fcb"/><path d="M1634 1022h9l3-3v1.5l-3 3h-9z" fill="#bdbebc"/><path d="M1649 1019v-11M1647.5 1010l1.5-2 1.5 2" stroke="#222" stroke-width="0.9" fill="none"/><rect x="1659" y="1007" width="6" height="6" rx="1.5" fill="#d7d8d6" stroke="#777" stroke-width="0.8"/><path d="M1660 1017v3h3M1662 1019l1.5 1-1.5 1" stroke="#222" stroke-width="0.8" fill="none"/><path d="M1666 1016l2-2h6v7l-2 2h-6z" fill="#4aa0dc"/><rect x="1682.5" y="1007.5" width="5" height="15" fill="#f4f4f4" stroke="#444" stroke-width="0.9"/><rect x="1688" y="1007" width="10" height="7" fill="#5aa6dc"/><rect x="1707" y="1007" width="7" height="6" rx="1.5" fill="#d7d8d6" stroke="#666" stroke-width="0.8"/><path d="M1708 1016v4h3M1710 1019l1.5 1-1.5 1" stroke="#222" stroke-width="0.9" fill="none"/><path d="M1714.5 1016l2-2h5v7l-2 2h-5z" fill="#d7d8d6" stroke="#666" stroke-width="0.8"/><rect x="1731" y="1007" width="7" height="6" rx="1.5" fill="#d7d8d6" stroke="#666" stroke-width="0.8"/><path d="M1732 1016v4h3M1734 1019l1.5 1-1.5 1" stroke="#222" stroke-width="0.9" fill="none"/><path d="M1738.5 1016l2-2h5v7l-2 2h-5z" fill="#d7d8d6" stroke="#666" stroke-width="0.8"/><rect x="1754.5" y="1007.5" width="5" height="15" fill="#f4f4f4" stroke="#444" stroke-width="0.9"/><rect x="1760" y="1007" width="10" height="7" fill="#5aa6dc"/><rect x="1779" y="1007" width="7" height="6" rx="1.5" fill="#d7d8d6" stroke="#666" stroke-width="0.8"/><path d="M1780 1016v4h3M1782 1019l1.5 1-1.5 1" stroke="#e04040" stroke-width="0.9" fill="none"/><path d="M1786.5 1016l2-2h5v7l-2 2h-5z" fill="#d7d8d6" stroke="#666" stroke-width="0.8"/><path d="M1804 1008h12M1803 1009v12M1804 1022h6M1817 1009v6" stroke="#444" stroke-width="0.8" stroke-dasharray="1.5 1" fill="none"/><rect x="1802" y="1007" width="2" height="2" fill="#1a73e8"/><rect x="1816" y="1007" width="2" height="2" fill="#1a73e8"/><rect x="1802" y="1021" width="2" height="2" fill="#1a73e8"/><path d="M1810 1022.5l1-3 4.5-4.5 2 2-4.5 4.5z" fill="#f7b52b"/><circle cx="1817.5" cy="1015.5" r="1.2" fill="#e23c3c"/><path d="M1826 1011l3-3h9v11l-3 3h-9z" fill="#62aee4"/><path d="M1835 1011l3-3v11l-3 3z" fill="#3b8fcb"/><path d="M1826 1022h9l3-3v1.5l-3 3h-9z" fill="#bdbebc"/><path d="M1841 1019v-11M1839.5 1010l1.5-2 1.5 2" stroke="#222" stroke-width="0.9" fill="none"/><rect x="1851" y="1007" width="6" height="6" rx="1.5" fill="#d7d8d6" stroke="#777" stroke-width="0.8"/><path d="M1852 1017v3h3M1854 1019l1.5 1-1.5 1" stroke="#222" stroke-width="0.8" fill="none"/><path d="M1858 1016l2-2h6v7l-2 2h-6z" fill="#4aa0dc"/><path d="M154 1031.5H1866" stroke="#c8c9c7" stroke-width="1.3"/><path d="M154.5 1027.5v4" stroke="#c8c9c7" stroke-width="1"/><path d="M178.5 1027.5v4" stroke="#c8c9c7" stroke-width="1"/><path d="M202.5 1027.5v4" stroke="#c8c9c7" stroke-width="1"/><path d="M226.5 1027.5v4" stroke="#c8c9c7" stroke-width="1"/><path d="M250.5 1027.5v4" stroke="#c8c9c7" stroke-width="1"/><path d="M274.5 1027.5v4" stroke="#c8c9c7" stroke-width="1"/><path d="M298.5 1027.5v4" stroke="#c8c9c7" stroke-width="1"/><path d="M322.5 1027.5v4" stroke="#c8c9c7" stroke-width="1"/><path d="M346.5 1027.5v4" stroke="#c8c9c7" stroke-width="1"/><path d="M370.5 1027.5v4" stroke="#c8c9c7" stroke-width="1"/><path d="M394.5 1027.5v4" stroke="#c8c9c7" stroke-width="1"/><path d="M418.5 1027.5v4" stroke="#c8c9c7" stroke-width="1"/><path d="M442.5 1027.5v4" stroke="#c8c9c7" stroke-width="1"/><path d="M466.5 1027.5v4" stroke="#c8c9c7" stroke-width="1"/><path d="M490.5 1027.5v4" stroke="#c8c9c7" stroke-width="1"/><path d="M514.5 1027.5v4" stroke="#c8c9c7" stroke-width="1"/><path d="M538.5 1027.5v4" stroke="#c8c9c7" stroke-width="1"/><path d="M562.5 1027.5v4" stroke="#c8c9c7" stroke-width="1"/><path d="M586.5 1027.5v4" stroke="#c8c9c7" stroke-width="1"/><path d="M610.5 1027.5v4" stroke="#c8c9c7" stroke-width="1"/><path d="M634.5 1027.5v4" stroke="#c8c9c7" stroke-width="1"/><path d="M658.5 1027.5v4" stroke="#c8c9c7" stroke-width="1"/><path d="M682.5 1027.5v4" stroke="#c8c9c7" stroke-width="1"/><path d="M706.5 1027.5v4" stroke="#c8c9c7" stroke-width="1"/><path d="M730.5 1027.5v4" stroke="#c8c9c7" stroke-width="1"/><path d="M754.5 1027.5v4" stroke="#c8c9c7" stroke-width="1"/><path d="M778.5 1027.5v4" stroke="#c8c9c7" stroke-width="1"/><path d="M802.5 1027.5v4" stroke="#c8c9c7" stroke-width="1"/><path d="M826.5 1027.5v4" stroke="#c8c9c7" stroke-width="1"/><path d="M850.5 1027.5v4" stroke="#c8c9c7" stroke-width="1"/><path d="M874.5 1027.5v4" stroke="#c8c9c7" stroke-width="1"/><path d="M898.5 1027.5v4" stroke="#c8c9c7" stroke-width="1"/><path d="M922.5 1027.5v4" stroke="#c8c9c7" stroke-width="1"/><path d="M946.5 1027.5v4" stroke="#c8c9c7" stroke-width="1"/><path d="M970.5 1027.5v4" stroke="#c8c9c7" stroke-width="1"/><path d="M994.5 1027.5v4" stroke="#c8c9c7" stroke-width="1"/><path d="M1018.5 1027.5v4" stroke="#c8c9c7" stroke-width="1"/><path d="M1042.5 1027.5v4" stroke="#c8c9c7" stroke-width="1"/><path d="M1066.5 1027.5v4" stroke="#c8c9c7" stroke-width="1"/><path d="M1090.5 1027.5v4" stroke="#c8c9c7" stroke-width="1"/><path d="M1114.5 1027.5v4" stroke="#c8c9c7" stroke-width="1"/><path d="M1138.5 1027.5v4" stroke="#c8c9c7" stroke-width="1"/><path d="M1162.5 1027.5v4" stroke="#c8c9c7" stroke-width="1"/><path d="M1186.5 1027.5v4" stroke="#c8c9c7" stroke-width="1"/><path d="M1210.5 1027.5v4" stroke="#c8c9c7" stroke-width="1"/><path d="M1234.5 1027.5v4" stroke="#c8c9c7" stroke-width="1"/><path d="M1258.5 1027.5v4" stroke="#c8c9c7" stroke-width="1"/><path d="M1282.5 1027.5v4" stroke="#c8c9c7" stroke-width="1"/><path d="M1306.5 1027.5v4" stroke="#c8c9c7" stroke-width="1"/><path d="M1330.5 1027.5v4" stroke="#c8c9c7" stroke-width="1"/><path d="M1354.5 1027.5v4" stroke="#c8c9c7" stroke-width="1"/><path d="M1378.5 1027.5v4" stroke="#c8c9c7" stroke-width="1"/><path d="M1402.5 1027.5v4" stroke="#c8c9c7" stroke-width="1"/><path d="M1426.5 1027.5v4" stroke="#c8c9c7" stroke-width="1"/><path d="M1450.5 1027.5v4" stroke="#c8c9c7" stroke-width="1"/><path d="M1474.5 1027.5v4" stroke="#c8c9c7" stroke-width="1"/><path d="M1498.5 1027.5v4" stroke="#c8c9c7" stroke-width="1"/><path d="M1522.5 1027.5v4" stroke="#c8c9c7" stroke-width="1"/><path d="M1546.5 1027.5v4" stroke="#c8c9c7" stroke-width="1"/><path d="M1570.5 1027.5v4" stroke="#c8c9c7" stroke-width="1"/><path d="M1594.5 1027.5v4" stroke="#c8c9c7" stroke-width="1"/><path d="M1618.5 1027.5v4" stroke="#c8c9c7" stroke-width="1"/><path d="M1642.5 1027.5v4" stroke="#c8c9c7" stroke-width="1"/><path d="M1666.5 1027.5v4" stroke="#c8c9c7" stroke-width="1"/><path d="M1690.5 1027.5v4" stroke="#c8c9c7" stroke-width="1"/><path d="M1714.5 1027.5v4" stroke="#c8c9c7" stroke-width="1"/><path d="M1738.5 1027.5v4" stroke="#c8c9c7" stroke-width="1"/><path d="M1762.5 1027.5v4" stroke="#c8c9c7" stroke-width="1"/><path d="M1786.5 1027.5v4" stroke="#c8c9c7" stroke-width="1"/><path d="M1810.5 1027.5v4" stroke="#c8c9c7" stroke-width="1"/><path d="M1834.5 1027.5v4" stroke="#c8c9c7" stroke-width="1"/><path d="M1858.5 1027.5v4" stroke="#c8c9c7" stroke-width="1"/><path d="M1867 1032h8" stroke="#c8c9c7" stroke-width="1.3" stroke-dasharray="2 2"/><g transform="translate(1899 1020)"><circle r="5.5" fill="none" stroke="#8f908e" stroke-width="3.5"/><rect x="-1.6" y="-8.5" width="3.2" height="4" fill="#8f908e" transform="rotate(0)"/><rect x="-1.6" y="-8.5" width="3.2" height="4" fill="#8f908e" transform="rotate(45)"/><rect x="-1.6" y="-8.5" width="3.2" height="4" fill="#8f908e" transform="rotate(90)"/><rect x="-1.6" y="-8.5" width="3.2" height="4" fill="#8f908e" transform="rotate(135)"/><rect x="-1.6" y="-8.5" width="3.2" height="4" fill="#8f908e" transform="rotate(180)"/><rect x="-1.6" y="-8.5" width="3.2" height="4" fill="#8f908e" transform="rotate(225)"/><rect x="-1.6" y="-8.5" width="3.2" height="4" fill="#8f908e" transform="rotate(270)"/><rect x="-1.6" y="-8.5" width="3.2" height="4" fill="#8f908e" transform="rotate(315)"/></g></svg>
<div class="a" style="left:0;top:1040px;width:1920px;height:40px;background:#676a65"></div>
<div class="a" style="left:49px;top:1040px;width:342px;height:40px;background:#323230"></div>
<div class="a" style="left:687px;top:1040px;width:48px;height:40px;background:#838682"></div>
<svg style="left:0;top:0" width="1" height="1">
<path d="M16 1053.5l6.5-.9v6.8H16z M23.5 1052.4l8.5-1.2v8.2h-8.5z M16 1060.5h6.5v6.8L16 1066.5z M23.5 1060.5H32v8.2l-8.5-1.2z" fill="#fff"/>
<circle cx="71" cy="1058" r="4.8" fill="none" stroke="#fff" stroke-width="1.2"/><path d="M67.5 1061.5l-7.5 7.5" stroke="#fff" stroke-width="1.3"/>
<circle cx="416" cy="1060" r="7.6" fill="none" stroke="#fff" stroke-width="1.8"/>
<path d="M455.5 1053.5h12v12h-12z" fill="none" stroke="#fff" stroke-width="1.2"/><path d="M469 1052v14M471 1052v3M471 1058v3M471 1063v3" stroke="#fff" stroke-width="1"/>
<!-- chrome -->
<circle cx="514" cy="1060" r="11" fill="#db4437"/><path d="M514 1060 L504.5 1065.5 A11 11 0 0 0 519.5 1069.5z" fill="#0f9d58"/><path d="M514 1060 L519.5 1069.5 A11 11 0 0 0 523.5 1054.5z" fill="#f4b400"/><path d="M514 1049 A11 11 0 0 0 504.5 1065.5 L514 1060z" fill="#db4437"/><circle cx="514" cy="1060" r="5" fill="#fff"/><circle cx="514" cy="1060" r="4" fill="#4285f4"/>
<!-- explorer -->
<path d="M553 1052h8l2 2h12v14h-22z" fill="#f2c14b"/><path d="M553 1056h22v3h-22z" fill="#e0a92f"/><rect x="560" y="1062" width="10" height="6" fill="#1e7ad6"/>
<!-- sublime -->
<rect x="601" y="1048" width="24" height="24" rx="2" fill="#3a3a3a"/><path d="M607 1058l12-4v4l-12 4z M607 1062l12 4v-4l-12-4z M607 1062l12 4v4l-12-4z" fill="#f29a1d"/>
<!-- ubuntu -->
<circle cx="661" cy="1060" r="12" fill="#e95420"/><circle cx="661" cy="1060" r="6" fill="none" stroke="#fff" stroke-width="2"/><circle cx="653" cy="1060" r="2.2" fill="#fff"/><circle cx="665" cy="1053" r="2.2" fill="#fff"/><circle cx="665" cy="1067" r="2.2" fill="#fff"/>
<!-- fusion -->
<rect x="699" y="1048" width="24" height="24" fill="#f6dcc4"/><path d="M704 1050h12v4h-8v4h6v4h-6v8h-4z" fill="#e8892d"/>
<!-- spotify -->
<circle cx="760" cy="1060" r="11" fill="#1ed760"/><path d="M754 1056.5c4-1.2 8-.8 12 1.2M755 1060c3.5-1 6.5-.6 9.5 1M756 1063.3c2.5-.7 5-.5 7.5.8" stroke="#111" stroke-width="1.8" fill="none" stroke-linecap="round"/>
<!-- R app -->
<rect x="797" y="1048" width="24" height="24" fill="#fff"/><rect x="797" y="1048" width="4" height="24" fill="#2966b8"/><path d="M803 1050h9a6 6 0 0 1 0 12h-2l5 6h-5l-4-6v6h-3z" fill="#111"/><rect x="812" y="1064" width="8" height="6" fill="#999"/>
<!-- underlines -->
<rect x="495" y="1078" width="40" height="2" fill="#bab3a6"/><rect x="544" y="1078" width="40" height="2" fill="#bab3a6"/><rect x="593" y="1078" width="40" height="2" fill="#bab3a6"/>
<rect x="687" y="1078" width="48" height="2" fill="#bab3a6"/><rect x="740" y="1078" width="40" height="2" fill="#bab3a6"/>
<!-- tray -->
<circle cx="1554" cy="1060" r="9" fill="#f6b223"/><path d="M1548 1066l12-12M1551 1068l10-10" stroke="#f8c860" stroke-width="1.3"/>
<path d="M1665 1064l5-5 5 5" stroke="#fff" stroke-width="1.3" fill="none"/>
<rect x="1691" y="1053" width="9" height="13" rx="2" fill="none" stroke="#fff" stroke-width="1.1"/><path d="M1700 1057l3-2v9l-3-2" fill="none" stroke="#fff" stroke-width="1"/>
<path d="M1712 1055v6M1711 1058h3" stroke="#fff" stroke-width="1.2"/><rect x="1715" y="1055" width="12" height="8" fill="none" stroke="#fff" stroke-width="1.1"/><rect x="1716.5" y="1056.5" width="7" height="5" fill="#fff"/>
<path d="M1739 1066a11 11 0 0 1 11 -11 M1742 1066a8 8 0 0 1 8 -8 M1745 1066a5 5 0 0 1 5 -5" stroke="#fff" stroke-width="1.1" fill="none"/><circle cx="1748" cy="1066" r="1.3" fill="#fff"/>
<path d="M1761 1057h3l4-4v14l-4-4h-3z" fill="none" stroke="#fff" stroke-width="1.1"/><path d="M1770 1057a4 4 0 0 1 0 6M1772.5 1055a7 7 0 0 1 0 10" stroke="#fff" stroke-width="1" fill="none"/>
<path d="M1785 1055l5-3 5 3-5 3z M1795 1055l5-3 5 3-5 3z M1785 1061l5-3 5 3-5 3z M1795 1061l5-3 5 3-5 3z M1790 1066l5-3 5 3-5 3z" fill="#fff" transform="translate(-1 0)"/>
<path d="M1879 1053h15v10h-10l-4 3v-3h-1z" fill="#fff"/><path d="M1882 1056h9M1882 1058.5h9" stroke="#676a65" stroke-width="0.9"/>
<circle cx="1894" cy="1067" r="7.5" fill="#3c3d3b" stroke="#777" stroke-width="0.8"/>
</svg>
<div class="t" style="left:89px;top:1054px;font-size:14.3px;color:#d9d9d9">Type here to search</div>
<div class="t" style="left:1573px;top:1053px;font-size:13px;color:#fff">47°F&nbsp; Sunny</div>
<div class="t" style="left:1814px;top:1046px;font-size:12px;color:#fff;letter-spacing:-0.3px">3:06 PM</div>
<div class="t" style="left:1810px;top:1063px;font-size:12px;color:#fff;letter-spacing:-0.4px">12/4/2021</div>
<div class="t" style="left:1888px;top:1062px;font-size:10px;color:#fff">10</div>
<div class="a" style="left:1915px;top:1040px;width:5px;height:40px;background:#676a65"></div>
<svg style="left:0;top:0" width="1920" height="1080" viewBox="0 0 1920 1080"><path d="M460 571L1382 284L1773 504L741 932z" fill="#b9e1f4"/>
<defs><clipPath id="pfc"><path d="M460 571L1382 284L1773 504L741 932z"/></clipPath></defs>
<g fill="none" stroke="#6ec2ea" stroke-width="1.45" stroke-linejoin="round" clip-path="url(#pfc)"><!-- outer arcs -->
<path stroke-width="2" d="M1046 411 L1140 358 C1180 348 1230 343 1292 343 C1350 343 1390 350 1426 368 C1480 385 1530 410 1567 440 C1600 470 1606 510 1597 540 C1588 575 1550 605 1480 622 C1450 628 1425 631 1392 635.5 L1250 657"/>
<path d="M1052 416 L1140 365 C1180 353 1230 347 1292 347"/>
<path d="M1566 451 L1558 475 C1570 495 1572 520 1567 542 C1558 565 1540 590 1500 610 C1470 622 1440 628 1420 631"/>
<path d="M1572 565 C1560 590 1520 612 1420 631"/>
<!-- orbit -->
<path stroke-width="2.2" d="M1123 426 C1165 392 1225 374 1292 373 C1360 373 1420 388 1460 418 C1475 430 1480 445 1481 457"/>
<path stroke-width="1.6" d="M1128 430 C1170 397 1228 378 1292 377"/>
<path d="M1175 393 C1215 383 1255 381 1292 381.5 C1360 383 1410 398 1440 412 C1452 422 1450 435 1448 447"/>
<!-- flipper lane bits -->
<path d="M1440 450 L1450 442 L1483 446 L1487 458 L1444 459z M1452 455 L1478 455"/>
<!-- inner ramp arcs -->
<path stroke-width="1.5" d="M1376 577 C1420 568 1462 545 1476.7 506.7"/>
<path d="M1384 582 C1430 575 1472 550 1485 505"/>
<path d="M1359 594 C1420 588 1482 560 1500 517 L1495 503"/>
<path d="M1346 615 C1420 608 1470 590 1497 573 C1515 560 1530 548 1538 538"/>
<path d="M1200 604 C1260 617 1320 617 1346 615"/>
<path d="M1480 498 L1510 500 L1500 530 M1485 500 L1520 505"/>
<!-- dot curves -->
<path d="M1066 478 L1070 470 L1058 462 L1081 457 C1100 440 1120 435 1134.5 432.5 C1180 420 1210 412 1237.5 411.2 C1255 410 1265 411 1274 411.7"/>
<path d="M1154 492.5 C1156 482 1160 477 1167 473.8 C1175 468 1185 465.5 1192.5 465.4 C1205 465 1215 466 1223 467.5"/>
<path d="M1218 540 C1235 544 1250 545 1264 543.7 C1285 542 1300 540 1311.7 536.3 C1325 532 1336 527 1344 523"/>
<path d="M853 546 C870 550 885 555 890 562 C893 568 895 572 897 574 C910 580 925 578 938 575"/>
<path d="M855 475 C875 492 890 500 909 503.7 C930 508 945 510 963 509.5"/>
<path d="M988 620 C975 628 970 636 970 643 C978 648 985 650 988.7 653 C996 662 1000 672 1000 684"/>
<path d="M1115 639 C1100 650 1097 663 1104 674 C1112 700 1125 714 1138 725"/>

<!-- bumpers -->
<ellipse cx="1310" cy="432" rx="42" ry="20" stroke-width="2"/><ellipse cx="1310" cy="432" rx="36" ry="16"/>
<ellipse cx="1254" cy="488" rx="43" ry="23" stroke-width="2"/><ellipse cx="1254" cy="488" rx="37" ry="19"/>
<ellipse cx="1373" cy="506" rx="44" ry="23.5" stroke-width="2"/><ellipse cx="1373" cy="506" rx="38" ry="19.5"/>
<path d="M1322 436 L1360 420 L1368 424 L1330 440z M1266 492 L1305 474 L1312 478 L1272 496z M1385 510 L1422 494 L1428 498 L1390 514z"/>
<!-- spoke ellipse -->
<ellipse cx="1079" cy="560" rx="136.7" ry="74.8" transform="rotate(-2 1079 560)"/>
<path stroke-width="1.1" d="M953.2 542.1 L1206.5 574.0 M953.5 539.4 L1206.8 571.2 M1008.7 498.9 L1155.4 621.8 M1010.5 496.7 L1157.2 619.7 M1098.7 488.5 L1052.7 629.2 M1101.3 489.3 L1055.4 630.1 M1181.0 518.7 L969.2 595.7 M1182.0 521.3 L970.1 598.4"/>
<!-- arrows -->
<path d="M901 456 L958 458 L983 489.5 L963 481.7 L961 503 L879 476 L919 463z"/>
<path d="M1128 643 L1164 638 L1169 654 L1218 671 L1198 708 L1191 692 L1146 709z"/>
<!-- slingshot lane -->
<path d="M1179 751 L1250 659 L1287 653 L1218 736 M1213 736 L1281 654"/>
<ellipse cx="1269" cy="697.5" rx="16" ry="10" transform="rotate(-8 1269 697.5)"/>
<ellipse cx="1568" cy="574" rx="15" ry="8" transform="rotate(-10 1568 574)"/>
<ellipse cx="1538" cy="533" rx="11" ry="6"/>
<!-- right structure -->
<path d="M1346 325 L1393 314 L1448 345 L1408 358 L1354 326 M1420 369 L1465 355 M1426 369 L1566 451 M1465 355 L1606 436 L1566 451 M1528 486 L1627 449 L1703 492 L1602 532 L1528 486 M1521 486 L1528 486"/>
<ellipse cx="1245" cy="337" rx="12" ry="5.5"/>
<!-- top-left edge lines -->
<path d="M845 452 L971.7 441.7 M848 446 L960 438 M850 457 L971.7 451 M940 457.5 L958.3 457.5 L971.7 475"/>
<ellipse cx="932" cy="434.5" rx="13" ry="6.5"/>
<ellipse cx="1014" cy="423" rx="14" ry="7"/>
<path d="M952.5 430.4 L967.5 425.8 L962.5 423 L996.7 412 L1000 415.8 L1016.7 411.7 L1029 406 L1046 402"/>
<path stroke-width="2.2" d="M986.7 436.7 L1006.7 414.2 L1010.8 412.5"/>
<path d="M981.7 449 L1015 428.3 M1003.3 424 L1048.3 453.3 M1018.3 410.8 L1035 418.3 L1071.7 445 L1081.7 442.5 M1050 409 L1103 383 M990 445 L1015 464 L1000 468.3 L1012 480 L1040 470 M1059 461 L1070 469 L1081.7 457.5 M1000 450 L1012 460"/>
<!-- left cluster -->
<ellipse cx="486" cy="572" rx="14" ry="8"/>
<path d="M565 540 L871 892"/>
<ellipse cx="668" cy="516.5" rx="14" ry="7"/>
<path d="M649.4 514 L650.8 690 M667 510 L669.4 665 M690.4 500 L696.9 678 M705.8 518 L710 606 M717.9 521 L722.5 605 M725.4 509.6 L730 600 M727 565 L727.5 656 M745.8 514 L751.25 601 M762 531 L766.25 587.5"/>
<path d="M640 626 L668.75 658.75 M658.75 587.5 L691.25 625 M677.5 585 L710 605 M686 578.75 L727.5 615 M705 571 L732.5 602.5 M710 617.5 L725 660 M726 566 L752.5 600 M706 520 L735 545 M735 512 L760 540"/>
<path d="M640 580 L740 545 M667.5 556.7 L731.7 537.5 M668 560 L675 567.5 L702.5 560 L694 551 M640 590 L658.75 587.5 L691.25 625 M683.75 642.5 L801.25 606.25 M732.5 630 L757.5 617.5 L760 620 L800 603.75 M770 612 L772 615 L801 606 M757 586 L765 600 L790 590 L798 598 M683 629 L672 633 L716 617"/>
<path d="M705 517.5 L840.8 474.2 L848.3 486.7 M720 513.3 L840.8 474.2 M722 520.8 L845 478.3 M748 506.7 L835.8 480.6 M761.7 530.8 L853.3 500.8 M763 537 L877.5 500.4 M729.6 565 L769 554.6 L873.3 526.5 L858.75 522.3 M819 569 L848 563 L877.5 526.5"/>
<path stroke-width="2.2" d="M749 504 L834 478 M790 528 L850 508"/>
<ellipse cx="742.5" cy="608" rx="13" ry="8"/><ellipse cx="715" cy="617" rx="11" ry="8"/><ellipse cx="715" cy="617" rx="7" ry="5"/>
<path d="M790 560 L810 575 L840 568 M800 548 L815 566"/>
<!-- bottom-left cluster -->
<ellipse cx="571" cy="682" rx="16" ry="9"/>
<ellipse cx="622.5" cy="741" rx="13" ry="8"/>
<ellipse cx="640" cy="769" rx="17" ry="10"/>
<ellipse cx="673" cy="667" rx="16" ry="9"/>
<ellipse cx="698.75" cy="692.5" rx="14" ry="12.5"/>
<ellipse cx="718" cy="720" rx="16" ry="10"/>
<ellipse cx="752" cy="909.7" rx="18.5" ry="12.5" transform="rotate(-8 752 909.7)"/>
<ellipse cx="964.2" cy="822.3" rx="17" ry="11.4"/>
<path d="M565.0 690.0 L655.0 661.2 L670.0 658.8 M567.5 695.0 L652.5 667.5 M568.8 700.0 L650.0 675.0 M568.8 707.5 L665.0 676.2 M590.0 720.0 L697.5 685.0 M612.5 720.0 L700.0 700.0 M590.0 742.5 L702.5 705.0 M647.5 721.2 L713.8 698.8 M613.8 763.8 L667.5 750.0 L650.0 727.5 L702.5 712.5 M615.0 768.8 L666.2 752.5 M650.0 640.0 L650.0 690.0 M696.2 640.0 L696.9 678.8 M652.5 640.0 L670.0 658.8 M677.5 670.0 L731.2 727.5 L780.0 775.0 M702.5 710.0 L780.0 746.2 M712.5 698.8 L780.0 730.0 M665.0 676.2 L662.5 700.0 L692.5 712.5 M758.8 726.2 L771.2 738.8 L780.0 735.0 M757.5 697.5 L780.0 710.0 M612.5 687.5 L635.0 698.8 L650.0 690.0 M635.0 698.8 L648.8 720.0 M617.5 677.5 L632.5 705.0"/>
<path stroke-width="2.6" d="M592.5 712.5 L665.0 687.5"/>
<path d="M756.4 697.2 L979.5 795.6 L1122.8 730.0 M1122.8 730.0 L1133.8 743.1 L1005.8 789.1 M740.0 710.3 L978.4 784.7 L1098.8 715.8 M740.0 732.2 L950.0 819.7 L1009.1 821.9 M740.0 743.1 L960.9 841.6 M803.4 703.8 L834.1 695.0 L871.2 679.7 L875.6 683.0 L893.1 677.5 L905.2 688.4 L890.9 692.8 L862.5 705.9 L851.6 690.6 L805.6 707.0z M758.6 725.6 L789.2 719.1 L829.7 778.1 L811.1 784.7 L823.1 797.8 L901.9 767.2 L912.8 780.3 L928.1 773.8 M847.2 722.3 L904.1 710.3 L958.8 743.1 M888.8 709.2 L1011.2 709.2 M901.9 747.5 L954.4 734.4 L985.0 747.5 L1011.2 736.6 L1050.6 719.1 L1100.9 714.7 M915.0 761.7 L928.1 773.8 L958.8 762.8 L923.8 756.2 M871.2 778.1 L886.6 791.2 L950.0 765.0 M1006.9 754.1 L1046.2 736.6 L1074.7 732.2 M1011.2 778.1 L1076.9 754.1 L1133.8 732.2 M1044.1 786.9 L1129.4 756.2 M942.3 688.4 L1018.9 688.4 L1018.9 705.9 L942.3 705.9z M968.6 678.6 L1045.2 678.6 L1046.2 692.8 L968.6 692.8z M788.1 732.2 L893.1 791.2 L958.8 762.8 M772.8 734.4 L827.5 782.5 M834.1 716.9 L919.4 773.8 L1011.2 778.1 M842.8 710.3 L936.9 765.0 M859.2 718.0 L976.2 791.2 M888.8 708.1 L980.6 778.1"/>
</g>
<path d="M460 571L1382 284L1773 504L741 932z" fill="none" stroke="#6ec2ea" stroke-width="2.6" stroke-linejoin="round"/>
<path d="M549 703L581.5 746.5L592 742L561 699z" fill="#fff"/><path d="M549 703L581.5 746.5L592 742" fill="none" stroke="#6ec2ea" stroke-width="1.1"/>
<path d="M706 519L781 592M886.7 701.7L979 794" stroke="#b09c88" stroke-width="0.9" stroke-dasharray="4 4" fill="none"/>
<path d="M585 731L608 723" stroke="#b080e8" stroke-width="1.2"/><path d="M862 881L871 892" stroke="#d9a070" stroke-width="1"/>
<g fill="#c8e9f9"><circle cx="668.3" cy="516.7" r="5.6"/><circle cx="755.5" cy="493.0" r="5.6"/><circle cx="756.7" cy="504.2" r="5.6"/><circle cx="737.0" cy="510.3" r="5.6"/><circle cx="737.5" cy="522.5" r="5.6"/><circle cx="767.8" cy="487.2" r="5.6"/><circle cx="779.2" cy="483.8" r="5.6"/><circle cx="784.2" cy="474.7" r="5.6"/><circle cx="793.3" cy="471.7" r="5.6"/><circle cx="803.0" cy="476.2" r="5.6"/><circle cx="807.5" cy="467.2" r="5.6"/><circle cx="816.7" cy="464.5" r="5.6"/><circle cx="796.7" cy="491.7" r="5.6"/><circle cx="807.5" cy="495.8" r="5.6"/><circle cx="816.7" cy="493.3" r="5.6"/><circle cx="826.7" cy="498.0" r="5.6"/><circle cx="830.8" cy="488.3" r="5.6"/><circle cx="835.3" cy="479.7" r="5.6"/><circle cx="840.0" cy="485.8" r="5.6"/><circle cx="837.0" cy="496.3" r="5.6"/><circle cx="778.3" cy="515.0" r="5.6"/><circle cx="790.8" cy="509.5" r="5.6"/><circle cx="838.0" cy="510.3" r="5.6"/><circle cx="793.7" cy="524.2" r="5.6"/><circle cx="846.3" cy="521.7" r="5.6"/><circle cx="839.2" cy="529.2" r="5.6"/><circle cx="820.8" cy="528.3" r="5.6"/><circle cx="822.5" cy="533.8" r="5.6"/><circle cx="838.3" cy="538.3" r="5.6"/><circle cx="817.5" cy="551.3" r="5.6"/><circle cx="837.5" cy="552.8" r="5.6"/><circle cx="739.2" cy="546.2" r="5.6"/><circle cx="755.0" cy="545.8" r="5.6"/><circle cx="760.0" cy="550.8" r="5.6"/><circle cx="730.0" cy="554.2" r="5.6"/><circle cx="734.7" cy="559.5" r="5.6"/><circle cx="740.8" cy="571.2" r="5.6"/><circle cx="798.3" cy="564.7" r="5.6"/><circle cx="773.0" cy="573.0" r="5.6"/><circle cx="770.0" cy="579.7" r="5.6"/><circle cx="800.5" cy="591.3" r="5.6"/><circle cx="805.8" cy="596.7" r="5.6"/><circle cx="774.7" cy="600.0" r="5.6"/><circle cx="780.0" cy="605.5" r="5.6"/><circle cx="742.5" cy="597.0" r="5.6"/><circle cx="742.2" cy="608.0" r="5.6"/><circle cx="665.0" cy="575.0" r="5.6"/><circle cx="670.0" cy="580.3" r="5.6"/><circle cx="675.0" cy="582.5" r="5.6"/><circle cx="700.8" cy="574.2" r="5.6"/><circle cx="638.3" cy="583.7" r="5.6"/><circle cx="643.3" cy="589.2" r="5.6"/><circle cx="715.8" cy="616.7" r="5.6"/><circle cx="708.3" cy="622.2" r="5.6"/><circle cx="713.3" cy="628.3" r="5.6"/><circle cx="681.7" cy="631.3" r="5.6"/><circle cx="686.7" cy="636.7" r="5.6"/><circle cx="858.3" cy="529.2" r="5.6"/><circle cx="859.2" cy="502.5" r="5.6"/><circle cx="485.7" cy="573.7" r="5.6"/><circle cx="751.7" cy="909.7" r="5.6"/><circle cx="870.3" cy="448.7" r="5.6"/><circle cx="932.2" cy="434.5" r="5.6"/><circle cx="959.2" cy="431.3" r="5.6"/><circle cx="964.7" cy="435.5" r="5.6"/><circle cx="962.2" cy="448.0" r="5.6"/><circle cx="1013.7" cy="422.5" r="5.6"/><circle cx="1035.3" cy="407.0" r="5.6"/><circle cx="1040.8" cy="411.7" r="5.6"/><circle cx="1057.5" cy="449.7" r="5.6"/><circle cx="1084.2" cy="443.8" r="5.6"/><circle cx="1090.0" cy="448.3" r="5.6"/><circle cx="1006.7" cy="469.2" r="5.6"/><circle cx="1012.5" cy="473.8" r="5.6"/><circle cx="1078.3" cy="555.5" r="5.6"/><circle cx="1245.0" cy="336.7" r="5.6"/><circle cx="1392.8" cy="314.2" r="5.6"/><circle cx="1354.5" cy="326.3" r="5.6"/><circle cx="1447.5" cy="345.3" r="5.6"/><circle cx="1408.3" cy="358.0" r="5.6"/><circle cx="1426.3" cy="368.8" r="5.6"/><circle cx="1257.5" cy="378.3" r="5.6"/><circle cx="1330.8" cy="379.7" r="5.6"/><circle cx="1386.3" cy="390.3" r="5.6"/><circle cx="1438.3" cy="409.5" r="5.6"/><circle cx="1188.0" cy="391.3" r="5.6"/><circle cx="1172.5" cy="397.5" r="5.6"/><circle cx="1284.7" cy="423.7" r="5.6"/><circle cx="1298.8" cy="423.7" r="5.6"/><circle cx="1298.7" cy="430.5" r="5.6"/><circle cx="1311.3" cy="427.0" r="5.6"/><circle cx="1310.3" cy="431.7" r="5.6"/><circle cx="1322.2" cy="433.0" r="5.6"/><circle cx="1322.5" cy="439.7" r="5.6"/><circle cx="1288.3" cy="439.2" r="5.6"/><circle cx="1318.7" cy="446.3" r="5.6"/><circle cx="1342.2" cy="427.5" r="5.6"/><circle cx="1353.3" cy="423.3" r="5.6"/><circle cx="1451.3" cy="445.5" r="5.6"/><circle cx="1448.3" cy="453.8" r="5.6"/><circle cx="1465.4" cy="355.0" r="5.6"/><circle cx="1606.2" cy="436.2" r="5.6"/><circle cx="1565.8" cy="450.8" r="5.6"/><circle cx="1627.1" cy="448.8" r="5.6"/><circle cx="1702.9" cy="491.7" r="5.6"/><circle cx="1602.1" cy="532.1" r="5.6"/><circle cx="1528.3" cy="486.2" r="5.6"/><circle cx="1567.9" cy="574.6" r="5.6"/><circle cx="1479.2" cy="495.4" r="5.6"/><circle cx="1515.8" cy="495.8" r="5.6"/><circle cx="1510.4" cy="506.2" r="5.6"/><circle cx="1511.7" cy="518.3" r="5.6"/><circle cx="1513.8" cy="522.9" r="5.6"/><circle cx="1477.1" cy="447.9" r="5.6"/><circle cx="1481.2" cy="457.1" r="5.6"/><circle cx="1367.5" cy="582.1" r="5.6"/><circle cx="1384.2" cy="581.2" r="5.6"/><circle cx="1403.3" cy="491.2" r="5.6"/><circle cx="1417.9" cy="496.7" r="5.6"/><circle cx="1345.0" cy="497.5" r="5.6"/><circle cx="1360.4" cy="497.5" r="5.6"/><circle cx="1360.4" cy="505.0" r="5.6"/><circle cx="1373.8" cy="500.8" r="5.6"/><circle cx="1372.1" cy="507.1" r="5.6"/><circle cx="1372.9" cy="511.2" r="5.6"/><circle cx="1385.4" cy="507.9" r="5.6"/><circle cx="1386.2" cy="515.4" r="5.6"/><circle cx="1382.5" cy="522.5" r="5.6"/><circle cx="1350.0" cy="514.6" r="5.6"/><circle cx="1322.1" cy="494.6" r="5.6"/><circle cx="1285.4" cy="474.6" r="5.6"/><circle cx="1293.8" cy="482.1" r="5.6"/><circle cx="1303.3" cy="466.2" r="5.6"/><circle cx="1310.4" cy="471.7" r="5.6"/><circle cx="1227.1" cy="480.4" r="5.6"/><circle cx="1241.7" cy="481.2" r="5.6"/><circle cx="1254.2" cy="485.0" r="5.6"/><circle cx="1255.0" cy="490.4" r="5.6"/><circle cx="1253.3" cy="494.6" r="5.6"/><circle cx="1265.8" cy="490.4" r="5.6"/><circle cx="1266.7" cy="497.9" r="5.6"/><circle cx="1231.2" cy="497.5" r="5.6"/><circle cx="1261.7" cy="505.0" r="5.6"/><circle cx="1265.0" cy="659.2" r="5.6"/><circle cx="1269.2" cy="697.5" r="5.6"/><circle cx="523.7" cy="694.5" r="5.6"/><circle cx="564.7" cy="698.3" r="5.6"/><circle cx="571.3" cy="682.0" r="5.6"/><circle cx="604.5" cy="684.5" r="5.6"/><circle cx="590.8" cy="699.7" r="5.6"/><circle cx="575.8" cy="719.5" r="5.6"/><circle cx="596.3" cy="727.2" r="5.6"/><circle cx="640.0" cy="768.8" r="5.6"/><circle cx="673.3" cy="666.7" r="5.6"/><circle cx="675.8" cy="684.2" r="5.6"/><circle cx="689.5" cy="697.5" r="5.6"/><circle cx="718.0" cy="718.3" r="5.6"/><circle cx="795.0" cy="717.2" r="5.6"/><circle cx="800.8" cy="723.8" r="5.6"/><circle cx="813.3" cy="722.5" r="5.6"/><circle cx="772.5" cy="734.5" r="5.6"/><circle cx="817.5" cy="786.2" r="5.6"/><circle cx="980.0" cy="688.3" r="5.6"/><circle cx="1033.3" cy="688.3" r="5.6"/><circle cx="891.3" cy="682.0" r="5.6"/><circle cx="897.5" cy="688.3" r="5.6"/><circle cx="870.0" cy="698.3" r="5.6"/><circle cx="841.3" cy="712.2" r="5.6"/><circle cx="940.8" cy="704.7" r="5.6"/><circle cx="973.3" cy="701.3" r="5.6"/><circle cx="1007.5" cy="698.0" r="5.6"/><circle cx="1007.5" cy="708.3" r="5.6"/><circle cx="997.2" cy="711.7" r="5.6"/><circle cx="1023.3" cy="701.3" r="5.6"/><circle cx="1041.2" cy="701.3" r="5.6"/><circle cx="1085.3" cy="703.3" r="5.6"/><circle cx="1059.2" cy="713.7" r="5.6"/><circle cx="1081.2" cy="715.8" r="5.6"/><circle cx="1090.8" cy="712.0" r="5.6"/><circle cx="1077.5" cy="728.7" r="5.6"/><circle cx="1118.0" cy="735.3" r="5.6"/><circle cx="1011.2" cy="732.5" r="5.6"/><circle cx="946.2" cy="736.7" r="5.6"/><circle cx="952.2" cy="743.3" r="5.6"/><circle cx="984.2" cy="743.3" r="5.6"/><circle cx="1051.7" cy="739.5" r="5.6"/><circle cx="1038.3" cy="744.2" r="5.6"/><circle cx="918.3" cy="747.2" r="5.6"/><circle cx="925.0" cy="754.2" r="5.6"/><circle cx="943.7" cy="753.3" r="5.6"/><circle cx="1076.2" cy="753.0" r="5.6"/><circle cx="1087.5" cy="756.7" r="5.6"/><circle cx="1097.8" cy="752.8" r="5.6"/><circle cx="1114.2" cy="745.5" r="5.6"/><circle cx="1110.8" cy="759.2" r="5.6"/><circle cx="987.5" cy="771.2" r="5.6"/><circle cx="1032.2" cy="771.2" r="5.6"/><circle cx="1009.7" cy="780.3" r="5.6"/><circle cx="1084.2" cy="770.0" r="5.6"/><circle cx="1071.3" cy="775.5" r="5.6"/><circle cx="847.5" cy="769.7" r="5.6"/><circle cx="847.5" cy="775.0" r="5.6"/><circle cx="853.7" cy="781.7" r="5.6"/><circle cx="825.0" cy="793.0" r="5.6"/><circle cx="964.0" cy="822.0" r="5.6"/><circle cx="1124.2" cy="741.7" r="5.6"/><circle cx="1201.3" cy="733.3" r="5.6"/><circle cx="861.9" cy="502.1" r="5.6"/></g>
<circle cx="668.3" cy="516.7" r="3.8" fill="#fff" stroke="#222" stroke-width="1.25"/>
<circle cx="690.5" cy="498.8" r="3.85" fill="#f5f7f8" stroke="#7a7a7a" stroke-width="1.1"/>
<circle cx="743.7" cy="495.0" r="3.85" fill="#f5f7f8" stroke="#7a7a7a" stroke-width="1.1"/>
<circle cx="755.5" cy="493.0" r="3.8" fill="#fff" stroke="#222" stroke-width="1.25"/>
<circle cx="756.7" cy="504.2" r="3.8" fill="#fff" stroke="#222" stroke-width="1.25"/>
<circle cx="737.0" cy="510.3" r="3.8" fill="#fff" stroke="#222" stroke-width="1.25"/>
<circle cx="737.5" cy="522.5" r="3.8" fill="#fff" stroke="#222" stroke-width="1.25"/>
<circle cx="767.8" cy="487.2" r="3.8" fill="#fff" stroke="#222" stroke-width="1.25"/>
<circle cx="779.2" cy="483.8" r="3.8" fill="#fff" stroke="#222" stroke-width="1.25"/>
<circle cx="784.2" cy="474.7" r="3.8" fill="#fff" stroke="#222" stroke-width="1.25"/>
<circle cx="793.3" cy="471.7" r="3.8" fill="#fff" stroke="#222" stroke-width="1.25"/>
<circle cx="803.0" cy="476.2" r="3.8" fill="#fff" stroke="#222" stroke-width="1.25"/>
<circle cx="807.5" cy="467.2" r="3.8" fill="#fff" stroke="#222" stroke-width="1.25"/>
<circle cx="816.7" cy="464.5" r="3.8" fill="#fff" stroke="#222" stroke-width="1.25"/>
<circle cx="813.3" cy="475.0" r="3.85" fill="#f5f7f8" stroke="#7a7a7a" stroke-width="1.1"/>
<circle cx="796.7" cy="491.7" r="3.8" fill="#fff" stroke="#222" stroke-width="1.25"/>
<circle cx="807.5" cy="495.8" r="3.8" fill="#fff" stroke="#222" stroke-width="1.25"/>
<circle cx="816.7" cy="493.3" r="3.8" fill="#fff" stroke="#222" stroke-width="1.25"/>
<circle cx="826.7" cy="498.0" r="3.8" fill="#fff" stroke="#222" stroke-width="1.25"/>
<circle cx="830.8" cy="488.3" r="3.8" fill="#fff" stroke="#222" stroke-width="1.25"/>
<circle cx="835.3" cy="479.7" r="3.8" fill="#fff" stroke="#222" stroke-width="1.25"/>
<circle cx="840.0" cy="485.8" r="3.8" fill="#fff" stroke="#222" stroke-width="1.25"/>
<circle cx="837.0" cy="496.3" r="3.8" fill="#fff" stroke="#222" stroke-width="1.25"/>
<circle cx="849.7" cy="480.0" r="3.85" fill="#f5f7f8" stroke="#7a7a7a" stroke-width="1.1"/>
<circle cx="854.7" cy="474.7" r="3.6" fill="#303030" stroke="#7a7a7a" stroke-width="0.9"/>
<circle cx="766.3" cy="517.2" r="3.85" fill="#f5f7f8" stroke="#7a7a7a" stroke-width="1.1"/>
<circle cx="778.3" cy="515.0" r="3.8" fill="#fff" stroke="#222" stroke-width="1.25"/>
<circle cx="790.8" cy="509.5" r="3.8" fill="#fff" stroke="#222" stroke-width="1.25"/>
<circle cx="802.5" cy="505.5" r="3.85" fill="#f5f7f8" stroke="#7a7a7a" stroke-width="1.1"/>
<circle cx="838.0" cy="510.3" r="3.8" fill="#fff" stroke="#222" stroke-width="1.25"/>
<circle cx="845.8" cy="505.8" r="3.85" fill="#f5f7f8" stroke="#7a7a7a" stroke-width="1.1"/>
<circle cx="793.7" cy="524.2" r="3.8" fill="#fff" stroke="#222" stroke-width="1.25"/>
<circle cx="768.3" cy="532.2" r="3.85" fill="#f5f7f8" stroke="#7a7a7a" stroke-width="1.1"/>
<circle cx="846.3" cy="521.7" r="3.8" fill="#fff" stroke="#222" stroke-width="1.25"/>
<circle cx="839.2" cy="529.2" r="3.8" fill="#fff" stroke="#222" stroke-width="1.25"/>
<circle cx="820.8" cy="528.3" r="3.8" fill="#fff" stroke="#222" stroke-width="1.25"/>
<circle cx="822.5" cy="533.8" r="3.8" fill="#fff" stroke="#222" stroke-width="1.25"/>
<circle cx="812.5" cy="536.3" r="3.6" fill="#303030" stroke="#7a7a7a" stroke-width="0.9"/>
<circle cx="832.5" cy="536.3" r="3.6" fill="#303030" stroke="#7a7a7a" stroke-width="0.9"/>
<circle cx="838.3" cy="538.3" r="3.8" fill="#fff" stroke="#222" stroke-width="1.25"/>
<circle cx="798.3" cy="541.7" r="3.85" fill="#f5f7f8" stroke="#7a7a7a" stroke-width="1.1"/>
<circle cx="805.0" cy="543.8" r="3.6" fill="#303030" stroke="#7a7a7a" stroke-width="0.9"/>
<circle cx="814.2" cy="546.2" r="3.85" fill="#f5f7f8" stroke="#7a7a7a" stroke-width="1.1"/>
<circle cx="817.5" cy="551.3" r="3.8" fill="#fff" stroke="#222" stroke-width="1.25"/>
<circle cx="837.5" cy="552.8" r="3.8" fill="#fff" stroke="#222" stroke-width="1.25"/>
<circle cx="852.8" cy="545.8" r="3.6" fill="#303030" stroke="#7a7a7a" stroke-width="0.9"/>
<circle cx="739.2" cy="546.2" r="3.8" fill="#fff" stroke="#222" stroke-width="1.25"/>
<circle cx="755.0" cy="545.8" r="3.8" fill="#fff" stroke="#222" stroke-width="1.25"/>
<circle cx="760.0" cy="550.8" r="3.8" fill="#fff" stroke="#222" stroke-width="1.25"/>
<circle cx="730.0" cy="554.2" r="3.8" fill="#fff" stroke="#222" stroke-width="1.25"/>
<circle cx="734.7" cy="559.5" r="3.8" fill="#fff" stroke="#222" stroke-width="1.25"/>
<circle cx="740.8" cy="571.2" r="3.8" fill="#fff" stroke="#222" stroke-width="1.25"/>
<circle cx="788.3" cy="559.5" r="3.85" fill="#f5f7f8" stroke="#7a7a7a" stroke-width="1.1"/>
<circle cx="792.0" cy="559.5" r="3.85" fill="#f5f7f8" stroke="#7a7a7a" stroke-width="1.1"/>
<circle cx="798.3" cy="564.7" r="3.8" fill="#fff" stroke="#222" stroke-width="1.25"/>
<circle cx="807.8" cy="560.5" r="3.6" fill="#303030" stroke="#7a7a7a" stroke-width="0.9"/>
<circle cx="812.0" cy="560.8" r="3.85" fill="#f5f7f8" stroke="#7a7a7a" stroke-width="1.1"/>
<circle cx="773.0" cy="573.0" r="3.8" fill="#fff" stroke="#222" stroke-width="1.25"/>
<circle cx="770.0" cy="579.7" r="3.8" fill="#fff" stroke="#222" stroke-width="1.25"/>
<circle cx="780.0" cy="593.3" r="3.85" fill="#f5f7f8" stroke="#7a7a7a" stroke-width="1.1"/>
<circle cx="800.5" cy="591.3" r="3.8" fill="#fff" stroke="#222" stroke-width="1.25"/>
<circle cx="805.8" cy="596.7" r="3.8" fill="#fff" stroke="#222" stroke-width="1.25"/>
<circle cx="774.7" cy="600.0" r="3.8" fill="#fff" stroke="#222" stroke-width="1.25"/>
<circle cx="780.0" cy="605.5" r="3.8" fill="#fff" stroke="#222" stroke-width="1.25"/>
<circle cx="742.5" cy="597.0" r="3.8" fill="#fff" stroke="#222" stroke-width="1.25"/>
<circle cx="742.2" cy="608.0" r="3.8" fill="#fff" stroke="#222" stroke-width="1.25"/>
<circle cx="665.0" cy="575.0" r="3.8" fill="#fff" stroke="#222" stroke-width="1.25"/>
<circle cx="670.0" cy="580.3" r="3.8" fill="#fff" stroke="#222" stroke-width="1.25"/>
<circle cx="675.0" cy="582.5" r="3.8" fill="#fff" stroke="#222" stroke-width="1.25"/>
<circle cx="681.7" cy="580.0" r="3.85" fill="#f5f7f8" stroke="#7a7a7a" stroke-width="1.1"/>
<circle cx="700.8" cy="574.2" r="3.8" fill="#fff" stroke="#222" stroke-width="1.25"/>
<circle cx="707.5" cy="571.7" r="3.85" fill="#f5f7f8" stroke="#7a7a7a" stroke-width="1.1"/>
<circle cx="638.3" cy="583.7" r="3.8" fill="#fff" stroke="#222" stroke-width="1.25"/>
<circle cx="643.3" cy="589.2" r="3.8" fill="#fff" stroke="#222" stroke-width="1.25"/>
<circle cx="715.8" cy="616.7" r="3.8" fill="#fff" stroke="#222" stroke-width="1.25"/>
<circle cx="708.3" cy="622.2" r="3.8" fill="#fff" stroke="#222" stroke-width="1.25"/>
<circle cx="713.3" cy="628.3" r="3.8" fill="#fff" stroke="#222" stroke-width="1.25"/>
<circle cx="681.7" cy="631.3" r="3.8" fill="#fff" stroke="#222" stroke-width="1.25"/>
<circle cx="686.7" cy="636.7" r="3.8" fill="#fff" stroke="#222" stroke-width="1.25"/>
<circle cx="858.3" cy="529.2" r="3.8" fill="#fff" stroke="#222" stroke-width="1.25"/>
<circle cx="859.2" cy="502.5" r="3.8" fill="#fff" stroke="#222" stroke-width="1.25"/>
<circle cx="460.5" cy="570.5" r="3.85" fill="#f5f7f8" stroke="#7a7a7a" stroke-width="1.1"/>
<circle cx="485.7" cy="573.7" r="3.8" fill="#fff" stroke="#222" stroke-width="1.25"/>
<circle cx="740.8" cy="932.5" r="3.85" fill="#f5f7f8" stroke="#7a7a7a" stroke-width="1.1"/>
<circle cx="751.7" cy="909.7" r="3.8" fill="#fff" stroke="#222" stroke-width="1.25"/>
<circle cx="863.3" cy="450.3" r="3.85" fill="#f5f7f8" stroke="#7a7a7a" stroke-width="1.1"/>
<circle cx="870.3" cy="448.7" r="3.8" fill="#fff" stroke="#222" stroke-width="1.25"/>
<circle cx="932.2" cy="434.5" r="3.8" fill="#fff" stroke="#222" stroke-width="1.25"/>
<circle cx="959.2" cy="431.3" r="3.8" fill="#fff" stroke="#222" stroke-width="1.25"/>
<circle cx="964.7" cy="435.5" r="3.8" fill="#fff" stroke="#222" stroke-width="1.25"/>
<circle cx="982.0" cy="438.0" r="3.85" fill="#f5f7f8" stroke="#7a7a7a" stroke-width="1.1"/>
<circle cx="976.3" cy="443.3" r="3.85" fill="#f5f7f8" stroke="#7a7a7a" stroke-width="1.1"/>
<circle cx="962.2" cy="448.0" r="3.8" fill="#fff" stroke="#222" stroke-width="1.25"/>
<circle cx="965.3" cy="448.3" r="3.85" fill="#f5f7f8" stroke="#7a7a7a" stroke-width="1.1"/>
<circle cx="978.0" cy="450.0" r="3.85" fill="#f5f7f8" stroke="#7a7a7a" stroke-width="1.1"/>
<circle cx="1013.7" cy="422.5" r="3.8" fill="#fff" stroke="#222" stroke-width="1.25"/>
<circle cx="1031.2" cy="418.8" r="3.85" fill="#f5f7f8" stroke="#7a7a7a" stroke-width="1.1"/>
<circle cx="1035.3" cy="407.0" r="3.8" fill="#fff" stroke="#222" stroke-width="1.25"/>
<circle cx="1040.8" cy="411.7" r="3.8" fill="#fff" stroke="#222" stroke-width="1.25"/>
<circle cx="1046.2" cy="410.8" r="3.85" fill="#f5f7f8" stroke="#7a7a7a" stroke-width="1.1"/>
<circle cx="1051.7" cy="451.7" r="3.85" fill="#f5f7f8" stroke="#7a7a7a" stroke-width="1.1"/>
<circle cx="1057.5" cy="449.7" r="3.8" fill="#fff" stroke="#222" stroke-width="1.25"/>
<circle cx="1084.2" cy="443.8" r="3.8" fill="#fff" stroke="#222" stroke-width="1.25"/>
<circle cx="1090.0" cy="448.3" r="3.8" fill="#fff" stroke="#222" stroke-width="1.25"/>
<circle cx="1080.8" cy="456.7" r="3.6" fill="#303030" stroke="#7a7a7a" stroke-width="0.9"/>
<circle cx="1134.5" cy="432.5" r="3.6" fill="#303030" stroke="#7a7a7a" stroke-width="0.9"/>
<circle cx="1006.7" cy="469.2" r="3.8" fill="#fff" stroke="#222" stroke-width="1.25"/>
<circle cx="1012.5" cy="473.8" r="3.8" fill="#fff" stroke="#222" stroke-width="1.25"/>
<circle cx="1066.7" cy="478.0" r="3.85" fill="#f5f7f8" stroke="#7a7a7a" stroke-width="1.1"/>
<circle cx="1094.2" cy="488.3" r="3.85" fill="#f5f7f8" stroke="#7a7a7a" stroke-width="1.1"/>
<circle cx="1107.0" cy="489.7" r="3.85" fill="#f5f7f8" stroke="#7a7a7a" stroke-width="1.1"/>
<circle cx="1154.2" cy="493.0" r="3.85" fill="#f5f7f8" stroke="#7a7a7a" stroke-width="1.1"/>
<circle cx="1011.7" cy="495.3" r="3.85" fill="#f5f7f8" stroke="#7a7a7a" stroke-width="1.1"/>
<circle cx="1000.8" cy="499.2" r="3.85" fill="#f5f7f8" stroke="#7a7a7a" stroke-width="1.1"/>
<circle cx="909.2" cy="503.7" r="3.6" fill="#303030" stroke="#7a7a7a" stroke-width="0.9"/>
<circle cx="963.0" cy="509.5" r="3.6" fill="#303030" stroke="#7a7a7a" stroke-width="0.9"/>
<circle cx="951.7" cy="536.3" r="3.85" fill="#f5f7f8" stroke="#7a7a7a" stroke-width="1.1"/>
<circle cx="948.3" cy="543.8" r="3.85" fill="#f5f7f8" stroke="#7a7a7a" stroke-width="1.1"/>
<circle cx="1078.3" cy="555.5" r="3.8" fill="#fff" stroke="#222" stroke-width="1.25"/>
<circle cx="1381.3" cy="284.7" r="3.85" fill="#f5f7f8" stroke="#7a7a7a" stroke-width="1.1"/>
<circle cx="1245.0" cy="336.7" r="3.8" fill="#fff" stroke="#222" stroke-width="1.25"/>
<circle cx="1392.8" cy="314.2" r="3.8" fill="#fff" stroke="#222" stroke-width="1.25"/>
<circle cx="1354.5" cy="326.3" r="3.8" fill="#fff" stroke="#222" stroke-width="1.25"/>
<circle cx="1447.5" cy="345.3" r="3.8" fill="#fff" stroke="#222" stroke-width="1.25"/>
<circle cx="1408.3" cy="358.0" r="3.8" fill="#fff" stroke="#222" stroke-width="1.25"/>
<circle cx="1426.3" cy="368.8" r="3.8" fill="#fff" stroke="#222" stroke-width="1.25"/>
<circle cx="1257.5" cy="378.3" r="3.8" fill="#fff" stroke="#222" stroke-width="1.25"/>
<circle cx="1330.8" cy="379.7" r="3.8" fill="#fff" stroke="#222" stroke-width="1.25"/>
<circle cx="1386.3" cy="390.3" r="3.8" fill="#fff" stroke="#222" stroke-width="1.25"/>
<circle cx="1438.3" cy="409.5" r="3.8" fill="#fff" stroke="#222" stroke-width="1.25"/>
<circle cx="1177.0" cy="390.8" r="3.85" fill="#f5f7f8" stroke="#7a7a7a" stroke-width="1.1"/>
<circle cx="1188.0" cy="391.3" r="3.8" fill="#fff" stroke="#222" stroke-width="1.25"/>
<circle cx="1172.5" cy="397.5" r="3.8" fill="#fff" stroke="#222" stroke-width="1.25"/>
<circle cx="1184.7" cy="397.0" r="3.85" fill="#f5f7f8" stroke="#7a7a7a" stroke-width="1.1"/>
<circle cx="1237.5" cy="411.2" r="3.6" fill="#303030" stroke="#7a7a7a" stroke-width="0.9"/>
<circle cx="1274.2" cy="411.7" r="3.85" fill="#f5f7f8" stroke="#7a7a7a" stroke-width="1.1"/>
<circle cx="1284.7" cy="423.7" r="3.8" fill="#fff" stroke="#222" stroke-width="1.25"/>
<circle cx="1298.8" cy="423.7" r="3.8" fill="#fff" stroke="#222" stroke-width="1.25"/>
<circle cx="1298.7" cy="430.5" r="3.8" fill="#fff" stroke="#222" stroke-width="1.25"/>
<circle cx="1311.3" cy="427.0" r="3.8" fill="#fff" stroke="#222" stroke-width="1.25"/>
<circle cx="1310.3" cy="431.7" r="3.8" fill="#fff" stroke="#222" stroke-width="1.25"/>
<circle cx="1309.5" cy="436.7" r="3.85" fill="#f5f7f8" stroke="#7a7a7a" stroke-width="1.1"/>
<circle cx="1322.2" cy="433.0" r="3.8" fill="#fff" stroke="#222" stroke-width="1.25"/>
<circle cx="1322.5" cy="439.7" r="3.8" fill="#fff" stroke="#222" stroke-width="1.25"/>
<circle cx="1288.3" cy="439.2" r="3.8" fill="#fff" stroke="#222" stroke-width="1.25"/>
<circle cx="1318.7" cy="446.3" r="3.8" fill="#fff" stroke="#222" stroke-width="1.25"/>
<circle cx="1340.0" cy="418.3" r="3.85" fill="#f5f7f8" stroke="#7a7a7a" stroke-width="1.1"/>
<circle cx="1342.2" cy="427.5" r="3.8" fill="#fff" stroke="#222" stroke-width="1.25"/>
<circle cx="1353.3" cy="423.3" r="3.8" fill="#fff" stroke="#222" stroke-width="1.25"/>
<circle cx="1361.3" cy="417.5" r="3.85" fill="#f5f7f8" stroke="#7a7a7a" stroke-width="1.1"/>
<circle cx="1361.3" cy="420.8" r="3.85" fill="#f5f7f8" stroke="#7a7a7a" stroke-width="1.1"/>
<circle cx="1345.0" cy="443.3" r="3.85" fill="#f5f7f8" stroke="#7a7a7a" stroke-width="1.1"/>
<circle cx="1451.3" cy="445.5" r="3.8" fill="#fff" stroke="#222" stroke-width="1.25"/>
<circle cx="1448.3" cy="453.8" r="3.8" fill="#fff" stroke="#222" stroke-width="1.25"/>
<circle cx="1448.3" cy="446.7" r="3.85" fill="#f5f7f8" stroke="#7a7a7a" stroke-width="1.1"/>
<circle cx="1465.4" cy="355.0" r="3.8" fill="#fff" stroke="#222" stroke-width="1.25"/>
<circle cx="1606.2" cy="436.2" r="3.8" fill="#fff" stroke="#222" stroke-width="1.25"/>
<circle cx="1565.8" cy="450.8" r="3.8" fill="#fff" stroke="#222" stroke-width="1.25"/>
<circle cx="1627.1" cy="448.8" r="3.8" fill="#fff" stroke="#222" stroke-width="1.25"/>
<circle cx="1702.9" cy="491.7" r="3.8" fill="#fff" stroke="#222" stroke-width="1.25"/>
<circle cx="1602.1" cy="532.1" r="3.8" fill="#fff" stroke="#222" stroke-width="1.25"/>
<circle cx="1528.3" cy="486.2" r="3.8" fill="#fff" stroke="#222" stroke-width="1.25"/>
<circle cx="1567.9" cy="574.6" r="3.8" fill="#fff" stroke="#222" stroke-width="1.25"/>
<circle cx="1772.9" cy="504.2" r="3.85" fill="#f5f7f8" stroke="#7a7a7a" stroke-width="1.1"/>
<circle cx="1568.8" cy="532.1" r="3.85" fill="#f5f7f8" stroke="#7a7a7a" stroke-width="1.1"/>
<circle cx="1567.5" cy="535.4" r="3.85" fill="#f5f7f8" stroke="#7a7a7a" stroke-width="1.1"/>
<circle cx="1537.5" cy="530.8" r="3.85" fill="#f5f7f8" stroke="#7a7a7a" stroke-width="1.1"/>
<circle cx="1537.5" cy="538.3" r="3.85" fill="#f5f7f8" stroke="#7a7a7a" stroke-width="1.1"/>
<circle cx="1497.1" cy="572.9" r="3.6" fill="#303030" stroke="#7a7a7a" stroke-width="0.9"/>
<circle cx="1419.2" cy="631.2" r="3.85" fill="#f5f7f8" stroke="#7a7a7a" stroke-width="1.1"/>
<circle cx="1391.7" cy="635.4" r="3.85" fill="#f5f7f8" stroke="#7a7a7a" stroke-width="1.1"/>
<circle cx="1345.8" cy="615.4" r="3.6" fill="#303030" stroke="#7a7a7a" stroke-width="0.9"/>
<circle cx="1200.0" cy="603.8" r="3.85" fill="#f5f7f8" stroke="#7a7a7a" stroke-width="1.1"/>
<circle cx="1357.9" cy="593.3" r="3.85" fill="#f5f7f8" stroke="#7a7a7a" stroke-width="1.1"/>
<circle cx="1479.2" cy="495.4" r="3.8" fill="#fff" stroke="#222" stroke-width="1.25"/>
<circle cx="1483.3" cy="497.5" r="3.85" fill="#f5f7f8" stroke="#7a7a7a" stroke-width="1.1"/>
<circle cx="1477.9" cy="501.7" r="3.85" fill="#f5f7f8" stroke="#7a7a7a" stroke-width="1.1"/>
<circle cx="1482.1" cy="505.0" r="3.85" fill="#f5f7f8" stroke="#7a7a7a" stroke-width="1.1"/>
<circle cx="1512.5" cy="495.4" r="3.85" fill="#f5f7f8" stroke="#7a7a7a" stroke-width="1.1"/>
<circle cx="1515.8" cy="495.8" r="3.8" fill="#fff" stroke="#222" stroke-width="1.25"/>
<circle cx="1510.4" cy="506.2" r="3.8" fill="#fff" stroke="#222" stroke-width="1.25"/>
<circle cx="1515.8" cy="505.4" r="3.85" fill="#f5f7f8" stroke="#7a7a7a" stroke-width="1.1"/>
<circle cx="1503.3" cy="520.4" r="3.85" fill="#f5f7f8" stroke="#7a7a7a" stroke-width="1.1"/>
<circle cx="1511.7" cy="518.3" r="3.8" fill="#fff" stroke="#222" stroke-width="1.25"/>
<circle cx="1513.8" cy="522.9" r="3.8" fill="#fff" stroke="#222" stroke-width="1.25"/>
<circle cx="1500.0" cy="527.5" r="3.85" fill="#f5f7f8" stroke="#7a7a7a" stroke-width="1.1"/>
<circle cx="1504.2" cy="532.9" r="3.85" fill="#f5f7f8" stroke="#7a7a7a" stroke-width="1.1"/>
<circle cx="1506.2" cy="528.8" r="3.85" fill="#f5f7f8" stroke="#7a7a7a" stroke-width="1.1"/>
<circle cx="1527.9" cy="498.8" r="3.85" fill="#f5f7f8" stroke="#7a7a7a" stroke-width="1.1"/>
<circle cx="1444.6" cy="455.0" r="3.85" fill="#f5f7f8" stroke="#7a7a7a" stroke-width="1.1"/>
<circle cx="1474.2" cy="446.7" r="3.85" fill="#f5f7f8" stroke="#7a7a7a" stroke-width="1.1"/>
<circle cx="1477.1" cy="447.9" r="3.8" fill="#fff" stroke="#222" stroke-width="1.25"/>
<circle cx="1481.2" cy="450.8" r="3.85" fill="#f5f7f8" stroke="#7a7a7a" stroke-width="1.1"/>
<circle cx="1475.0" cy="455.0" r="3.85" fill="#f5f7f8" stroke="#7a7a7a" stroke-width="1.1"/>
<circle cx="1481.2" cy="457.1" r="3.8" fill="#fff" stroke="#222" stroke-width="1.25"/>
<circle cx="1367.5" cy="582.1" r="3.8" fill="#fff" stroke="#222" stroke-width="1.25"/>
<circle cx="1379.2" cy="578.8" r="3.85" fill="#f5f7f8" stroke="#7a7a7a" stroke-width="1.1"/>
<circle cx="1384.2" cy="581.2" r="3.8" fill="#fff" stroke="#222" stroke-width="1.25"/>
<circle cx="1377.1" cy="584.2" r="3.85" fill="#f5f7f8" stroke="#7a7a7a" stroke-width="1.1"/>
<circle cx="1403.3" cy="491.2" r="3.8" fill="#fff" stroke="#222" stroke-width="1.25"/>
<circle cx="1417.9" cy="496.7" r="3.8" fill="#fff" stroke="#222" stroke-width="1.25"/>
<circle cx="1425.8" cy="489.6" r="3.85" fill="#f5f7f8" stroke="#7a7a7a" stroke-width="1.1"/>
<circle cx="1425.8" cy="493.8" r="3.85" fill="#f5f7f8" stroke="#7a7a7a" stroke-width="1.1"/>
<circle cx="1345.0" cy="497.5" r="3.8" fill="#fff" stroke="#222" stroke-width="1.25"/>
<circle cx="1360.4" cy="497.5" r="3.8" fill="#fff" stroke="#222" stroke-width="1.25"/>
<circle cx="1360.4" cy="505.0" r="3.8" fill="#fff" stroke="#222" stroke-width="1.25"/>
<circle cx="1373.8" cy="500.8" r="3.8" fill="#fff" stroke="#222" stroke-width="1.25"/>
<circle cx="1372.1" cy="507.1" r="3.8" fill="#fff" stroke="#222" stroke-width="1.25"/>
<circle cx="1372.9" cy="511.2" r="3.8" fill="#fff" stroke="#222" stroke-width="1.25"/>
<circle cx="1385.4" cy="507.9" r="3.8" fill="#fff" stroke="#222" stroke-width="1.25"/>
<circle cx="1386.2" cy="515.4" r="3.8" fill="#fff" stroke="#222" stroke-width="1.25"/>
<circle cx="1382.5" cy="522.5" r="3.8" fill="#fff" stroke="#222" stroke-width="1.25"/>
<circle cx="1350.0" cy="514.6" r="3.8" fill="#fff" stroke="#222" stroke-width="1.25"/>
<circle cx="1344.2" cy="523.8" r="3.85" fill="#f5f7f8" stroke="#7a7a7a" stroke-width="1.1"/>
<circle cx="1322.1" cy="494.6" r="3.8" fill="#fff" stroke="#222" stroke-width="1.25"/>
<circle cx="1329.2" cy="499.6" r="3.85" fill="#f5f7f8" stroke="#7a7a7a" stroke-width="1.1"/>
<circle cx="1285.4" cy="474.6" r="3.8" fill="#fff" stroke="#222" stroke-width="1.25"/>
<circle cx="1293.8" cy="482.1" r="3.8" fill="#fff" stroke="#222" stroke-width="1.25"/>
<circle cx="1299.2" cy="480.0" r="3.85" fill="#f5f7f8" stroke="#7a7a7a" stroke-width="1.1"/>
<circle cx="1303.3" cy="466.2" r="3.8" fill="#fff" stroke="#222" stroke-width="1.25"/>
<circle cx="1307.5" cy="476.7" r="3.85" fill="#f5f7f8" stroke="#7a7a7a" stroke-width="1.1"/>
<circle cx="1310.4" cy="471.7" r="3.8" fill="#fff" stroke="#222" stroke-width="1.25"/>
<circle cx="1227.1" cy="480.4" r="3.8" fill="#fff" stroke="#222" stroke-width="1.25"/>
<circle cx="1241.7" cy="481.2" r="3.8" fill="#fff" stroke="#222" stroke-width="1.25"/>
<circle cx="1254.2" cy="485.0" r="3.8" fill="#fff" stroke="#222" stroke-width="1.25"/>
<circle cx="1255.0" cy="490.4" r="3.8" fill="#fff" stroke="#222" stroke-width="1.25"/>
<circle cx="1253.3" cy="494.6" r="3.8" fill="#fff" stroke="#222" stroke-width="1.25"/>
<circle cx="1265.8" cy="490.4" r="3.8" fill="#fff" stroke="#222" stroke-width="1.25"/>
<circle cx="1266.7" cy="497.9" r="3.8" fill="#fff" stroke="#222" stroke-width="1.25"/>
<circle cx="1231.2" cy="497.5" r="3.8" fill="#fff" stroke="#222" stroke-width="1.25"/>
<circle cx="1228.3" cy="498.8" r="3.85" fill="#f5f7f8" stroke="#7a7a7a" stroke-width="1.1"/>
<circle cx="1261.7" cy="505.0" r="3.8" fill="#fff" stroke="#222" stroke-width="1.25"/>
<circle cx="1222.5" cy="467.5" r="3.85" fill="#f5f7f8" stroke="#7a7a7a" stroke-width="1.1"/>
<circle cx="1192.9" cy="465.4" r="3.6" fill="#303030" stroke="#7a7a7a" stroke-width="0.9"/>
<circle cx="1167.1" cy="474.2" r="3.6" fill="#303030" stroke="#7a7a7a" stroke-width="0.9"/>
<circle cx="1217.9" cy="540.4" r="3.85" fill="#f5f7f8" stroke="#7a7a7a" stroke-width="1.1"/>
<circle cx="1263.8" cy="543.3" r="3.6" fill="#303030" stroke="#7a7a7a" stroke-width="0.9"/>
<circle cx="1311.7" cy="536.2" r="3.6" fill="#303030" stroke="#7a7a7a" stroke-width="0.9"/>
<circle cx="1179.2" cy="515.4" r="3.85" fill="#f5f7f8" stroke="#7a7a7a" stroke-width="1.1"/>
<circle cx="1187.5" cy="521.7" r="3.85" fill="#f5f7f8" stroke="#7a7a7a" stroke-width="1.1"/>
<circle cx="1210.4" cy="568.3" r="3.85" fill="#f5f7f8" stroke="#7a7a7a" stroke-width="1.1"/>
<circle cx="1208.3" cy="576.7" r="3.85" fill="#f5f7f8" stroke="#7a7a7a" stroke-width="1.1"/>
<circle cx="1150.8" cy="622.5" r="3.85" fill="#f5f7f8" stroke="#7a7a7a" stroke-width="1.1"/>
<circle cx="1162.5" cy="618.3" r="3.85" fill="#f5f7f8" stroke="#7a7a7a" stroke-width="1.1"/>
<circle cx="1060.4" cy="631.2" r="3.85" fill="#f5f7f8" stroke="#7a7a7a" stroke-width="1.1"/>
<circle cx="1046.7" cy="629.2" r="3.85" fill="#f5f7f8" stroke="#7a7a7a" stroke-width="1.1"/>
<circle cx="1115.4" cy="638.3" r="3.85" fill="#f5f7f8" stroke="#7a7a7a" stroke-width="1.1"/>
<circle cx="1103.3" cy="673.8" r="3.6" fill="#303030" stroke="#7a7a7a" stroke-width="0.9"/>
<circle cx="1285.4" cy="438.3" r="3.85" fill="#f5f7f8" stroke="#7a7a7a" stroke-width="1.1"/>
<circle cx="1265.0" cy="659.2" r="3.8" fill="#fff" stroke="#222" stroke-width="1.25"/>
<circle cx="1253.3" cy="662.5" r="3.85" fill="#f5f7f8" stroke="#7a7a7a" stroke-width="1.1"/>
<circle cx="1269.2" cy="697.5" r="3.8" fill="#fff" stroke="#222" stroke-width="1.25"/>
<circle cx="523.7" cy="694.5" r="3.8" fill="#fff" stroke="#222" stroke-width="1.25"/>
<circle cx="547.2" cy="702.0" r="3.85" fill="#f5f7f8" stroke="#7a7a7a" stroke-width="1.1"/>
<circle cx="559.2" cy="697.8" r="3.85" fill="#f5f7f8" stroke="#7a7a7a" stroke-width="1.1"/>
<circle cx="564.7" cy="698.3" r="3.8" fill="#fff" stroke="#222" stroke-width="1.25"/>
<circle cx="571.3" cy="682.0" r="3.8" fill="#fff" stroke="#222" stroke-width="1.25"/>
<circle cx="604.5" cy="684.5" r="3.8" fill="#fff" stroke="#222" stroke-width="1.25"/>
<circle cx="625.3" cy="675.3" r="3.85" fill="#f5f7f8" stroke="#7a7a7a" stroke-width="1.1"/>
<circle cx="642.0" cy="683.0" r="3.6" fill="#303030" stroke="#7a7a7a" stroke-width="0.9"/>
<circle cx="590.8" cy="699.7" r="3.8" fill="#fff" stroke="#222" stroke-width="1.25"/>
<circle cx="599.2" cy="698.0" r="3.6" fill="#303030" stroke="#7a7a7a" stroke-width="0.9"/>
<circle cx="622.8" cy="701.7" r="3.85" fill="#f5f7f8" stroke="#7a7a7a" stroke-width="1.1"/>
<circle cx="585.8" cy="715.8" r="3.85" fill="#f5f7f8" stroke="#7a7a7a" stroke-width="1.1"/>
<circle cx="575.8" cy="719.5" r="3.8" fill="#fff" stroke="#222" stroke-width="1.25"/>
<circle cx="563.8" cy="723.8" r="3.85" fill="#f5f7f8" stroke="#7a7a7a" stroke-width="1.1"/>
<circle cx="572.8" cy="735.5" r="3.85" fill="#f5f7f8" stroke="#7a7a7a" stroke-width="1.1"/>
<circle cx="585.0" cy="731.2" r="3.8" fill="#fff" stroke="#a070e0" stroke-width="1.4"/>
<circle cx="596.3" cy="727.2" r="3.8" fill="#fff" stroke="#222" stroke-width="1.25"/>
<circle cx="608.3" cy="723.0" r="3.8" fill="#fff" stroke="#a070e0" stroke-width="1.4"/>
<circle cx="622.5" cy="741.2" r="3.85" fill="#f5f7f8" stroke="#7a7a7a" stroke-width="1.1"/>
<circle cx="640.0" cy="768.8" r="3.8" fill="#fff" stroke="#222" stroke-width="1.25"/>
<circle cx="673.3" cy="666.7" r="3.8" fill="#fff" stroke="#222" stroke-width="1.25"/>
<circle cx="675.8" cy="684.2" r="3.8" fill="#fff" stroke="#222" stroke-width="1.25"/>
<circle cx="668.3" cy="691.7" r="3.85" fill="#f5f7f8" stroke="#7a7a7a" stroke-width="1.1"/>
<circle cx="661.2" cy="703.8" r="3.85" fill="#f5f7f8" stroke="#7a7a7a" stroke-width="1.1"/>
<circle cx="685.0" cy="692.5" r="3.85" fill="#f5f7f8" stroke="#7a7a7a" stroke-width="1.1"/>
<circle cx="688.3" cy="694.2" r="3.6" fill="#303030" stroke="#7a7a7a" stroke-width="0.9"/>
<circle cx="689.5" cy="697.5" r="3.8" fill="#fff" stroke="#222" stroke-width="1.25"/>
<circle cx="681.3" cy="707.2" r="3.85" fill="#f5f7f8" stroke="#7a7a7a" stroke-width="1.1"/>
<circle cx="725.0" cy="660.5" r="3.85" fill="#f5f7f8" stroke="#7a7a7a" stroke-width="1.1"/>
<circle cx="756.7" cy="697.5" r="3.85" fill="#f5f7f8" stroke="#7a7a7a" stroke-width="1.1"/>
<circle cx="718.0" cy="718.3" r="3.8" fill="#fff" stroke="#222" stroke-width="1.25"/>
<circle cx="724.5" cy="724.2" r="3.85" fill="#f5f7f8" stroke="#7a7a7a" stroke-width="1.1"/>
<circle cx="795.0" cy="717.2" r="3.8" fill="#fff" stroke="#222" stroke-width="1.25"/>
<circle cx="800.8" cy="723.8" r="3.8" fill="#fff" stroke="#222" stroke-width="1.25"/>
<circle cx="813.3" cy="722.5" r="3.8" fill="#fff" stroke="#222" stroke-width="1.25"/>
<circle cx="809.2" cy="732.0" r="3.85" fill="#f5f7f8" stroke="#7a7a7a" stroke-width="1.1"/>
<circle cx="767.2" cy="727.8" r="3.85" fill="#f5f7f8" stroke="#7a7a7a" stroke-width="1.1"/>
<circle cx="772.5" cy="734.5" r="3.8" fill="#fff" stroke="#222" stroke-width="1.25"/>
<circle cx="817.5" cy="786.2" r="3.8" fill="#fff" stroke="#222" stroke-width="1.25"/>
<circle cx="970.3" cy="642.8" r="3.6" fill="#303030" stroke="#7a7a7a" stroke-width="0.9"/>
<circle cx="988.7" cy="652.8" r="3.6" fill="#303030" stroke="#7a7a7a" stroke-width="0.9"/>
<circle cx="1000.0" cy="683.7" r="3.85" fill="#f5f7f8" stroke="#7a7a7a" stroke-width="1.1"/>
<circle cx="980.0" cy="688.3" r="3.8" fill="#fff" stroke="#222" stroke-width="1.25"/>
<circle cx="1033.3" cy="688.3" r="3.8" fill="#fff" stroke="#222" stroke-width="1.25"/>
<circle cx="891.3" cy="682.0" r="3.8" fill="#fff" stroke="#222" stroke-width="1.25"/>
<circle cx="897.5" cy="688.3" r="3.8" fill="#fff" stroke="#222" stroke-width="1.25"/>
<circle cx="864.2" cy="692.0" r="3.85" fill="#f5f7f8" stroke="#7a7a7a" stroke-width="1.1"/>
<circle cx="870.0" cy="698.3" r="3.8" fill="#fff" stroke="#222" stroke-width="1.25"/>
<circle cx="883.0" cy="698.0" r="3.85" fill="#f5f7f8" stroke="#7a7a7a" stroke-width="1.1"/>
<circle cx="841.3" cy="712.2" r="3.8" fill="#fff" stroke="#222" stroke-width="1.25"/>
<circle cx="859.2" cy="718.7" r="3.85" fill="#f5f7f8" stroke="#7a7a7a" stroke-width="1.1"/>
<circle cx="823.8" cy="720.8" r="3.85" fill="#f5f7f8" stroke="#7a7a7a" stroke-width="1.1"/>
<circle cx="817.5" cy="726.7" r="3.85" fill="#f5f7f8" stroke="#7a7a7a" stroke-width="1.1"/>
<circle cx="901.2" cy="712.5" r="3.85" fill="#f5f7f8" stroke="#7a7a7a" stroke-width="1.1"/>
<circle cx="913.8" cy="715.0" r="3.85" fill="#f5f7f8" stroke="#7a7a7a" stroke-width="1.1"/>
<circle cx="940.8" cy="704.7" r="3.8" fill="#fff" stroke="#222" stroke-width="1.25"/>
<circle cx="953.7" cy="698.3" r="3.85" fill="#f5f7f8" stroke="#7a7a7a" stroke-width="1.1"/>
<circle cx="945.8" cy="712.0" r="3.85" fill="#f5f7f8" stroke="#7a7a7a" stroke-width="1.1"/>
<circle cx="973.3" cy="701.3" r="3.8" fill="#fff" stroke="#222" stroke-width="1.25"/>
<circle cx="980.8" cy="706.3" r="3.85" fill="#f5f7f8" stroke="#7a7a7a" stroke-width="1.1"/>
<circle cx="980.8" cy="713.0" r="3.85" fill="#f5f7f8" stroke="#7a7a7a" stroke-width="1.1"/>
<circle cx="980.8" cy="718.3" r="3.85" fill="#f5f7f8" stroke="#7a7a7a" stroke-width="1.1"/>
<circle cx="1007.5" cy="698.0" r="3.8" fill="#fff" stroke="#222" stroke-width="1.25"/>
<circle cx="1007.5" cy="708.3" r="3.8" fill="#fff" stroke="#222" stroke-width="1.25"/>
<circle cx="997.2" cy="711.7" r="3.8" fill="#fff" stroke="#222" stroke-width="1.25"/>
<circle cx="1015.3" cy="712.0" r="3.85" fill="#f5f7f8" stroke="#7a7a7a" stroke-width="1.1"/>
<circle cx="1023.3" cy="701.3" r="3.8" fill="#fff" stroke="#222" stroke-width="1.25"/>
<circle cx="1041.2" cy="701.3" r="3.8" fill="#fff" stroke="#222" stroke-width="1.25"/>
<circle cx="1085.3" cy="703.3" r="3.8" fill="#fff" stroke="#222" stroke-width="1.25"/>
<circle cx="1100.8" cy="704.2" r="3.85" fill="#f5f7f8" stroke="#7a7a7a" stroke-width="1.1"/>
<circle cx="1059.2" cy="713.7" r="3.8" fill="#fff" stroke="#222" stroke-width="1.25"/>
<circle cx="1070.8" cy="711.3" r="3.85" fill="#f5f7f8" stroke="#7a7a7a" stroke-width="1.1"/>
<circle cx="1081.2" cy="715.8" r="3.8" fill="#fff" stroke="#222" stroke-width="1.25"/>
<circle cx="1090.8" cy="712.0" r="3.8" fill="#fff" stroke="#222" stroke-width="1.25"/>
<circle cx="1055.0" cy="726.2" r="3.85" fill="#f5f7f8" stroke="#7a7a7a" stroke-width="1.1"/>
<circle cx="1065.0" cy="722.0" r="3.85" fill="#f5f7f8" stroke="#7a7a7a" stroke-width="1.1"/>
<circle cx="1077.5" cy="728.7" r="3.8" fill="#fff" stroke="#222" stroke-width="1.25"/>
<circle cx="1090.0" cy="726.3" r="3.85" fill="#f5f7f8" stroke="#7a7a7a" stroke-width="1.1"/>
<circle cx="1118.0" cy="735.3" r="3.8" fill="#fff" stroke="#222" stroke-width="1.25"/>
<circle cx="1011.2" cy="732.5" r="3.8" fill="#fff" stroke="#222" stroke-width="1.25"/>
<circle cx="900.8" cy="735.8" r="3.85" fill="#f5f7f8" stroke="#7a7a7a" stroke-width="1.1"/>
<circle cx="946.2" cy="736.7" r="3.8" fill="#fff" stroke="#222" stroke-width="1.25"/>
<circle cx="952.2" cy="743.3" r="3.8" fill="#fff" stroke="#222" stroke-width="1.25"/>
<circle cx="984.2" cy="743.3" r="3.8" fill="#fff" stroke="#222" stroke-width="1.25"/>
<circle cx="1051.7" cy="739.5" r="3.8" fill="#fff" stroke="#222" stroke-width="1.25"/>
<circle cx="1038.3" cy="744.2" r="3.8" fill="#fff" stroke="#222" stroke-width="1.25"/>
<circle cx="918.3" cy="747.2" r="3.8" fill="#fff" stroke="#222" stroke-width="1.25"/>
<circle cx="925.0" cy="754.2" r="3.8" fill="#fff" stroke="#222" stroke-width="1.25"/>
<circle cx="943.7" cy="753.3" r="3.8" fill="#fff" stroke="#222" stroke-width="1.25"/>
<circle cx="882.8" cy="756.3" r="3.85" fill="#f5f7f8" stroke="#7a7a7a" stroke-width="1.1"/>
<circle cx="875.8" cy="759.5" r="3.85" fill="#f5f7f8" stroke="#7a7a7a" stroke-width="1.1"/>
<circle cx="1011.3" cy="755.0" r="3.85" fill="#f5f7f8" stroke="#7a7a7a" stroke-width="1.1"/>
<circle cx="1025.0" cy="752.5" r="3.85" fill="#f5f7f8" stroke="#7a7a7a" stroke-width="1.1"/>
<circle cx="1076.2" cy="753.0" r="3.8" fill="#fff" stroke="#222" stroke-width="1.25"/>
<circle cx="1087.5" cy="756.7" r="3.8" fill="#fff" stroke="#222" stroke-width="1.25"/>
<circle cx="1097.8" cy="752.8" r="3.8" fill="#fff" stroke="#222" stroke-width="1.25"/>
<circle cx="1114.2" cy="745.5" r="3.8" fill="#fff" stroke="#222" stroke-width="1.25"/>
<circle cx="1110.8" cy="759.2" r="3.8" fill="#fff" stroke="#222" stroke-width="1.25"/>
<circle cx="987.5" cy="771.2" r="3.8" fill="#fff" stroke="#222" stroke-width="1.25"/>
<circle cx="1032.2" cy="771.2" r="3.8" fill="#fff" stroke="#222" stroke-width="1.25"/>
<circle cx="1009.7" cy="780.3" r="3.8" fill="#fff" stroke="#222" stroke-width="1.25"/>
<circle cx="1084.2" cy="770.0" r="3.8" fill="#fff" stroke="#222" stroke-width="1.25"/>
<circle cx="1071.3" cy="775.5" r="3.8" fill="#fff" stroke="#222" stroke-width="1.25"/>
<circle cx="1054.2" cy="783.0" r="3.6" fill="#303030" stroke="#7a7a7a" stroke-width="0.9"/>
<circle cx="1058.3" cy="783.7" r="3.85" fill="#f5f7f8" stroke="#7a7a7a" stroke-width="1.1"/>
<circle cx="1044.2" cy="786.7" r="3.85" fill="#f5f7f8" stroke="#7a7a7a" stroke-width="1.1"/>
<circle cx="855.0" cy="767.2" r="3.85" fill="#f5f7f8" stroke="#7a7a7a" stroke-width="1.1"/>
<circle cx="847.5" cy="769.7" r="3.8" fill="#fff" stroke="#222" stroke-width="1.25"/>
<circle cx="847.5" cy="775.0" r="3.8" fill="#fff" stroke="#222" stroke-width="1.25"/>
<circle cx="853.7" cy="781.7" r="3.8" fill="#fff" stroke="#222" stroke-width="1.25"/>
<circle cx="825.0" cy="793.0" r="3.8" fill="#fff" stroke="#222" stroke-width="1.25"/>
<circle cx="964.0" cy="822.0" r="3.8" fill="#fff" stroke="#222" stroke-width="1.25"/>
<circle cx="1009.0" cy="821.0" r="3.85" fill="#f5f7f8" stroke="#7a7a7a" stroke-width="1.1"/>
<circle cx="1138.0" cy="725.3" r="3.85" fill="#f5f7f8" stroke="#7a7a7a" stroke-width="1.1"/>
<circle cx="1134.2" cy="733.7" r="3.85" fill="#f5f7f8" stroke="#7a7a7a" stroke-width="1.1"/>
<circle cx="1124.2" cy="741.7" r="3.8" fill="#fff" stroke="#222" stroke-width="1.25"/>
<circle cx="1110.8" cy="743.3" r="3.85" fill="#f5f7f8" stroke="#7a7a7a" stroke-width="1.1"/>
<circle cx="1126.7" cy="757.5" r="3.6" fill="#303030" stroke="#7a7a7a" stroke-width="0.9"/>
<circle cx="1123.7" cy="755.5" r="3.6" fill="#303030" stroke="#7a7a7a" stroke-width="0.9"/>
<circle cx="1179.2" cy="750.8" r="3.85" fill="#f5f7f8" stroke="#7a7a7a" stroke-width="1.1"/>
<circle cx="1201.3" cy="733.3" r="3.8" fill="#fff" stroke="#222" stroke-width="1.25"/>
<circle cx="1196.7" cy="738.7" r="3.85" fill="#f5f7f8" stroke="#7a7a7a" stroke-width="1.1"/>
<circle cx="890.0" cy="561.9" r="3.6" fill="#303030" stroke="#7a7a7a" stroke-width="0.9"/>
<circle cx="896.9" cy="574.4" r="3.6" fill="#303030" stroke="#7a7a7a" stroke-width="0.9"/>
<circle cx="937.5" cy="575.0" r="3.6" fill="#303030" stroke="#7a7a7a" stroke-width="0.9"/>
<circle cx="861.9" cy="502.1" r="3.8" fill="#fff" stroke="#222" stroke-width="1.25"/>
<circle cx="776.5" cy="484.8" r="3.85" fill="#f5f7f8" stroke="#7a7a7a" stroke-width="1.1"/>
<circle cx="825.8" cy="459.2" r="3.85" fill="#f5f7f8" stroke="#7a7a7a" stroke-width="1.1"/>
<circle cx="823.3" cy="498.3" r="3.85" fill="#f5f7f8" stroke="#7a7a7a" stroke-width="1.1"/>
<circle cx="988.0" cy="620.0" r="3.85" fill="#f5f7f8" stroke="#7a7a7a" stroke-width="1.1"/>
<circle cx="961.6" cy="841.0" r="3.85" fill="#f5f7f8" stroke="#7a7a7a" stroke-width="1.1"/>
<circle cx="870.8" cy="892.3" r="3.85" fill="#f5f7f8" stroke="#7a7a7a" stroke-width="1.1"/>
<circle cx="963.0" cy="592.0" r="3.85" fill="#f5f7f8" stroke="#7a7a7a" stroke-width="1.1"/>
<circle cx="970.4" cy="598.5" r="3.85" fill="#f5f7f8" stroke="#7a7a7a" stroke-width="1.1"/></svg>
<div class="a" style="left:841px;top:962px;width:237px;height:24px;background:#eff1ee"></div>
<svg style="left:0;top:0" width="1" height="1">
<path d="M852 967v16M849 970l3-3 3 3" stroke="#444" stroke-width="1" fill="none"/><ellipse cx="852" cy="975" rx="7" ry="2.8" fill="none" stroke="#333" stroke-width="1.1"/><path d="M847 978l-2-2v4z" fill="#333"/>
<path d="M864 973h6l-3 3.5z" fill="#333"/>
<rect x="877.5" y="969.5" width="15" height="12" fill="#f3f3f3" stroke="#444" stroke-width="1"/><rect x="880" y="974" width="10" height="4" fill="#9aa" stroke="#444" stroke-width="0.8"/><path d="M879 969l2-3 4 2 3-2 3 2" stroke="#556" stroke-width="0.9" fill="none"/>
<g fill="#f4f4f4" stroke="#444" stroke-width="0.8"><rect x="905.5" y="969" width="2.6" height="9" rx="1.3"/><rect x="908.3" y="967" width="2.6" height="10" rx="1.3"/><rect x="911.1" y="967.5" width="2.6" height="10" rx="1.3"/><rect x="913.9" y="969.5" width="2.6" height="9" rx="1.3"/><path d="M905.5 975 h11 v4 c0 2.5 -2 4 -4.5 4 h-2.5 c-1.5 0 -2.5 -1 -3.5 -2 l-3.5 -4 c-0.8 -1 0.5 -2 1.5 -1.3 l1.5 1.3z"/></g>
<circle cx="934" cy="974" r="4.5" fill="#eef" stroke="#333" stroke-width="1.1"/><path d="M937 977l3.5 3.5" stroke="#333" stroke-width="2"/><path d="M939 968h4M941 966v4M939 971.5h4" stroke="#333" stroke-width="0.9"/>
<rect x="955" y="966" width="15" height="15" fill="none" stroke="#666" stroke-width="0.8" stroke-dasharray="1.5 1.2"/><circle cx="962" cy="972.5" r="5.2" fill="#eef" stroke="#333" stroke-width="1.1"/><path d="M966 976.5l4 4" stroke="#333" stroke-width="2"/>
<path d="M975 972h7l-3.5 4z" fill="#333"/>
<rect x="988.5" y="966.5" width="15" height="12" rx="1" fill="#8fb0d8" stroke="#444" stroke-width="1"/><path d="M994 980h4M993 981h6" stroke="#444" stroke-width="1"/>
<path d="M1006 972h6l-3 3.5z" fill="#333"/>
<rect x="1019" y="966.5" width="15" height="15" fill="#888"/><path d="M1022.5 966.5v15M1026.5 966.5v15M1030.5 966.5v15M1019 970h15M1019 974h15M1019 978h15" stroke="#eee" stroke-width="0.8"/>
<path d="M1037 972h6l-3 3.5z" fill="#333"/>
<rect x="1050" y="967" width="7" height="6.5" fill="#8fb0d8" stroke="#3c5a9a" stroke-width="0.9"/><rect x="1058" y="967" width="7" height="6.5" fill="#8fb0d8" stroke="#3c5a9a" stroke-width="0.9"/><rect x="1050" y="974.5" width="7" height="6.5" fill="#8fb0d8" stroke="#3c5a9a" stroke-width="0.9"/><rect x="1058" y="974.5" width="7" height="6.5" fill="#8fb0d8" stroke="#3c5a9a" stroke-width="0.9"/>
<path d="M1068 972h6l-3 3.5z" fill="#333"/>
</svg>
<svg style="left:1891px;top:966px" width="16" height="16" viewBox="0 0 16 16"><path d="M8 1A7 7 0 1 0 8 15H15V8A7 7 0 0 0 8 1z" fill="#333"/><path d="M4.5 11.5L8 4L11.5 11.5H9.6L8 7.8L6.4 11.5z M7 10h3.5" fill="#fff" stroke="none"/><path d="M6.2 10.2H10" stroke="#fff" stroke-width="1.2"/></svg>
<svg style="left:0;top:0" width="1" height="1">
<defs><radialGradient id="shd" cx="0.5" cy="0.5" r="0.5"><stop offset="0" stop-color="#d0d0d0"/><stop offset="0.6" stop-color="#e8e8e8"/><stop offset="1" stop-color="#fff" stop-opacity="0"/></radialGradient></defs>
<ellipse cx="1860" cy="226" rx="36" ry="22" fill="url(#shd)"/>
<path d="M1824 175L1847 198L1848 239L1825 215.5z" fill="#e4e5e3"/>
<path d="M1847 198L1892 184L1890 221L1848 239z" fill="#ebecea"/>
<path d="M1824 175L1863 165L1892 184L1847 198z" fill="#f0f1ef"/>
<path d="M1824 175L1863 165L1892 184L1890 221L1848 239L1825 215.5z M1824 175L1847 198L1892 184 M1847 198L1848 239" stroke="#8a8a8a" stroke-width="0.6" stroke-dasharray="2 1.5" fill="none"/>
<circle cx="1849" cy="200" r="5" fill="#dde3ea" opacity="0.8"/>
<path d="M1822.5 169L1825 215" stroke="#7d7dff" stroke-width="1.3"/><path d="M1826 215l30 33" stroke="#ff8080" stroke-width="1.3"/>
<path d="M1818 158h6l-6 8h6" stroke="#7b7bff" stroke-width="1.6" fill="none"/>
<path d="M1852 248l6 7M1858 248l-6 7" stroke="#ff7f7f" stroke-width="1.6" fill="none"/>
<text x="1856" y="222" font-size="9.5" fill="#8e8f99" font-family="Liberation Sans" font-weight="bold" transform="rotate(-20 1868 214)">RIGHT</text>
<text x="1851" y="185" font-size="7" fill="#8e8f99" font-family="Liberation Sans" font-weight="bold" transform="rotate(200 1858 181)">TOP</text>
<text x="1828" y="194" font-size="6" fill="#9a9aa0" font-family="Liberation Sans" font-weight="bold" transform="rotate(65 1834 198)">FRONT</text>
<path d="M1852 270l14-2-13 5z M1844 284l20-8M1846 286l20-8" stroke="#56b4e9" stroke-width="1" fill="none"/>
<circle cx="1843" cy="285" r="3.5" fill="#f2f4f6" stroke="#555" stroke-width="0.8"/>
<circle cx="1861" cy="270" r="3.6" fill="#f2f4f6" stroke="#333" stroke-width="0.9"/><circle cx="1867" cy="268" r="3.6" fill="#f2f4f6" stroke="#333" stroke-width="0.9"/><circle cx="1863" cy="277" r="3.6" fill="#f2f4f6" stroke="#111" stroke-width="1.4"/>
</svg>
</body></html>
